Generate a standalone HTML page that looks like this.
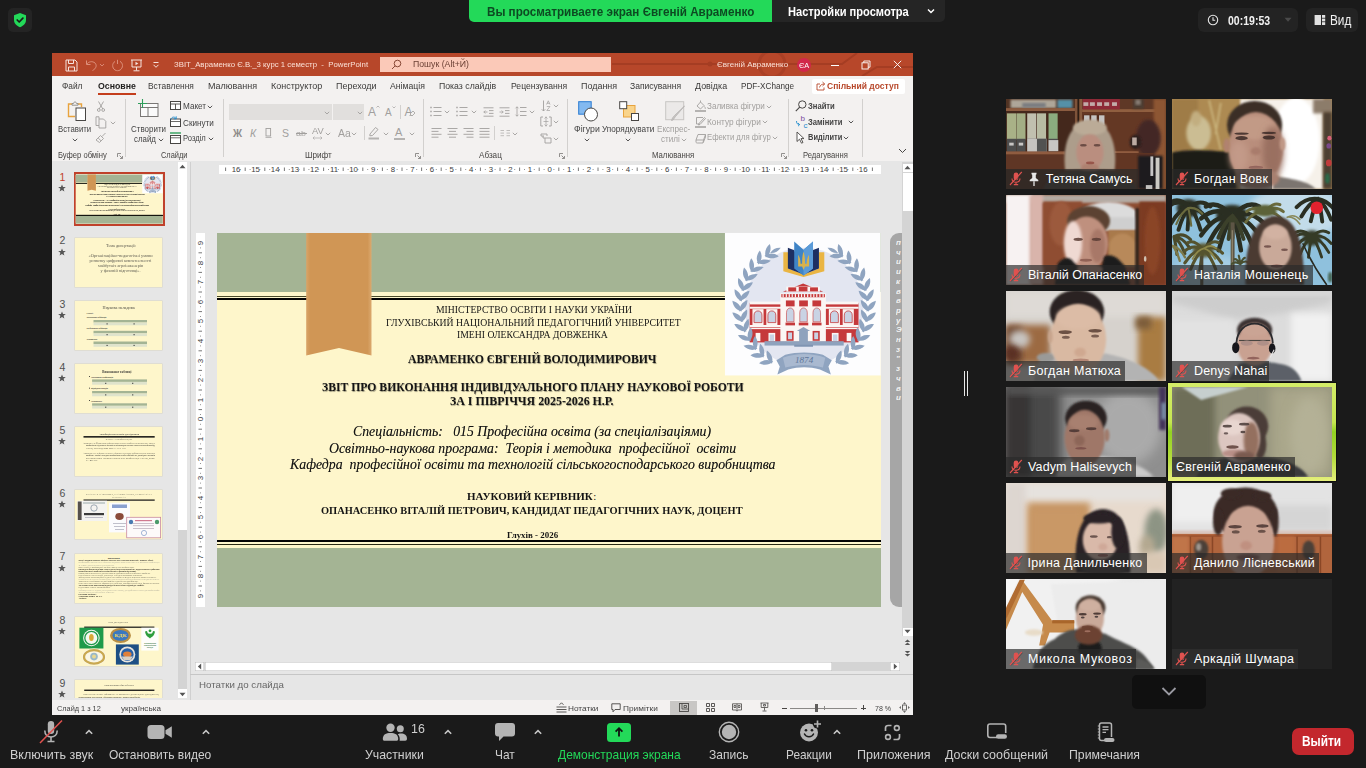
<!DOCTYPE html>
<html lang="uk"><head><meta charset="utf-8"><title>Zoom Meeting</title>
<style>
html,body{margin:0;padding:0;background:#1a1a1a;}
body{width:1366px;height:768px;position:relative;overflow:hidden;font-family:"Liberation Sans",sans-serif;}
svg{display:block;overflow:visible}
</style></head><body>
<div style="position:absolute;left:8px;top:8px;width:24px;height:24px;background:#242424;border-radius:5px;"></div>
<svg style="position:absolute;left:12px;top:12px" width="16" height="16" viewBox="0 0 16 16">
<path d="M8 1 L14 3.2 V8 C14 11.6 11.2 14 8 15.2 C4.800 14 2 11.6 2 8 V3.2 Z" fill="#23d959"/>
<path d="M5.200 8 L7.200 10 L10.900 6.200" fill="none" stroke="#1a1a1a" stroke-width="1.7" stroke-linecap="round" stroke-linejoin="round"/></svg>
<div style="position:absolute;left:469px;top:0px;width:303px;height:22px;background:#23d959;border-radius:0 0 0 5px;"></div>
<div style="position:absolute;left:772px;top:0px;width:173px;height:22px;background:#252525;border-radius:0 0 5px 0;"></div>
<span style="position:absolute;left:487.10px;top:4.50px;font:normal 700 13px/1 'Liberation Sans', sans-serif;color:#0d4a22;white-space:pre;letter-spacing:0.000px;transform-origin:0 0;transform:scaleX(0.8970);">Вы просматриваете экран Євгеній Авраменко</span>
<span style="position:absolute;left:787.60px;top:4.50px;font:normal 700 13px/1 'Liberation Sans', sans-serif;color:#ffffff;white-space:pre;letter-spacing:0.000px;transform-origin:0 0;transform:scaleX(0.8531);">Настройки просмотра</span>
<svg style="position:absolute;left:926px;top:7px" width="10" height="8" viewBox="0 0 10 8"><path d="M2 2.500 L5 5.500 L8 2.500" fill="none" stroke="#fff" stroke-width="1.500"/></svg>
<div style="position:absolute;left:1198px;top:8px;width:100px;height:24px;background:#232323;border-radius:6px;"></div>
<div style="position:absolute;left:1306px;top:8px;width:52px;height:24px;background:#232323;border-radius:6px;"></div>
<svg style="position:absolute;left:1207px;top:14px" width="12" height="12" viewBox="0 0 12 12"><circle cx="6" cy="6" r="4.700" fill="none" stroke="#e6e6e6" stroke-width="1.100"/><path d="M6 3.300 V6.300 H8.200" fill="none" stroke="#e6e6e6" stroke-width="1.100"/></svg>
<span style="position:absolute;left:1228.30px;top:13.50px;font:normal 700 13px/1 'Liberation Sans', sans-serif;color:#f0f0f0;white-space:pre;letter-spacing:0.000px;transform-origin:0 0;transform:scaleX(0.8089);">00:19:53</span>
<svg style="position:absolute;left:1283px;top:17px" width="10" height="6" viewBox="0 0 10 6"><path d="M1.500 0.800 H8.500 L5 4.800 Z" fill="#4a4a4a"/></svg>
<svg style="position:absolute;left:1314px;top:14px" width="12" height="12" viewBox="0 0 12 12"><rect x="0.600" y="1" width="6.400" height="10" fill="#e0e0e0"/><rect x="8" y="1" width="3.200" height="2.800" fill="#e0e0e0"/><rect x="8" y="4.600" width="3.200" height="2.800" fill="#e0e0e0"/><rect x="8" y="8.200" width="3.200" height="2.800" fill="#e0e0e0"/></svg>
<span style="position:absolute;left:1330.10px;top:12.30px;font:normal 400 15px/1 'Liberation Sans', sans-serif;color:#f0f0f0;white-space:pre;letter-spacing:0.000px;transform-origin:0 0;transform:scaleX(0.7848);">Вид</span>
<svg style="position:absolute;left:38px;top:718px" width="28" height="28" viewBox="0 0 28 28">
<rect x="9.800" y="3" width="6.400" height="13" rx="3.200" fill="#b4b4b4"/>
<path d="M6.800 12.500 C6.800 17 9.800 19 13 19 C16.200 19 19.200 17 19.200 12.500" fill="none" stroke="#b4b4b4" stroke-width="1.600"/>
<path d="M13 19 V23 M9.500 23.500 H16.500" stroke="#b4b4b4" stroke-width="1.600" fill="none"/>
<path d="M2 25 L24 2.500" stroke="#e0524f" stroke-width="1.500"/></svg>
<svg style="position:absolute;left:84px;top:728px" width="10" height="8" viewBox="0 0 10 8"><path d="M1.800 5.800 L5 2.600 L8.200 5.800" fill="none" stroke="#c8c8c8" stroke-width="1.500"/></svg>
<span style="position:absolute;left:10.10px;top:748.00px;font:normal 400 13px/1 'Liberation Sans', sans-serif;color:#cfcfcf;white-space:pre;letter-spacing:0.000px;transform-origin:0 0;transform:scaleX(0.9607);">Включить звук</span>
<svg style="position:absolute;left:147px;top:724px" width="26" height="16" viewBox="0 0 26 16">
<rect x="0.500" y="1" width="17" height="14" rx="3.500" fill="#b4b4b4"/><path d="M18.500 6.200 L24.800 2.200 V13.800 L18.500 9.800 Z" fill="#b4b4b4"/></svg>
<svg style="position:absolute;left:201px;top:728px" width="10" height="8" viewBox="0 0 10 8"><path d="M1.800 5.800 L5 2.600 L8.200 5.800" fill="none" stroke="#c8c8c8" stroke-width="1.500"/></svg>
<span style="position:absolute;left:108.60px;top:748.00px;font:normal 400 13px/1 'Liberation Sans', sans-serif;color:#cfcfcf;white-space:pre;letter-spacing:0.000px;transform-origin:0 0;transform:scaleX(0.9234);">Остановить видео</span>
<svg style="position:absolute;left:382px;top:722px" width="26" height="20" viewBox="0 0 26 20">
<circle cx="8.500" cy="5.800" r="4.200" fill="#b4b4b4"/><path d="M0.800 17 C0.800 12.500 4 11 8.500 11 C13 11 16.200 12.500 16.200 17 C16.200 18.200 15.500 18.800 14.500 18.800 H2.500 C1.500 18.800 0.800 18.200 0.800 17 Z" fill="#b4b4b4"/>
<circle cx="18.300" cy="6.800" r="3.500" fill="#b4b4b4"/><path d="M17.600 18.800 C18 17 17.800 14 15.800 12.200 C17 11.600 18 11.500 19 11.500 C22.500 11.500 25 13 25 16.800 C25 18 24.300 18.800 23.300 18.800 Z" fill="#b4b4b4"/></svg>
<span style="position:absolute;left:411.10px;top:723.42px;font:normal 400 12.5px/1 'Liberation Sans', sans-serif;color:#cfcfcf;white-space:pre;letter-spacing:0.000px;transform-origin:0 0;transform:scaleX(0.9924);">16</span>
<svg style="position:absolute;left:442.7px;top:728px" width="10" height="8" viewBox="0 0 10 8"><path d="M1.800 5.800 L5 2.600 L8.200 5.800" fill="none" stroke="#c8c8c8" stroke-width="1.500"/></svg>
<span style="position:absolute;left:365.30px;top:748.00px;font:normal 400 13px/1 'Liberation Sans', sans-serif;color:#cfcfcf;white-space:pre;letter-spacing:0.000px;transform-origin:0 0;transform:scaleX(0.9467);">Участники</span>
<svg style="position:absolute;left:494px;top:722px" width="22" height="20" viewBox="0 0 22 20">
<path d="M4 1 H18 C19.800 1 21 2.200 21 4 V11.500 C21 13.300 19.800 14.500 18 14.500 H9.500 L5 19 V14.500 H4 C2.200 14.500 1 13.300 1 11.500 V4 C1 2.200 2.200 1 4 1 Z" fill="#b4b4b4"/></svg>
<svg style="position:absolute;left:532.5px;top:728px" width="10" height="8" viewBox="0 0 10 8"><path d="M1.800 5.800 L5 2.600 L8.200 5.800" fill="none" stroke="#c8c8c8" stroke-width="1.500"/></svg>
<span style="position:absolute;left:494.60px;top:748.00px;font:normal 400 13px/1 'Liberation Sans', sans-serif;color:#cfcfcf;white-space:pre;letter-spacing:0.000px;transform-origin:0 0;transform:scaleX(0.9176);">Чат</span>
<div style="position:absolute;left:607px;top:723px;width:24px;height:18.5px;background:#23d959;border-radius:3.500px;"></div>
<svg style="position:absolute;left:613px;top:726px" width="12" height="12" viewBox="0 0 12 12"><path d="M6 10.500 V2.500 M2.600 5.600 L6 2.200 L9.400 5.600" fill="none" stroke="#111" stroke-width="1.800"/></svg>
<span style="position:absolute;left:557.80px;top:748.00px;font:normal 400 13px/1 'Liberation Sans', sans-serif;color:#23d959;white-space:pre;letter-spacing:0.000px;transform-origin:0 0;transform:scaleX(0.9229);">Демонстрация экрана</span>
<svg style="position:absolute;left:718px;top:721px" width="22" height="22" viewBox="0 0 22 22"><circle cx="11" cy="11" r="9.700" fill="none" stroke="#b4b4b4" stroke-width="1.400"/><circle cx="11" cy="11" r="7.200" fill="#b4b4b4"/></svg>
<span style="position:absolute;left:708.60px;top:748.00px;font:normal 400 13px/1 'Liberation Sans', sans-serif;color:#cfcfcf;white-space:pre;letter-spacing:0.000px;transform-origin:0 0;transform:scaleX(0.9260);">Запись</span>
<svg style="position:absolute;left:798px;top:718px" width="26" height="26" viewBox="0 0 26 26">
<circle cx="11" cy="14.500" r="9" fill="#b4b4b4"/><circle cx="8" cy="12.300" r="1.300" fill="#1a1a1a"/><circle cx="14" cy="12.300" r="1.300" fill="#1a1a1a"/>
<path d="M6.500 16 C8 19.500 14 19.500 15.500 16" fill="none" stroke="#1a1a1a" stroke-width="1.500" stroke-linecap="round"/>
<circle cx="19.500" cy="6" r="4.600" fill="#1a1a1a"/><path d="M19.500 2.500 V9.500 M16 6 H23" stroke="#b4b4b4" stroke-width="1.600"/></svg>
<svg style="position:absolute;left:831.5px;top:728px" width="10" height="8" viewBox="0 0 10 8"><path d="M1.800 5.800 L5 2.600 L8.200 5.800" fill="none" stroke="#c8c8c8" stroke-width="1.500"/></svg>
<span style="position:absolute;left:786.10px;top:748.00px;font:normal 400 13px/1 'Liberation Sans', sans-serif;color:#cfcfcf;white-space:pre;letter-spacing:0.000px;transform-origin:0 0;transform:scaleX(0.9120);">Реакции</span>
<svg style="position:absolute;left:884px;top:724px" width="18" height="18" viewBox="0 0 18 18">
<path d="M1.500 7 V4 C1.500 2.600 2.600 1.500 4 1.500 H7.500" fill="none" stroke="#b4b4b4" stroke-width="1.700"/>
<circle cx="12.800" cy="4" r="2.400" fill="none" stroke="#b4b4b4" stroke-width="1.600"/>
<circle cx="4" cy="13" r="2.400" fill="none" stroke="#b4b4b4" stroke-width="1.600"/>
<path d="M9.500 15.500 H13 C14.400 15.500 15.500 14.400 15.500 13 V10" fill="none" stroke="#b4b4b4" stroke-width="1.700"/></svg>
<span style="position:absolute;left:856.60px;top:748.00px;font:normal 400 13px/1 'Liberation Sans', sans-serif;color:#cfcfcf;white-space:pre;letter-spacing:0.000px;transform-origin:0 0;transform:scaleX(0.9663);">Приложения</span>
<svg style="position:absolute;left:986px;top:722px" width="22" height="20" viewBox="0 0 22 20">
<path d="M11 15.500 H4 C2.600 15.500 1.800 14.700 1.800 13.300 V4.200 C1.800 2.800 2.600 2 4 2 H17.500 C18.900 2 19.700 2.800 19.700 4.200 V11" fill="none" stroke="#b4b4b4" stroke-width="1.600"/>
<rect x="10" y="12.300" width="11" height="4.400" rx="2.200" fill="#b4b4b4"/></svg>
<span style="position:absolute;left:945.30px;top:748.00px;font:normal 400 13px/1 'Liberation Sans', sans-serif;color:#cfcfcf;white-space:pre;letter-spacing:0.000px;transform-origin:0 0;transform:scaleX(0.9610);">Доски сообщений</span>
<svg style="position:absolute;left:1096px;top:721px" width="20" height="23" viewBox="0 0 20 23">
<path d="M9 19.500 H5.500 C4.300 19.500 3.500 18.700 3.500 17.500 V4 C3.500 2.800 4.300 2 5.500 2 H13.500 C14.700 2 15.500 2.800 15.500 4 V16" fill="none" stroke="#b4b4b4" stroke-width="1.500"/>
<path d="M6.500 6 H12.500 M6.500 8.700 H12.500 M6.500 11.400 H10" stroke="#b4b4b4" stroke-width="1.300"/>
<path d="M1.800 5 H4 M1.800 8 H4 M1.800 11 H4 M1.800 14 H4 M1.800 17 H4" stroke="#b4b4b4" stroke-width="1"/>
<rect x="8" y="17" width="10.500" height="4" rx="2" fill="#b4b4b4"/></svg>
<span style="position:absolute;left:1069.10px;top:748.00px;font:normal 400 13px/1 'Liberation Sans', sans-serif;color:#cfcfcf;white-space:pre;letter-spacing:0.000px;transform-origin:0 0;transform:scaleX(0.9459);">Примечания</span>
<div style="position:absolute;left:1291.5px;top:728px;width:62px;height:26.5px;background:#c3272d;border-radius:7px;"></div>
<span style="position:absolute;left:1302.30px;top:734.15px;font:normal 700 14px/1 'Liberation Sans', sans-serif;color:#ffffff;white-space:pre;letter-spacing:0.000px;transform-origin:0 0;transform:scaleX(0.8474);">Выйти</span>
<div style="position:absolute;left:1132px;top:675px;width:74px;height:33.5px;background:#101010;border-radius:5px;"></div>
<svg style="position:absolute;left:1160px;top:685px" width="18" height="12" viewBox="0 0 18 12"><path d="M2.500 3 L9 9.500 L15.500 3" fill="none" stroke="#9a9aa2" stroke-width="1.800"/></svg>
<div style="position:absolute;left:964px;top:371px;width:1px;height:25px;background:#e8e8e8;"></div>
<div style="position:absolute;left:967px;top:371px;width:1px;height:25px;background:#e8e8e8;"></div>
<div style="position:absolute;left:52px;top:53px;width:861px;height:662px;background:#e6e6e6;"></div>
<div style="position:absolute;left:52px;top:53px;width:861px;height:23px;background:#b7472a;"></div>
<svg style="position:absolute;left:612px;top:53px;overflow:hidden" width="301" height="23" viewBox="0 0 301 23">
<path d="M0 11 H150 M170 11 H230 L245 0 M250 23 L265 14 H301" fill="none" stroke="#a53d23" stroke-width="2"/>
<circle cx="160" cy="11" r="13" fill="none" stroke="#aa4026" stroke-width="3"/><circle cx="98" cy="11" r="2.500" fill="#a53d23"/></svg>
<svg style="position:absolute;left:65px;top:59px" width="13" height="13" viewBox="0 0 13 13"><path d="M1 1 H10 L12 3 V12 H1 Z" fill="none" stroke="#f6e4de" stroke-width="1"/><path d="M3.500 1 V4.500 H8.500 V1 M3.500 12 V8 H9.500 V12" fill="none" stroke="#f6e4de" stroke-width="1"/></svg>
<svg style="position:absolute;left:85px;top:59px" width="13" height="13" viewBox="0 0 13 13"><path d="M1.500 1.500 V5.500 H5.500 M1.800 5.200 C3.500 2.500 7.500 1.800 10 4 C12 6 11.500 9.500 7.500 11.500" fill="none" stroke="#dd8f7a" stroke-width="1"/></svg>
<svg style="position:absolute;left:99px;top:63px" width="6" height="4" viewBox="0 0 6 4"><path d="M1 1 L3 3 L5 1" fill="none" stroke="#dd8f7a" stroke-width="0.900"/></svg>
<svg style="position:absolute;left:111px;top:59px" width="13" height="13" viewBox="0 0 13 13"><path d="M4 2.500 C1 4 0.800 9 4 11 C7.500 13 11.500 10.500 11.500 6.500 C11.500 4.800 10.500 3.200 9 2.300 M6.500 0.800 V5" fill="none" stroke="#dd8f7a" stroke-width="1"/></svg>
<svg style="position:absolute;left:130px;top:59px" width="13" height="13" viewBox="0 0 13 13"><path d="M1 1 H12 M2 1 V8 H11 V1 M6.500 8 V11.500 M3.500 11.800 H9.500" fill="none" stroke="#f6e4de" stroke-width="1"/><path d="M5.500 2.800 L8.300 4.500 L5.500 6.200 Z" fill="#f6e4de"/></svg>
<svg style="position:absolute;left:152px;top:61px" width="8" height="8" viewBox="0 0 8 8"><path d="M1.500 1.500 H6.500 M1.500 3.800 L4 6.300 L6.500 3.800" fill="none" stroke="#f6e4de" stroke-width="1"/></svg>
<span style="position:absolute;left:174.30px;top:60.73px;font:normal 400 8px/1 'Liberation Sans', sans-serif;color:#fbe0d6;white-space:pre;letter-spacing:0.000px;transform-origin:0 0;transform:scaleX(0.9738);">ЗВІТ_Авраменко Є.В._3 курс 1 семестр  -  PowerPoint</span>
<div style="position:absolute;left:380px;top:57px;width:231px;height:14.5px;background:#fbc9b8;"></div>
<svg style="position:absolute;left:391px;top:59px" width="11" height="11" viewBox="0 0 11 11"><circle cx="6.500" cy="4.500" r="3.300" fill="none" stroke="#7a3a28" stroke-width="0.900"/><path d="M4.200 6.800 L1 10" stroke="#7a3a28" stroke-width="0.900"/></svg>
<span style="position:absolute;left:412.90px;top:60.56px;font:normal 400 8.2px/1 'Liberation Sans', sans-serif;color:#6b4034;white-space:pre;letter-spacing:0.000px;transform-origin:0 0;transform:scaleX(1.0638);">Пошук (Alt+Й)</span>
<span style="position:absolute;left:717.30px;top:60.73px;font:normal 400 8px/1 'Liberation Sans', sans-serif;color:#fbe0d6;white-space:pre;letter-spacing:0.000px;transform-origin:0 0;transform:scaleX(1.0018);">Євгеній Авраменко</span>
<div style="position:absolute;left:797px;top:58px;width:14px;height:14px;background:#d1274b;border-radius:7px;"></div>
<span style="position:absolute;left:798.90px;top:61.87px;font:normal 400 7px/1 'Liberation Sans', sans-serif;color:#ffffff;white-space:pre;letter-spacing:0.000px;transform-origin:0 0;transform:scaleX(1.0512);">ЄА</span>
<div style="position:absolute;left:831px;top:64.5px;width:8px;height:1px;background:#ffffff;"></div>
<svg style="position:absolute;left:861px;top:60px" width="10" height="10" viewBox="0 0 10 10"><rect x="1" y="2.800" width="6.200" height="6.200" fill="none" stroke="#fff" stroke-width="0.900"/><path d="M2.800 2.800 V1 H9 V7.200 H7.200" fill="none" stroke="#fff" stroke-width="0.900"/></svg>
<svg style="position:absolute;left:893px;top:60px" width="9" height="9" viewBox="0 0 9 9"><path d="M0.800 0.800 L8.200 8.200 M8.200 0.800 L0.800 8.200" stroke="#fff" stroke-width="0.900"/></svg>
<div style="position:absolute;left:52px;top:76px;width:861px;height:85px;background:#f3f1f0;"></div>
<span style="position:absolute;left:62.20px;top:81.68px;font:normal 400 9px/1 'Liberation Sans', sans-serif;color:#3b3a39;white-space:pre;letter-spacing:0.000px;transform-origin:0 0;transform:scaleX(0.9259);">Файл</span>
<span style="position:absolute;left:148.10px;top:81.68px;font:normal 400 9px/1 'Liberation Sans', sans-serif;color:#3b3a39;white-space:pre;letter-spacing:0.000px;transform-origin:0 0;transform:scaleX(0.9332);">Вставлення</span>
<span style="position:absolute;left:208.40px;top:81.68px;font:normal 400 9px/1 'Liberation Sans', sans-serif;color:#3b3a39;white-space:pre;letter-spacing:0.000px;transform-origin:0 0;transform:scaleX(0.9978);">Малювання</span>
<span style="position:absolute;left:270.80px;top:81.68px;font:normal 400 9px/1 'Liberation Sans', sans-serif;color:#3b3a39;white-space:pre;letter-spacing:0.000px;transform-origin:0 0;transform:scaleX(0.9995);">Конструктор</span>
<span style="position:absolute;left:336.20px;top:81.68px;font:normal 400 9px/1 'Liberation Sans', sans-serif;color:#3b3a39;white-space:pre;letter-spacing:0.000px;transform-origin:0 0;transform:scaleX(0.9956);">Переходи</span>
<span style="position:absolute;left:389.70px;top:81.68px;font:normal 400 9px/1 'Liberation Sans', sans-serif;color:#3b3a39;white-space:pre;letter-spacing:0.000px;transform-origin:0 0;transform:scaleX(0.9640);">Анімація</span>
<span style="position:absolute;left:439.20px;top:81.68px;font:normal 400 9px/1 'Liberation Sans', sans-serif;color:#3b3a39;white-space:pre;letter-spacing:0.000px;transform-origin:0 0;transform:scaleX(0.9683);">Показ слайдів</span>
<span style="position:absolute;left:510.90px;top:81.68px;font:normal 400 9px/1 'Liberation Sans', sans-serif;color:#3b3a39;white-space:pre;letter-spacing:0.000px;transform-origin:0 0;transform:scaleX(0.9562);">Рецензування</span>
<span style="position:absolute;left:580.80px;top:81.68px;font:normal 400 9px/1 'Liberation Sans', sans-serif;color:#3b3a39;white-space:pre;letter-spacing:0.000px;transform-origin:0 0;transform:scaleX(0.9929);">Подання</span>
<span style="position:absolute;left:630.10px;top:81.68px;font:normal 400 9px/1 'Liberation Sans', sans-serif;color:#3b3a39;white-space:pre;letter-spacing:0.000px;transform-origin:0 0;transform:scaleX(0.9490);">Записування</span>
<span style="position:absolute;left:694.60px;top:81.68px;font:normal 400 9px/1 'Liberation Sans', sans-serif;color:#3b3a39;white-space:pre;letter-spacing:0.000px;transform-origin:0 0;transform:scaleX(0.9915);">Довідка</span>
<span style="position:absolute;left:741.30px;top:81.68px;font:normal 400 9px/1 'Liberation Sans', sans-serif;color:#3b3a39;white-space:pre;letter-spacing:0.000px;transform-origin:0 0;transform:scaleX(0.9072);">PDF-XChange</span>
<span style="position:absolute;left:98.00px;top:81.68px;font:normal 700 9px/1 'Liberation Sans', sans-serif;color:#201f1e;white-space:pre;letter-spacing:0.000px;transform-origin:0 0;transform:scaleX(0.9737);">Основне</span>
<div style="position:absolute;left:98px;top:92.5px;width:38px;height:2px;background:#c43e1c;"></div>
<div style="position:absolute;left:811.5px;top:78.5px;width:93px;height:15px;background:#ffffff;border-radius:2px;"></div>
<svg style="position:absolute;left:816px;top:81px" width="10" height="10" viewBox="0 0 10 10"><path d="M4 3 H1 V9 H8 V6.500" fill="none" stroke="#b7472a" stroke-width="0.900"/><path d="M3.500 6.500 C4 4 6 3 8.500 3 M6.500 1 L8.700 3 L6.500 5" fill="none" stroke="#b7472a" stroke-width="0.900"/></svg>
<span style="position:absolute;left:826.60px;top:81.68px;font:normal 700 9px/1 'Liberation Sans', sans-serif;color:#b7472a;white-space:pre;letter-spacing:0.000px;transform-origin:0 0;transform:scaleX(0.9465);">Спільний доступ</span>
<svg style="position:absolute;left:67px;top:101px" width="20" height="21" viewBox="0 0 20 21">
<path d="M5 3 H1.500 V15.500 H8" fill="none" stroke="#e8a33d" stroke-width="1.400"/><path d="M11 3 H14.500 V6" fill="none" stroke="#e8a33d" stroke-width="1.400"/>
<path d="M5 4.200 V2.500 H6.500 C6.500 0.500 9.500 0.500 9.500 2.500 H11 V4.200 Z" fill="#f3f1f0" stroke="#8a8886" stroke-width="0.900"/>
<rect x="9" y="7" width="9.500" height="12.500" fill="#ffffff" stroke="#484644" stroke-width="1"/></svg>
<span style="position:absolute;left:58.40px;top:124.57px;font:normal 400 8.3px/1 'Liberation Sans', sans-serif;color:#444444;white-space:pre;letter-spacing:0.000px;transform-origin:0 0;transform:scaleX(0.9356);">Вставити</span>
<svg style="position:absolute;left:72px;top:137.5px" width="6" height="4" viewBox="0 0 6 4"><path d="M0.800 0.800 L3 3 L5.200 0.800" fill="none" stroke="#444444" stroke-width="0.900"/></svg>
<svg style="position:absolute;left:96px;top:101px" width="10" height="11" viewBox="0 0 10 11"><path d="M2.500 0.500 L6.800 8 M7.500 0.500 L3.200 8" stroke="#a19f9d" stroke-width="0.900"/><circle cx="2.800" cy="9" r="1.400" fill="none" stroke="#a19f9d" stroke-width="0.900"/><circle cx="7.200" cy="9" r="1.400" fill="none" stroke="#a19f9d" stroke-width="0.900"/></svg>
<svg style="position:absolute;left:95px;top:116px" width="12" height="13" viewBox="0 0 12 13"><path d="M4 3 V0.800 H1 V9.500 H4" fill="none" stroke="#a19f9d" stroke-width="0.900"/><path d="M4 3 H8.500 L10.800 5.300 V12 H4 Z" fill="#f3f1f0" stroke="#a19f9d" stroke-width="0.900"/></svg>
<svg style="position:absolute;left:110px;top:121px" width="6" height="4" viewBox="0 0 6 4"><path d="M0.800 0.800 L3 3 L5.200 0.800" fill="none" stroke="#a19f9d" stroke-width="0.900"/></svg>
<svg style="position:absolute;left:95px;top:132px" width="12" height="12" viewBox="0 0 12 12"><path d="M10.500 1 L7 4.500 M5.500 3.500 L8.500 6.500 L4.500 10.500 L1 8 Z M3.200 6 L6 8.800" fill="none" stroke="#a19f9d" stroke-width="0.900"/></svg>
<span style="position:absolute;left:58.40px;top:150.97px;font:normal 400 8.3px/1 'Liberation Sans', sans-serif;color:#484644;white-space:pre;letter-spacing:0.000px;transform-origin:0 0;transform:scaleX(0.9183);">Буфер обміну</span>
<svg style="position:absolute;left:116.5px;top:153px" width="6" height="6" viewBox="0 0 6 6"><path d="M0.500 4 V0.500 H4 M2.500 2.500 L5.300 5.300 M5.500 3 V5.500 H3" fill="none" stroke="#797775" stroke-width="0.800"/></svg>
<div style="position:absolute;left:124.5px;top:99px;width:1px;height:58px;background:#d2d0ce;"></div>
<svg style="position:absolute;left:138px;top:99px" width="22" height="19" viewBox="0 0 22 19">
<rect x="2.500" y="4.500" width="17.500" height="13" fill="#fafafa" stroke="#797775" stroke-width="1"/><path d="M2.500 8.500 H20 M10 8.500 V17.500" stroke="#797775" stroke-width="1"/>
<path d="M4.500 0 V9 M0 4.500 H9" stroke="#2e9e5b" stroke-width="1.100"/></svg>
<span style="position:absolute;left:131.30px;top:124.77px;font:normal 400 8.3px/1 'Liberation Sans', sans-serif;color:#444444;white-space:pre;letter-spacing:0.000px;transform-origin:0 0;transform:scaleX(0.9614);">Створити</span>
<span style="position:absolute;left:134.40px;top:135.47px;font:normal 400 8.3px/1 'Liberation Sans', sans-serif;color:#444444;white-space:pre;letter-spacing:0.000px;transform-origin:0 0;transform:scaleX(0.9483);">слайд</span>
<svg style="position:absolute;left:157.5px;top:137.5px" width="6" height="4" viewBox="0 0 6 4"><path d="M0.800 0.800 L3 3 L5.200 0.800" fill="none" stroke="#444444" stroke-width="0.900"/></svg>
<svg style="position:absolute;left:170px;top:101px" width="11" height="9" viewBox="0 0 11 9"><rect x="0.500" y="0.500" width="10" height="8" fill="#fff" stroke="#484644" stroke-width="1"/><path d="M0.500 3 H10.500 M5.500 3 V8.500" stroke="#484644" stroke-width="0.900"/></svg>
<span style="position:absolute;left:183.30px;top:102.17px;font:normal 400 8.3px/1 'Liberation Sans', sans-serif;color:#444444;white-space:pre;letter-spacing:0.000px;transform-origin:0 0;transform:scaleX(0.9836);">Макет</span>
<svg style="position:absolute;left:207.3px;top:104.5px" width="6" height="4" viewBox="0 0 6 4"><path d="M0.800 0.800 L3 3 L5.200 0.800" fill="none" stroke="#444444" stroke-width="0.900"/></svg>
<svg style="position:absolute;left:170px;top:116px" width="11" height="11" viewBox="0 0 11 11"><rect x="0.500" y="3" width="10" height="7.500" fill="#fff" stroke="#484644" stroke-width="1"/><path d="M1 3.500 C1.500 0.500 5 0.500 6 2.500 M6.200 0.300 V2.800 H3.800" fill="none" stroke="#1e8bcd" stroke-width="0.900"/><path d="M0.500 5.500 H10.500" stroke="#484644" stroke-width="0.800"/></svg>
<span style="position:absolute;left:183.30px;top:118.57px;font:normal 400 8.3px/1 'Liberation Sans', sans-serif;color:#444444;white-space:pre;letter-spacing:0.000px;transform-origin:0 0;transform:scaleX(0.9834);">Скинути</span>
<svg style="position:absolute;left:170px;top:132px" width="11" height="12" viewBox="0 0 11 12"><path d="M0 1 H11" stroke="#2e9e5b" stroke-width="1.400"/><rect x="0.500" y="3.500" width="10" height="8" fill="#fff" stroke="#484644" stroke-width="1"/><path d="M0.500 5.800 H10.500" stroke="#484644" stroke-width="0.800"/></svg>
<span style="position:absolute;left:183.30px;top:134.17px;font:normal 400 8.3px/1 'Liberation Sans', sans-serif;color:#444444;white-space:pre;letter-spacing:0.000px;transform-origin:0 0;transform:scaleX(0.9177);">Розділ</span>
<svg style="position:absolute;left:207.7px;top:136.5px" width="6" height="4" viewBox="0 0 6 4"><path d="M0.800 0.800 L3 3 L5.200 0.800" fill="none" stroke="#444444" stroke-width="0.900"/></svg>
<span style="position:absolute;left:160.90px;top:150.97px;font:normal 400 8.3px/1 'Liberation Sans', sans-serif;color:#484644;white-space:pre;letter-spacing:0.000px;transform-origin:0 0;transform:scaleX(0.8964);">Слайди</span>
<div style="position:absolute;left:223px;top:99px;width:1px;height:58px;background:#d2d0ce;"></div>
<div style="position:absolute;left:229px;top:104px;width:102.5px;height:16px;background:#e1dfdd;"></div>
<div style="position:absolute;left:333.2px;top:104px;width:30.5px;height:16px;background:#e1dfdd;"></div>
<svg style="position:absolute;left:324px;top:110.5px" width="6" height="4" viewBox="0 0 6 4"><path d="M0.800 0.800 L3 3 L5.200 0.800" fill="none" stroke="#a19f9d" stroke-width="0.900"/></svg>
<svg style="position:absolute;left:356.5px;top:110.5px" width="6" height="4" viewBox="0 0 6 4"><path d="M0.800 0.800 L3 3 L5.200 0.800" fill="none" stroke="#a19f9d" stroke-width="0.900"/></svg>
<span style="position:absolute;left:368.00px;top:105.84px;font:normal 400 12px/1 'Liberation Sans', sans-serif;color:#a19f9d;white-space:pre;letter-spacing:0.000px;">A</span>
<svg style="position:absolute;left:376px;top:105px" width="4" height="3" viewBox="0 0 4 3"><path d="M0.500 2.500 L2 1 L3.500 2.500" fill="none" stroke="#a19f9d" stroke-width="0.700"/></svg>
<span style="position:absolute;left:385.00px;top:107.53px;font:normal 400 10px/1 'Liberation Sans', sans-serif;color:#a19f9d;white-space:pre;letter-spacing:0.000px;">A</span>
<svg style="position:absolute;left:391.500px;top:106px" width="4" height="3" viewBox="0 0 4 3"><path d="M0.500 0.500 L2 2 L3.500 0.500" fill="none" stroke="#a19f9d" stroke-width="0.700"/></svg>
<div style="position:absolute;left:399.5px;top:105px;width:1px;height:14px;background:#d2d0ce;"></div>
<span style="position:absolute;left:404.50px;top:105.84px;font:normal 400 12px/1 'Liberation Sans', sans-serif;color:#a19f9d;white-space:pre;letter-spacing:0.000px;">A</span>
<svg style="position:absolute;left:409px;top:110px" width="7" height="7" viewBox="0 0 7 7"><path d="M1 4 L4 1 L6 3 L3 6 Z M2 5.500 H0.500" fill="#f3f1f0" stroke="#a19f9d" stroke-width="0.800"/></svg>
<span style="position:absolute;left:233.00px;top:128.53px;font:normal 700 10px/1 'Liberation Sans', sans-serif;color:#8f8d8b;white-space:pre;letter-spacing:0.000px;">Ж</span>
<span style="position:absolute;left:250.00px;top:128.11px;font:italic 400 10.5px/1 'Liberation Sans', sans-serif;color:#a19f9d;white-space:pre;letter-spacing:0.000px;">К</span>
<svg style="position:absolute;left:265px;top:128px" width="7" height="10" viewBox="0 0 7 10"><rect x="1" y="0.500" width="4.600" height="7.500" fill="none" stroke="#a19f9d" stroke-width="0.900"/><path d="M0.500 9.500 H6.500" stroke="#a19f9d" stroke-width="0.700"/></svg>
<span style="position:absolute;left:282.00px;top:128.11px;font:normal 400 10.5px/1 'Liberation Sans', sans-serif;color:#a19f9d;white-space:pre;letter-spacing:0.000px;">S</span>
<span style="position:absolute;left:296.10px;top:129.73px;font:normal 400 8px/1 'Liberation Sans', sans-serif;color:#a19f9d;white-space:pre;letter-spacing:0.000px;transform-origin:0 0;transform:scaleX(1.1004);">ab</span>
<div style="position:absolute;left:296px;top:133px;width:10.5px;height:0.8px;background:#a19f9d;"></div>
<span style="position:absolute;left:311.60px;top:127.38px;font:normal 400 9px/1 'Liberation Sans', sans-serif;color:#a19f9d;white-space:pre;letter-spacing:0.000px;transform-origin:0 0;transform:scaleX(1.0402);">AV</span>
<svg style="position:absolute;left:312px;top:136px" width="11" height="4" viewBox="0 0 11 4"><path d="M1 2 H10 M2.500 0.500 L1 2 L2.500 3.500 M8.500 0.500 L10 2 L8.500 3.500" fill="none" stroke="#a19f9d" stroke-width="0.600"/></svg>
<svg style="position:absolute;left:325px;top:131.5px" width="6" height="4" viewBox="0 0 6 4"><path d="M0.800 0.800 L3 3 L5.200 0.800" fill="none" stroke="#a19f9d" stroke-width="0.900"/></svg>
<span style="position:absolute;left:337.60px;top:128.11px;font:normal 400 10.5px/1 'Liberation Sans', sans-serif;color:#a19f9d;white-space:pre;letter-spacing:0.000px;transform-origin:0 0;transform:scaleX(0.9966);">Aa</span>
<svg style="position:absolute;left:351px;top:131.5px" width="6" height="4" viewBox="0 0 6 4"><path d="M0.800 0.800 L3 3 L5.200 0.800" fill="none" stroke="#a19f9d" stroke-width="0.900"/></svg>
<div style="position:absolute;left:363.5px;top:126px;width:1px;height:14px;background:#d2d0ce;"></div>
<svg style="position:absolute;left:368px;top:126px" width="12" height="14" viewBox="0 0 12 14"><path d="M2 8 L7.500 1.500 L10 3.500 L4.500 9.500 L1.800 9.800 Z" fill="none" stroke="#a19f9d" stroke-width="0.900"/><rect x="0.500" y="11.500" width="10.500" height="2" fill="#b5b3b1"/></svg>
<svg style="position:absolute;left:382.5px;top:131.5px" width="6" height="4" viewBox="0 0 6 4"><path d="M0.800 0.800 L3 3 L5.200 0.800" fill="none" stroke="#a19f9d" stroke-width="0.900"/></svg>
<span style="position:absolute;left:395.00px;top:126.69px;font:normal 400 11px/1 'Liberation Sans', sans-serif;color:#a19f9d;white-space:pre;letter-spacing:0.000px;">A</span>
<div style="position:absolute;left:394px;top:138px;width:10.5px;height:2px;background:#b5b3b1;"></div>
<svg style="position:absolute;left:408.5px;top:131.5px" width="6" height="4" viewBox="0 0 6 4"><path d="M0.800 0.800 L3 3 L5.200 0.800" fill="none" stroke="#a19f9d" stroke-width="0.900"/></svg>
<span style="position:absolute;left:304.60px;top:150.97px;font:normal 400 8.3px/1 'Liberation Sans', sans-serif;color:#484644;white-space:pre;letter-spacing:0.000px;transform-origin:0 0;transform:scaleX(0.9812);">Шрифт</span>
<svg style="position:absolute;left:414.5px;top:153px" width="6" height="6" viewBox="0 0 6 6"><path d="M0.500 4 V0.500 H4 M2.500 2.500 L5.300 5.300 M5.500 3 V5.500 H3" fill="none" stroke="#797775" stroke-width="0.800"/></svg>
<div style="position:absolute;left:422.5px;top:99px;width:1px;height:58px;background:#d2d0ce;"></div>
<svg style="position:absolute;left:429.5px;top:106px" width="12" height="11" viewBox="0 0 12 11"><path d="M3.500 1.500 H11.500 M3.500 5.500 H11.500 M3.500 9.500 H11.500" stroke="#a19f9d" stroke-width="0.900"/><path d="M0.300 1.500 H1.700 M0.300 5.500 H1.700 M0.300 9.500 H1.700" stroke="#a19f9d" stroke-width="1.300"/></svg>
<svg style="position:absolute;left:444px;top:110px" width="6" height="4" viewBox="0 0 6 4"><path d="M0.800 0.800 L3 3 L5.200 0.800" fill="none" stroke="#a19f9d" stroke-width="0.900"/></svg>
<svg style="position:absolute;left:456px;top:106px" width="12" height="11" viewBox="0 0 12 11"><path d="M3.500 1.500 H11.500 M3.500 5.500 H11.500 M3.500 9.500 H11.500" stroke="#a19f9d" stroke-width="0.900"/><path d="M0.300 1.500 H1.700 M0.300 5.500 H1.700 M0.300 9.500 H1.700" stroke="#a19f9d" stroke-width="1.300"/></svg>
<svg style="position:absolute;left:470.5px;top:110px" width="6" height="4" viewBox="0 0 6 4"><path d="M0.800 0.800 L3 3 L5.200 0.800" fill="none" stroke="#a19f9d" stroke-width="0.900"/></svg>
<svg style="position:absolute;left:483px;top:106.5px" width="11" height="10" viewBox="0 0 11 10"><path d="M0.500 0.800 H10.500 M6 3.600 H10.500 M6 6.400 H10.500 M0.500 9.200 H10.500" stroke="#a19f9d" stroke-width="0.900"/><path d="M4.500 5 H0.800 M2.300 3.500 L0.800 5 L2.300 6.500" fill="none" stroke="#a19f9d" stroke-width="0.800"/></svg>
<svg style="position:absolute;left:499px;top:106.5px" width="11" height="10" viewBox="0 0 11 10"><path d="M0.500 0.800 H10.500 M6 3.600 H10.500 M6 6.400 H10.500 M0.500 9.200 H10.500" stroke="#a19f9d" stroke-width="0.900"/><path d="M0.500 5 H4.200 M2.700 3.500 L4.200 5 L2.700 6.500" fill="none" stroke="#a19f9d" stroke-width="0.800"/></svg>
<svg style="position:absolute;left:515px;top:106px" width="12" height="11" viewBox="0 0 12 11"><path d="M5 1.500 H11.500 M5 5.500 H11.500 M5 9.500 H11.500" stroke="#a19f9d" stroke-width="0.900"/><path d="M2 0.800 V10.200 M0.500 2.300 L2 0.800 L3.500 2.300 M0.500 8.700 L2 10.200 L3.500 8.700" fill="none" stroke="#a19f9d" stroke-width="0.800"/></svg>
<svg style="position:absolute;left:529px;top:110px" width="6" height="4" viewBox="0 0 6 4"><path d="M0.800 0.800 L3 3 L5.200 0.800" fill="none" stroke="#a19f9d" stroke-width="0.900"/></svg>
<svg style="position:absolute;left:541px;top:100px" width="10" height="12" viewBox="0 0 10 12"><path d="M2.500 0.500 V11 M0.800 9.300 L2.500 11 L4.200 9.300" fill="none" stroke="#a19f9d" stroke-width="0.900"/><path d="M5.500 4.500 L7.300 0.800 L9 4.500 M6 3.300 H8.500 M5.800 6.500 H9 L5.800 10.500 H9" fill="none" stroke="#a19f9d" stroke-width="0.700"/></svg>
<svg style="position:absolute;left:553px;top:104px" width="6" height="4" viewBox="0 0 6 4"><path d="M0.800 0.800 L3 3 L5.200 0.800" fill="none" stroke="#a19f9d" stroke-width="0.900"/></svg>
<svg style="position:absolute;left:540px;top:116px" width="12" height="11" viewBox="0 0 12 11"><path d="M3 1 H0.800 V10 H3 M9 1 H11.200 V10 H9" fill="none" stroke="#a19f9d" stroke-width="0.900"/><path d="M6 0.500 V10.500 M4.500 2.500 L6 1 L7.500 2.500 M4.500 8.500 L6 10 L7.500 8.500 M3.500 5.500 H8.500" fill="none" stroke="#a19f9d" stroke-width="0.700"/></svg>
<svg style="position:absolute;left:553px;top:120px" width="6" height="4" viewBox="0 0 6 4"><path d="M0.800 0.800 L3 3 L5.200 0.800" fill="none" stroke="#a19f9d" stroke-width="0.900"/></svg>
<svg style="position:absolute;left:540px;top:133px" width="12" height="11" viewBox="0 0 12 11"><path d="M1 1 H7 V3 M1 1 V3 H4 M3 3 V5 H5 V7 M5 5 H11 V10 H5 V7" fill="none" stroke="#a19f9d" stroke-width="0.900"/></svg>
<svg style="position:absolute;left:553px;top:137px" width="6" height="4" viewBox="0 0 6 4"><path d="M0.800 0.800 L3 3 L5.200 0.800" fill="none" stroke="#a19f9d" stroke-width="0.900"/></svg>
<svg style="position:absolute;left:431px;top:128px" width="14" height="12" viewBox="0 0 14 12"><path d="M0.5 0.5 H10.5 M0.5 3.4 H7.5 M0.5 6.3 H10.5 M0.5 9.2 H7.5" stroke="#a19f9d" stroke-width="0.9" fill="none"/></svg>
<svg style="position:absolute;left:447px;top:128px" width="14" height="12" viewBox="0 0 14 12"><path d="M0.5 0.5 H10.5 M2 3.4 H9 M0.5 6.3 H10.5 M2 9.2 H9" stroke="#a19f9d" stroke-width="0.9" fill="none"/></svg>
<svg style="position:absolute;left:463px;top:128px" width="14" height="12" viewBox="0 0 14 12"><path d="M0.5 0.5 H10.5 M3.5 3.4 H10.5 M0.5 6.3 H10.5 M3.5 9.2 H10.5" stroke="#a19f9d" stroke-width="0.9" fill="none"/></svg>
<svg style="position:absolute;left:479px;top:128px" width="14" height="12" viewBox="0 0 14 12"><path d="M0.5 0.5 H10.5 M0.5 3.4 H10.5 M0.5 6.3 H10.5 M0.5 9.2 H10.5" stroke="#a19f9d" stroke-width="0.9" fill="none"/></svg>
<div style="position:absolute;left:493.5px;top:126px;width:1px;height:14px;background:#d2d0ce;"></div>
<svg style="position:absolute;left:500px;top:130px" width="14" height="8" viewBox="0 0 14 8"><path d="M0.5 0.5 H4 M0.5 3.1 H4 M0.5 5.7 H4" stroke="#bab8b6" stroke-width="0.9" fill="none"/></svg>
<svg style="position:absolute;left:505.5px;top:130px" width="14" height="8" viewBox="0 0 14 8"><path d="M0.5 0.5 H4 M0.5 3.1 H4 M0.5 5.7 H4" stroke="#bab8b6" stroke-width="0.9" fill="none"/></svg>
<svg style="position:absolute;left:512px;top:131.5px" width="6" height="4" viewBox="0 0 6 4"><path d="M0.800 0.800 L3 3 L5.200 0.800" fill="none" stroke="#a19f9d" stroke-width="0.900"/></svg>
<span style="position:absolute;left:478.60px;top:150.97px;font:normal 400 8.3px/1 'Liberation Sans', sans-serif;color:#484644;white-space:pre;letter-spacing:0.000px;transform-origin:0 0;transform:scaleX(0.9793);">Абзац</span>
<svg style="position:absolute;left:559px;top:153px" width="6" height="6" viewBox="0 0 6 6"><path d="M0.500 4 V0.500 H4 M2.500 2.500 L5.300 5.300 M5.500 3 V5.500 H3" fill="none" stroke="#797775" stroke-width="0.800"/></svg>
<div style="position:absolute;left:567px;top:99px;width:1px;height:58px;background:#d2d0ce;"></div>
<svg style="position:absolute;left:577.500px;top:100.800px" width="21" height="21" viewBox="0 0 21 21"><rect x="0.700" y="0.700" width="12.500" height="12.500" fill="#83b9f0" stroke="#2b7cd3" stroke-width="1"/><circle cx="13" cy="13.500" r="6.500" fill="#ffffff" stroke="#484644" stroke-width="1"/></svg>
<span style="position:absolute;left:574.10px;top:124.77px;font:normal 400 8.3px/1 'Liberation Sans', sans-serif;color:#444444;white-space:pre;letter-spacing:0.000px;transform-origin:0 0;transform:scaleX(1.0537);">Фігури</span>
<svg style="position:absolute;left:584px;top:137.5px" width="6" height="4" viewBox="0 0 6 4"><path d="M0.800 0.800 L3 3 L5.200 0.800" fill="none" stroke="#444444" stroke-width="0.900"/></svg>
<svg style="position:absolute;left:618.500px;top:100.800px" width="21" height="21" viewBox="0 0 21 21"><rect x="4.500" y="4.500" width="11.500" height="11.500" fill="#f9d48b" stroke="#e8a33d" stroke-width="1"/><rect x="0.700" y="0.700" width="7" height="7" fill="#ffffff" stroke="#484644" stroke-width="1"/><rect x="12.500" y="12.500" width="7" height="7" fill="#ffffff" stroke="#484644" stroke-width="1"/></svg>
<span style="position:absolute;left:602.10px;top:124.77px;font:normal 400 8.3px/1 'Liberation Sans', sans-serif;color:#444444;white-space:pre;letter-spacing:0.000px;transform-origin:0 0;transform:scaleX(0.9882);">Упорядкувати</span>
<svg style="position:absolute;left:625px;top:137.5px" width="6" height="4" viewBox="0 0 6 4"><path d="M0.800 0.800 L3 3 L5.200 0.800" fill="none" stroke="#444444" stroke-width="0.900"/></svg>
<svg style="position:absolute;left:665px;top:100.800px" width="22" height="22" viewBox="0 0 22 22"><rect x="0.700" y="0.700" width="18" height="18" fill="#ebe9e8" stroke="#c8c6c4" stroke-width="1"/><path d="M19.500 5 L10.500 15.500 L8 19 L6.500 19.500 L7.500 17 L9.500 14.500 Z" fill="#c8c6c4" stroke="#b5b3b1" stroke-width="0.800"/></svg>
<span style="position:absolute;left:657.10px;top:124.77px;font:normal 400 8.3px/1 'Liberation Sans', sans-serif;color:#a19f9d;white-space:pre;letter-spacing:0.000px;transform-origin:0 0;transform:scaleX(0.9781);">Експрес-</span>
<span style="position:absolute;left:660.60px;top:135.47px;font:normal 400 8.3px/1 'Liberation Sans', sans-serif;color:#a19f9d;white-space:pre;letter-spacing:0.000px;transform-origin:0 0;transform:scaleX(0.9750);">стилі</span>
<svg style="position:absolute;left:681px;top:137.5px" width="6" height="4" viewBox="0 0 6 4"><path d="M0.800 0.800 L3 3 L5.200 0.800" fill="none" stroke="#a19f9d" stroke-width="0.900"/></svg>
<svg style="position:absolute;left:694.5px;top:99.8px" width="11" height="12" viewBox="0 0 11 12"><path d="M2 6 L5.500 2 L9 5.500 L5.500 9 Z M5.500 2 V0.500 M9.500 6.500 C10.500 8 10.500 8.500 9.800 9" fill="none" stroke="#a19f9d" stroke-width="0.900"/><rect x="0" y="10" width="11" height="2" fill="#b5b3b1"/></svg>
<span style="position:absolute;left:707.10px;top:102.17px;font:normal 400 8.3px/1 'Liberation Sans', sans-serif;color:#a19f9d;white-space:pre;letter-spacing:0.000px;transform-origin:0 0;transform:scaleX(0.9755);">Заливка фігури</span>
<svg style="position:absolute;left:766px;top:104.5px" width="6" height="4" viewBox="0 0 6 4"><path d="M0.800 0.800 L3 3 L5.200 0.800" fill="none" stroke="#a19f9d" stroke-width="0.900"/></svg>
<svg style="position:absolute;left:694.5px;top:115.5px" width="11" height="12" viewBox="0 0 11 12"><path d="M1.500 1.500 H8 M1.500 1.500 V8 H5 M4 7.500 L9.500 1.500 L10.500 2.500 L5 8.500 L3.500 9 Z" fill="none" stroke="#a19f9d" stroke-width="0.900"/><rect x="0" y="10" width="11" height="2" fill="#b5b3b1"/></svg>
<span style="position:absolute;left:707.10px;top:117.97px;font:normal 400 8.3px/1 'Liberation Sans', sans-serif;color:#a19f9d;white-space:pre;letter-spacing:0.000px;transform-origin:0 0;transform:scaleX(0.9980);">Контур фігури</span>
<svg style="position:absolute;left:762px;top:120px" width="6" height="4" viewBox="0 0 6 4"><path d="M0.800 0.800 L3 3 L5.200 0.800" fill="none" stroke="#a19f9d" stroke-width="0.900"/></svg>
<svg style="position:absolute;left:694.5px;top:132.5px" width="12" height="11" viewBox="0 0 12 11"><path d="M3 1.500 H10.500 L8.500 7 H1 Z M1 7 V9 C1 10 2 10 2.500 10 H8 L8.500 7 M10.500 1.500 V4 L8.300 9.500" fill="none" stroke="#a19f9d" stroke-width="0.900"/></svg>
<span style="position:absolute;left:707.10px;top:133.47px;font:normal 400 8.3px/1 'Liberation Sans', sans-serif;color:#a19f9d;white-space:pre;letter-spacing:0.000px;transform-origin:0 0;transform:scaleX(0.9342);">Ефекти для фігур</span>
<svg style="position:absolute;left:772px;top:135.5px" width="6" height="4" viewBox="0 0 6 4"><path d="M0.800 0.800 L3 3 L5.200 0.800" fill="none" stroke="#a19f9d" stroke-width="0.900"/></svg>
<span style="position:absolute;left:651.60px;top:150.97px;font:normal 400 8.3px/1 'Liberation Sans', sans-serif;color:#484644;white-space:pre;letter-spacing:0.000px;transform-origin:0 0;transform:scaleX(0.9342);">Малювання</span>
<svg style="position:absolute;left:780.5px;top:153px" width="6" height="6" viewBox="0 0 6 6"><path d="M0.500 4 V0.500 H4 M2.500 2.500 L5.300 5.300 M5.500 3 V5.500 H3" fill="none" stroke="#797775" stroke-width="0.800"/></svg>
<div style="position:absolute;left:788px;top:99px;width:1px;height:58px;background:#d2d0ce;"></div>
<svg style="position:absolute;left:795px;top:100px" width="12" height="12" viewBox="0 0 12 12"><circle cx="7.300" cy="4.500" r="3.700" fill="none" stroke="#484644" stroke-width="1"/><path d="M4.700 7.200 L0.800 11.200" stroke="#484644" stroke-width="1.100"/></svg>
<span style="position:absolute;left:807.60px;top:102.17px;font:normal 700 8.3px/1 'Liberation Sans', sans-serif;color:#444444;white-space:pre;letter-spacing:0.000px;transform-origin:0 0;transform:scaleX(0.9212);">Знайти</span>
<svg style="position:absolute;left:795px;top:116px" width="12" height="13" viewBox="0 0 12 13"><path d="M1.500 5 C1.500 8 3 8.500 4.500 8.500 M3 7 L4.700 8.600 L3 10.200" fill="none" stroke="#1e8bcd" stroke-width="0.900"/></svg>
<span style="position:absolute;left:800.50px;top:115.23px;font:normal 400 8px/1 'Liberation Sans', sans-serif;color:#7b4fa0;white-space:pre;letter-spacing:0.000px;">b</span>
<span style="position:absolute;left:803.50px;top:122.23px;font:normal 400 8px/1 'Liberation Sans', sans-serif;color:#1e8bcd;white-space:pre;letter-spacing:0.000px;">c</span>
<span style="position:absolute;left:807.60px;top:117.97px;font:normal 700 8.3px/1 'Liberation Sans', sans-serif;color:#444444;white-space:pre;letter-spacing:0.000px;transform-origin:0 0;transform:scaleX(0.9139);">Замінити</span>
<svg style="position:absolute;left:848px;top:120px" width="6" height="4" viewBox="0 0 6 4"><path d="M0.800 0.800 L3 3 L5.200 0.800" fill="none" stroke="#444444" stroke-width="0.900"/></svg>
<svg style="position:absolute;left:796px;top:131px" width="9" height="13" viewBox="0 0 9 13"><path d="M1 1 V10.500 L3.500 8.200 L5.500 12.200 L7 11.500 L5 7.600 H8 Z" fill="#fff" stroke="#484644" stroke-width="0.900"/></svg>
<span style="position:absolute;left:807.60px;top:133.47px;font:normal 700 8.3px/1 'Liberation Sans', sans-serif;color:#444444;white-space:pre;letter-spacing:0.000px;transform-origin:0 0;transform:scaleX(0.8978);">Виділити</span>
<svg style="position:absolute;left:843px;top:135.5px" width="6" height="4" viewBox="0 0 6 4"><path d="M0.800 0.800 L3 3 L5.200 0.800" fill="none" stroke="#444444" stroke-width="0.900"/></svg>
<span style="position:absolute;left:803.10px;top:150.97px;font:normal 400 8.3px/1 'Liberation Sans', sans-serif;color:#484644;white-space:pre;letter-spacing:0.000px;transform-origin:0 0;transform:scaleX(0.9175);">Редагування</span>
<div style="position:absolute;left:862px;top:99px;width:1px;height:58px;background:#d2d0ce;"></div>
<svg style="position:absolute;left:898px;top:148px" width="9" height="6" viewBox="0 0 9 6"><path d="M1 1 L4.500 4.500 L8 1" fill="none" stroke="#484644" stroke-width="1"/></svg>
<div style="position:absolute;left:178.3px;top:162px;width:9px;height:536px;background:#ffffff;"></div>
<div style="position:absolute;left:178.3px;top:529.5px;width:9px;height:160px;background:#d4d4d4;"></div>
<div style="position:absolute;left:190px;top:162px;width:1px;height:538px;background:#d0d0d0;"></div>
<svg style="position:absolute;left:179.300px;top:164px" width="7" height="5" viewBox="0 0 7 5"><path d="M0.500 4.200 L3.500 0.800 L6.500 4.200 Z" fill="#555"/></svg>
<div style="position:absolute;left:178.3px;top:689.2px;width:9px;height:9px;background:#ffffff;"></div>
<svg style="position:absolute;left:179.300px;top:691.500px" width="7" height="5" viewBox="0 0 7 5"><path d="M0.500 0.800 L3.500 4.200 L6.500 0.800 Z" fill="#555"/></svg>
<div style="position:absolute;left:219px;top:165px;width:662px;height:8.5px;background:#ffffff;"></div>
<div style="position:absolute;left:196px;top:233px;width:8.5px;height:374px;background:#ffffff;"></div>
<span style="position:absolute;left:231.66px;top:165.60px;font:normal 400 7.8px/1 'Liberation Sans', sans-serif;color:#3c3c3c;white-space:pre;letter-spacing:0.000px;">16</span>
<span style="position:absolute;left:251.26px;top:165.60px;font:normal 400 7.8px/1 'Liberation Sans', sans-serif;color:#3c3c3c;white-space:pre;letter-spacing:0.000px;">15</span>
<span style="position:absolute;left:270.86px;top:165.60px;font:normal 400 7.8px/1 'Liberation Sans', sans-serif;color:#3c3c3c;white-space:pre;letter-spacing:0.000px;">14</span>
<span style="position:absolute;left:290.46px;top:165.60px;font:normal 400 7.8px/1 'Liberation Sans', sans-serif;color:#3c3c3c;white-space:pre;letter-spacing:0.000px;">13</span>
<span style="position:absolute;left:310.06px;top:165.60px;font:normal 400 7.8px/1 'Liberation Sans', sans-serif;color:#3c3c3c;white-space:pre;letter-spacing:0.000px;">12</span>
<span style="position:absolute;left:329.95px;top:165.60px;font:normal 400 7.8px/1 'Liberation Sans', sans-serif;color:#3c3c3c;white-space:pre;letter-spacing:0.000px;">11</span>
<span style="position:absolute;left:349.26px;top:165.60px;font:normal 400 7.8px/1 'Liberation Sans', sans-serif;color:#3c3c3c;white-space:pre;letter-spacing:0.000px;">10</span>
<span style="position:absolute;left:371.03px;top:165.60px;font:normal 400 7.8px/1 'Liberation Sans', sans-serif;color:#3c3c3c;white-space:pre;letter-spacing:0.000px;">9</span>
<span style="position:absolute;left:390.63px;top:165.60px;font:normal 400 7.8px/1 'Liberation Sans', sans-serif;color:#3c3c3c;white-space:pre;letter-spacing:0.000px;">8</span>
<span style="position:absolute;left:410.23px;top:165.60px;font:normal 400 7.8px/1 'Liberation Sans', sans-serif;color:#3c3c3c;white-space:pre;letter-spacing:0.000px;">7</span>
<span style="position:absolute;left:429.83px;top:165.60px;font:normal 400 7.8px/1 'Liberation Sans', sans-serif;color:#3c3c3c;white-space:pre;letter-spacing:0.000px;">6</span>
<span style="position:absolute;left:449.43px;top:165.60px;font:normal 400 7.8px/1 'Liberation Sans', sans-serif;color:#3c3c3c;white-space:pre;letter-spacing:0.000px;">5</span>
<span style="position:absolute;left:469.03px;top:165.60px;font:normal 400 7.8px/1 'Liberation Sans', sans-serif;color:#3c3c3c;white-space:pre;letter-spacing:0.000px;">4</span>
<span style="position:absolute;left:488.63px;top:165.60px;font:normal 400 7.8px/1 'Liberation Sans', sans-serif;color:#3c3c3c;white-space:pre;letter-spacing:0.000px;">3</span>
<span style="position:absolute;left:508.23px;top:165.60px;font:normal 400 7.8px/1 'Liberation Sans', sans-serif;color:#3c3c3c;white-space:pre;letter-spacing:0.000px;">2</span>
<span style="position:absolute;left:527.83px;top:165.60px;font:normal 400 7.8px/1 'Liberation Sans', sans-serif;color:#3c3c3c;white-space:pre;letter-spacing:0.000px;">1</span>
<span style="position:absolute;left:547.43px;top:165.60px;font:normal 400 7.8px/1 'Liberation Sans', sans-serif;color:#3c3c3c;white-space:pre;letter-spacing:0.000px;">0</span>
<span style="position:absolute;left:567.03px;top:165.60px;font:normal 400 7.8px/1 'Liberation Sans', sans-serif;color:#3c3c3c;white-space:pre;letter-spacing:0.000px;">1</span>
<span style="position:absolute;left:586.63px;top:165.60px;font:normal 400 7.8px/1 'Liberation Sans', sans-serif;color:#3c3c3c;white-space:pre;letter-spacing:0.000px;">2</span>
<span style="position:absolute;left:606.23px;top:165.60px;font:normal 400 7.8px/1 'Liberation Sans', sans-serif;color:#3c3c3c;white-space:pre;letter-spacing:0.000px;">3</span>
<span style="position:absolute;left:625.83px;top:165.60px;font:normal 400 7.8px/1 'Liberation Sans', sans-serif;color:#3c3c3c;white-space:pre;letter-spacing:0.000px;">4</span>
<span style="position:absolute;left:645.43px;top:165.60px;font:normal 400 7.8px/1 'Liberation Sans', sans-serif;color:#3c3c3c;white-space:pre;letter-spacing:0.000px;">5</span>
<span style="position:absolute;left:665.03px;top:165.60px;font:normal 400 7.8px/1 'Liberation Sans', sans-serif;color:#3c3c3c;white-space:pre;letter-spacing:0.000px;">6</span>
<span style="position:absolute;left:684.63px;top:165.60px;font:normal 400 7.8px/1 'Liberation Sans', sans-serif;color:#3c3c3c;white-space:pre;letter-spacing:0.000px;">7</span>
<span style="position:absolute;left:704.23px;top:165.60px;font:normal 400 7.8px/1 'Liberation Sans', sans-serif;color:#3c3c3c;white-space:pre;letter-spacing:0.000px;">8</span>
<span style="position:absolute;left:723.83px;top:165.60px;font:normal 400 7.8px/1 'Liberation Sans', sans-serif;color:#3c3c3c;white-space:pre;letter-spacing:0.000px;">9</span>
<span style="position:absolute;left:741.26px;top:165.60px;font:normal 400 7.8px/1 'Liberation Sans', sans-serif;color:#3c3c3c;white-space:pre;letter-spacing:0.000px;">10</span>
<span style="position:absolute;left:761.15px;top:165.60px;font:normal 400 7.8px/1 'Liberation Sans', sans-serif;color:#3c3c3c;white-space:pre;letter-spacing:0.000px;">11</span>
<span style="position:absolute;left:780.46px;top:165.60px;font:normal 400 7.8px/1 'Liberation Sans', sans-serif;color:#3c3c3c;white-space:pre;letter-spacing:0.000px;">12</span>
<span style="position:absolute;left:800.06px;top:165.60px;font:normal 400 7.8px/1 'Liberation Sans', sans-serif;color:#3c3c3c;white-space:pre;letter-spacing:0.000px;">13</span>
<span style="position:absolute;left:819.66px;top:165.60px;font:normal 400 7.8px/1 'Liberation Sans', sans-serif;color:#3c3c3c;white-space:pre;letter-spacing:0.000px;">14</span>
<span style="position:absolute;left:839.26px;top:165.60px;font:normal 400 7.8px/1 'Liberation Sans', sans-serif;color:#3c3c3c;white-space:pre;letter-spacing:0.000px;">15</span>
<span style="position:absolute;left:858.86px;top:165.60px;font:normal 400 7.8px/1 'Liberation Sans', sans-serif;color:#3c3c3c;white-space:pre;letter-spacing:0.000px;">16</span>
<svg style="position:absolute;left:219px;top:165px" width="662" height="9" viewBox="0 0 662 9"><path d="M26.2 2.500 V6 M21.3 4 V4.800 M31.1 4 V4.800 M45.8 2.500 V6 M40.9 4 V4.800 M50.7 4 V4.800 M65.4 2.500 V6 M60.5 4 V4.800 M70.3 4 V4.800 M85.0 2.500 V6 M80.1 4 V4.800 M89.9 4 V4.800 M104.6 2.500 V6 M99.7 4 V4.800 M109.5 4 V4.800 M124.2 2.500 V6 M119.3 4 V4.800 M129.1 4 V4.800 M143.8 2.500 V6 M138.9 4 V4.800 M148.7 4 V4.800 M163.4 2.500 V6 M158.5 4 V4.800 M168.3 4 V4.800 M183.0 2.500 V6 M178.1 4 V4.800 M187.9 4 V4.800 M202.6 2.500 V6 M197.7 4 V4.800 M207.5 4 V4.800 M222.2 2.500 V6 M217.3 4 V4.800 M227.1 4 V4.800 M241.8 2.500 V6 M236.9 4 V4.800 M246.7 4 V4.800 M261.4 2.500 V6 M256.5 4 V4.800 M266.3 4 V4.800 M281.0 2.500 V6 M276.1 4 V4.800 M285.9 4 V4.800 M300.6 2.500 V6 M295.7 4 V4.800 M305.5 4 V4.800 M320.2 2.500 V6 M315.3 4 V4.800 M325.1 4 V4.800 M339.8 2.500 V6 M334.9 4 V4.800 M344.7 4 V4.800 M359.4 2.500 V6 M354.5 4 V4.800 M364.3 4 V4.800 M379.0 2.500 V6 M374.1 4 V4.800 M383.9 4 V4.800 M398.6 2.500 V6 M393.7 4 V4.800 M403.5 4 V4.800 M418.2 2.500 V6 M413.3 4 V4.800 M423.1 4 V4.800 M437.8 2.500 V6 M432.9 4 V4.800 M442.7 4 V4.800 M457.4 2.500 V6 M452.5 4 V4.800 M462.3 4 V4.800 M477.0 2.500 V6 M472.1 4 V4.800 M481.9 4 V4.800 M496.6 2.500 V6 M491.7 4 V4.800 M501.5 4 V4.800 M516.2 2.500 V6 M511.3 4 V4.800 M521.1 4 V4.800 M535.8 2.500 V6 M530.9 4 V4.800 M540.7 4 V4.800 M555.4 2.500 V6 M550.5 4 V4.800 M560.3 4 V4.800 M575.0 2.500 V6 M570.1 4 V4.800 M579.9 4 V4.800 M594.6 2.500 V6 M589.7 4 V4.800 M599.5 4 V4.800 M614.2 2.500 V6 M609.3 4 V4.800 M619.1 4 V4.800 M633.8 2.500 V6 M628.9 4 V4.800 M638.7 4 V4.800 M6.6 2.500 V6 M653.4 2.500 V6" stroke="#555" stroke-width="0.800" fill="none"/></svg>
<span style="position:absolute;left:196.5px;top:239.0px;width:8px;height:8px;font:8px/8px 'Liberation Sans',sans-serif;color:#3c3c3c;text-align:center;transform:rotate(-90deg);">9</span>
<span style="position:absolute;left:196.5px;top:258.6px;width:8px;height:8px;font:8px/8px 'Liberation Sans',sans-serif;color:#3c3c3c;text-align:center;transform:rotate(-90deg);">8</span>
<span style="position:absolute;left:196.5px;top:278.2px;width:8px;height:8px;font:8px/8px 'Liberation Sans',sans-serif;color:#3c3c3c;text-align:center;transform:rotate(-90deg);">7</span>
<span style="position:absolute;left:196.5px;top:297.8px;width:8px;height:8px;font:8px/8px 'Liberation Sans',sans-serif;color:#3c3c3c;text-align:center;transform:rotate(-90deg);">6</span>
<span style="position:absolute;left:196.5px;top:317.4px;width:8px;height:8px;font:8px/8px 'Liberation Sans',sans-serif;color:#3c3c3c;text-align:center;transform:rotate(-90deg);">5</span>
<span style="position:absolute;left:196.5px;top:337.0px;width:8px;height:8px;font:8px/8px 'Liberation Sans',sans-serif;color:#3c3c3c;text-align:center;transform:rotate(-90deg);">4</span>
<span style="position:absolute;left:196.5px;top:356.6px;width:8px;height:8px;font:8px/8px 'Liberation Sans',sans-serif;color:#3c3c3c;text-align:center;transform:rotate(-90deg);">3</span>
<span style="position:absolute;left:196.5px;top:376.2px;width:8px;height:8px;font:8px/8px 'Liberation Sans',sans-serif;color:#3c3c3c;text-align:center;transform:rotate(-90deg);">2</span>
<span style="position:absolute;left:196.5px;top:395.8px;width:8px;height:8px;font:8px/8px 'Liberation Sans',sans-serif;color:#3c3c3c;text-align:center;transform:rotate(-90deg);">1</span>
<span style="position:absolute;left:196.5px;top:415.4px;width:8px;height:8px;font:8px/8px 'Liberation Sans',sans-serif;color:#3c3c3c;text-align:center;transform:rotate(-90deg);">0</span>
<span style="position:absolute;left:196.5px;top:435.0px;width:8px;height:8px;font:8px/8px 'Liberation Sans',sans-serif;color:#3c3c3c;text-align:center;transform:rotate(-90deg);">1</span>
<span style="position:absolute;left:196.5px;top:454.6px;width:8px;height:8px;font:8px/8px 'Liberation Sans',sans-serif;color:#3c3c3c;text-align:center;transform:rotate(-90deg);">2</span>
<span style="position:absolute;left:196.5px;top:474.2px;width:8px;height:8px;font:8px/8px 'Liberation Sans',sans-serif;color:#3c3c3c;text-align:center;transform:rotate(-90deg);">3</span>
<span style="position:absolute;left:196.5px;top:493.8px;width:8px;height:8px;font:8px/8px 'Liberation Sans',sans-serif;color:#3c3c3c;text-align:center;transform:rotate(-90deg);">4</span>
<span style="position:absolute;left:196.5px;top:513.4px;width:8px;height:8px;font:8px/8px 'Liberation Sans',sans-serif;color:#3c3c3c;text-align:center;transform:rotate(-90deg);">5</span>
<span style="position:absolute;left:196.5px;top:533.0px;width:8px;height:8px;font:8px/8px 'Liberation Sans',sans-serif;color:#3c3c3c;text-align:center;transform:rotate(-90deg);">6</span>
<span style="position:absolute;left:196.5px;top:552.6px;width:8px;height:8px;font:8px/8px 'Liberation Sans',sans-serif;color:#3c3c3c;text-align:center;transform:rotate(-90deg);">7</span>
<span style="position:absolute;left:196.5px;top:572.2px;width:8px;height:8px;font:8px/8px 'Liberation Sans',sans-serif;color:#3c3c3c;text-align:center;transform:rotate(-90deg);">8</span>
<span style="position:absolute;left:196.5px;top:591.8px;width:8px;height:8px;font:8px/8px 'Liberation Sans',sans-serif;color:#3c3c3c;text-align:center;transform:rotate(-90deg);">9</span>
<svg style="position:absolute;left:196px;top:233px" width="9" height="374" viewBox="0 0 9 374"><path d="M2.500 19.8 H6 M4 14.9 H4.800 M4 24.7 H4.800 M2.500 39.4 H6 M4 34.5 H4.800 M4 44.3 H4.800 M2.500 59.0 H6 M4 54.1 H4.800 M4 63.9 H4.800 M2.500 78.6 H6 M4 73.7 H4.800 M4 83.5 H4.800 M2.500 98.2 H6 M4 93.3 H4.800 M4 103.1 H4.800 M2.500 117.8 H6 M4 112.9 H4.800 M4 122.7 H4.800 M2.500 137.4 H6 M4 132.5 H4.800 M4 142.3 H4.800 M2.500 157.0 H6 M4 152.1 H4.800 M4 161.9 H4.800 M2.500 176.6 H6 M4 171.7 H4.800 M4 181.5 H4.800 M2.500 196.2 H6 M4 191.3 H4.800 M4 201.1 H4.800 M2.500 215.8 H6 M4 210.9 H4.800 M4 220.7 H4.800 M2.500 235.4 H6 M4 230.5 H4.800 M4 240.3 H4.800 M2.500 255.0 H6 M4 250.1 H4.800 M4 259.9 H4.800 M2.500 274.6 H6 M4 269.7 H4.800 M4 279.5 H4.800 M2.500 294.2 H6 M4 289.3 H4.800 M4 299.1 H4.800 M2.500 313.8 H6 M4 308.9 H4.800 M4 318.7 H4.800 M2.500 333.4 H6 M4 328.5 H4.800 M4 338.3 H4.800 M2.500 353.0 H6 M4 348.1 H4.800 M4 357.9 H4.800" stroke="#555" stroke-width="0.800" fill="none"/></svg>
<div style="position:absolute;left:902px;top:162px;width:11px;height:476px;background:#d4d4d4;"></div>
<div style="position:absolute;left:902.5px;top:163.5px;width:10px;height:8px;background:#ffffff;"></div>
<svg style="position:absolute;left:904px;top:165px" width="7" height="5" viewBox="0 0 7 5"><path d="M0.500 4.200 L3.500 0.800 L6.500 4.200 Z" fill="#555"/></svg>
<div style="position:absolute;left:902.5px;top:172.5px;width:10px;height:38px;background:#ffffff;"></div>
<div style="position:absolute;left:902.5px;top:627.5px;width:10px;height:8.5px;background:#ffffff;"></div>
<svg style="position:absolute;left:904px;top:629px" width="7" height="5" viewBox="0 0 7 5"><path d="M0.500 0.800 L3.500 4.200 L6.500 0.800 Z" fill="#555"/></svg>
<div style="position:absolute;left:902px;top:636px;width:11px;height:64px;background:#e6e6e6;"></div>
<svg style="position:absolute;left:904px;top:639px" width="7" height="7" viewBox="0 0 7 7"><path d="M0.800 3 L3.500 0.500 L6.200 3 Z M0.800 6 L3.500 3.500 L6.200 6 Z" fill="#555"/></svg>
<svg style="position:absolute;left:904px;top:650px" width="7" height="7" viewBox="0 0 7 7"><path d="M0.800 1 L3.500 3.500 L6.200 1 Z M0.800 4 L3.500 6.500 L6.200 4 Z" fill="#555"/></svg>
<div style="position:absolute;left:889.5px;top:233px;width:12.5px;height:374px;background:#a6a6a6;border-radius:9px 0 0 9px;"></div>
<span style="position:absolute;left:896px;top:238.0px;font:italic 700 8px/9px 'Liberation Sans',sans-serif;color:#f2f2f2;width:6px;overflow:hidden;white-space:pre;">п</span>
<span style="position:absolute;left:896px;top:247.7px;font:italic 700 8px/9px 'Liberation Sans',sans-serif;color:#f2f2f2;width:6px;overflow:hidden;white-space:pre;">ч</span>
<span style="position:absolute;left:896px;top:257.4px;font:italic 700 8px/9px 'Liberation Sans',sans-serif;color:#f2f2f2;width:6px;overflow:hidden;white-space:pre;">и</span>
<span style="position:absolute;left:896px;top:267.1px;font:italic 700 8px/9px 'Liberation Sans',sans-serif;color:#f2f2f2;width:6px;overflow:hidden;white-space:pre;">и</span>
<span style="position:absolute;left:896px;top:276.8px;font:italic 700 8px/9px 'Liberation Sans',sans-serif;color:#f2f2f2;width:6px;overflow:hidden;white-space:pre;">к</span>
<span style="position:absolute;left:896px;top:286.5px;font:italic 700 8px/9px 'Liberation Sans',sans-serif;color:#f2f2f2;width:6px;overflow:hidden;white-space:pre;">в</span>
<span style="position:absolute;left:896px;top:296.2px;font:italic 700 8px/9px 'Liberation Sans',sans-serif;color:#f2f2f2;width:6px;overflow:hidden;white-space:pre;">в</span>
<span style="position:absolute;left:896px;top:305.9px;font:italic 700 8px/9px 'Liberation Sans',sans-serif;color:#f2f2f2;width:6px;overflow:hidden;white-space:pre;">р</span>
<span style="position:absolute;left:896px;top:315.6px;font:italic 700 8px/9px 'Liberation Sans',sans-serif;color:#f2f2f2;width:6px;overflow:hidden;white-space:pre;">у</span>
<span style="position:absolute;left:896px;top:325.3px;font:italic 700 8px/9px 'Liberation Sans',sans-serif;color:#f2f2f2;width:6px;overflow:hidden;white-space:pre;">Э</span>
<span style="position:absolute;left:896px;top:335.0px;font:italic 700 8px/9px 'Liberation Sans',sans-serif;color:#f2f2f2;width:6px;overflow:hidden;white-space:pre;">н</span>
<span style="position:absolute;left:896px;top:344.7px;font:italic 700 8px/9px 'Liberation Sans',sans-serif;color:#f2f2f2;width:6px;overflow:hidden;white-space:pre;">з</span>
<span style="position:absolute;left:896px;top:354.4px;font:italic 700 8px/9px 'Liberation Sans',sans-serif;color:#f2f2f2;width:6px;overflow:hidden;white-space:pre;">"</span>
<span style="position:absolute;left:896px;top:364.1px;font:italic 700 8px/9px 'Liberation Sans',sans-serif;color:#f2f2f2;width:6px;overflow:hidden;white-space:pre;">з</span>
<span style="position:absolute;left:896px;top:373.8px;font:italic 700 8px/9px 'Liberation Sans',sans-serif;color:#f2f2f2;width:6px;overflow:hidden;white-space:pre;">ч</span>
<span style="position:absolute;left:896px;top:383.5px;font:italic 700 8px/9px 'Liberation Sans',sans-serif;color:#f2f2f2;width:6px;overflow:hidden;white-space:pre;">в</span>
<span style="position:absolute;left:896px;top:393.2px;font:italic 700 8px/9px 'Liberation Sans',sans-serif;color:#f2f2f2;width:6px;overflow:hidden;white-space:pre;">и</span>
<div style="position:absolute;left:194.5px;top:661.5px;width:705.5px;height:9.5px;background:#d4d4d4;"></div>
<div style="position:absolute;left:194.5px;top:661.5px;width:9.5px;height:9.5px;background:#ffffff;box-shadow:inset 0 0 0 0.500px #bbb;"></div>
<svg style="position:absolute;left:197px;top:663px" width="5" height="7" viewBox="0 0 5 7"><path d="M4.200 0.500 L0.800 3.500 L4.200 6.500 Z" fill="#555"/></svg>
<div style="position:absolute;left:204.5px;top:661.5px;width:627px;height:9.5px;background:#ffffff;box-shadow:inset 0 0 0 0.500px #bbb;"></div>
<div style="position:absolute;left:890px;top:661.5px;width:10px;height:9.5px;background:#ffffff;box-shadow:inset 0 0 0 0.500px #bbb;"></div>
<svg style="position:absolute;left:893px;top:663px" width="5" height="7" viewBox="0 0 5 7"><path d="M0.800 0.500 L4.200 3.500 L0.800 6.500 Z" fill="#555"/></svg>
<div style="position:absolute;left:190px;top:674px;width:723px;height:1px;background:#c6c6c6;"></div>
<span style="position:absolute;left:198.60px;top:680.37px;font:normal 400 9.6px/1 'Liberation Sans', sans-serif;color:#666;white-space:pre;letter-spacing:0.000px;transform-origin:0 0;transform:scaleX(1.0131);">Нотатки до слайда</span>
<div style="position:absolute;left:52px;top:700px;width:861px;height:15px;background:#f3f1f0;"></div>
<span style="position:absolute;left:57.20px;top:704.80px;font:normal 400 7.8px/1 'Liberation Sans', sans-serif;color:#444;white-space:pre;letter-spacing:0.000px;transform-origin:0 0;transform:scaleX(0.9416);">Слайд 1 з 12</span>
<span style="position:absolute;left:120.90px;top:704.80px;font:normal 400 7.8px/1 'Liberation Sans', sans-serif;color:#444;white-space:pre;letter-spacing:0.000px;transform-origin:0 0;transform:scaleX(1.0406);">українська</span>
<svg style="position:absolute;left:556px;top:702px" width="11" height="11" viewBox="0 0 11 11"><path d="M0.500 5 H10.500 M0.500 7.500 H10.500 M0.500 10 H10.500 M3.500 2.800 L5.500 0.800 L7.500 2.800" fill="none" stroke="#484644" stroke-width="0.900"/></svg>
<span style="position:absolute;left:568.30px;top:704.80px;font:normal 400 7.8px/1 'Liberation Sans', sans-serif;color:#444;white-space:pre;letter-spacing:0.000px;transform-origin:0 0;transform:scaleX(1.0591);">Нотатки</span>
<svg style="position:absolute;left:611px;top:703px" width="10" height="10" viewBox="0 0 10 10"><path d="M0.800 0.800 H9.200 V6.500 H4 L2 8.800 V6.500 H0.800 Z" fill="none" stroke="#484644" stroke-width="0.900"/></svg>
<span style="position:absolute;left:623.00px;top:704.80px;font:normal 400 7.8px/1 'Liberation Sans', sans-serif;color:#444;white-space:pre;letter-spacing:0.000px;transform-origin:0 0;transform:scaleX(1.0631);">Примітки</span>
<div style="position:absolute;left:670.2px;top:700.5px;width:26.5px;height:14.5px;background:#c8c6c4;"></div>
<svg style="position:absolute;left:679px;top:703px" width="10" height="9" viewBox="0 0 10 9"><rect x="0.500" y="0.500" width="9" height="8" fill="none" stroke="#484644" stroke-width="0.900"/><path d="M3 0.500 V6 H9.500 M5 2.500 H7.500 V4.500 H5 Z" fill="none" stroke="#484644" stroke-width="0.800"/></svg>
<svg style="position:absolute;left:706px;top:703px" width="9" height="9" viewBox="0 0 9 9"><path d="M0.500 0.500 H3.500 V3.500 H0.500 Z M5.500 0.500 H8.500 V3.500 H5.500 Z M0.500 5.500 H3.500 V8.500 H0.500 Z M5.500 5.500 H8.500 V8.500 H5.500 Z" fill="none" stroke="#484644" stroke-width="0.900"/></svg>
<svg style="position:absolute;left:732px;top:703px" width="10" height="9" viewBox="0 0 10 9"><path d="M0.500 0.800 H9.500 V7 H6 L5 8.200 L4 7 H0.500 Z M5 0.800 V7 M2 2.500 H3.800 V4.500 H2 Z M6.200 2.500 H8 V4.500 H6.200 Z" fill="none" stroke="#484644" stroke-width="0.800"/></svg>
<svg style="position:absolute;left:760px;top:702px" width="9" height="10" viewBox="0 0 9 10"><path d="M0.500 1 H8.500 M1.200 1 V5.500 H7.800 V1 M4.500 5.500 V8.500 M2.500 9 H6.500 M3.500 2.500 H5.500 V4 H3.500 Z" fill="none" stroke="#484644" stroke-width="0.800"/></svg>
<div style="position:absolute;left:782px;top:707.5px;width:5px;height:0.8px;background:#484644;"></div>
<div style="position:absolute;left:790.3px;top:707.5px;width:67px;height:0.7px;background:#8a8886;"></div>
<div style="position:absolute;left:823.5px;top:706px;width:0.7px;height:3.5px;background:#8a8886;"></div>
<div style="position:absolute;left:815px;top:704px;width:2.5px;height:8px;background:#605e5c;"></div>
<div style="position:absolute;left:860.7px;top:707.5px;width:5px;height:0.8px;background:#484644;"></div>
<div style="position:absolute;left:862.8px;top:705.4px;width:0.8px;height:5px;background:#484644;"></div>
<span style="position:absolute;left:874.80px;top:704.80px;font:normal 400 7.8px/1 'Liberation Sans', sans-serif;color:#444;white-space:pre;letter-spacing:0.000px;transform-origin:0 0;transform:scaleX(0.9054);">78 %</span>
<svg style="position:absolute;left:899px;top:702px" width="11" height="11" viewBox="0 0 11 11"><rect x="3.500" y="3" width="4" height="5" fill="none" stroke="#484644" stroke-width="0.800"/><path d="M5.500 0.300 L4 1.800 H7 Z M5.500 10.700 L4 9.200 H7 Z M0.300 5.500 L1.800 4 V7 Z M10.700 5.500 L9.200 4 V7 Z" fill="#484644"/></svg>
<div style="position:absolute;left:217px;top:233px;width:664px;height:374px;background:#fef6cb;"></div>
<div style="position:absolute;left:217px;top:233px;width:664px;height:58.5px;background:#a4b494;"></div>
<div style="position:absolute;left:217px;top:296px;width:508px;height:1px;background:#4a4a2a;"></div>
<div style="position:absolute;left:217px;top:298.3px;width:508px;height:1.9px;background:#050505;"></div>
<div style="position:absolute;left:217px;top:540.1px;width:664px;height:1.9px;background:#050505;"></div>
<div style="position:absolute;left:217px;top:544px;width:664px;height:1px;background:#2a2a14;"></div>
<div style="position:absolute;left:217px;top:548px;width:664px;height:59px;background:#a4b494;"></div>
<svg style="position:absolute;left:304px;top:233px" width="70" height="125" viewBox="0 0 70 125">
<defs><linearGradient id="rbg" x1="0" x2="1" y1="0" y2="0"><stop offset="0" stop-color="#d9a468"/><stop offset="0.060" stop-color="#d09655"/><stop offset="0.940" stop-color="#d09655"/><stop offset="1" stop-color="#dba96f"/></linearGradient></defs>
<path d="M2.200 0 H67.500 V122.500 L35 115 L2.200 122.500 Z" fill="url(#rbg)"/></svg>
<svg style="position:absolute;left:720px;top:228px" width="170" height="152" viewBox="0 0 859 768"><rect x="25" y="25" width="787" height="720" fill="#fdfdfe"/><circle cx="425" cy="400" r="300" fill="#e3e6f1"/><rect x="150" y="378" width="550" height="200" fill="#c5393b"/><rect x="150" y="372" width="550" height="14" fill="#fbf6f4"/><rect x="150" y="398" width="550" height="10" fill="#fbf6f4"/><rect x="150" y="490" width="550" height="12" fill="#fbf6f4"/><rect x="150" y="505" width="550" height="6" fill="#fbf6f4"/><rect x="164" y="410" width="56" height="80" fill="#fbf6f4"/><path d="M172 478 V440 C172 412 212 412 212 440 V478 Z" fill="#c9d3e4" stroke="#c5393b" stroke-width="4"/><rect x="234" y="410" width="56" height="80" fill="#fbf6f4"/><path d="M242 478 V440 C242 412 282 412 282 440 V478 Z" fill="#c9d3e4" stroke="#c5393b" stroke-width="4"/><rect x="550" y="410" width="56" height="80" fill="#fbf6f4"/><path d="M558 478 V440 C558 412 598 412 598 440 V478 Z" fill="#c9d3e4" stroke="#c5393b" stroke-width="4"/><rect x="620" y="410" width="56" height="80" fill="#fbf6f4"/><path d="M628 478 V440 C628 412 668 412 668 440 V478 Z" fill="#c9d3e4" stroke="#c5393b" stroke-width="4"/><rect x="245" y="530" width="34" height="42" fill="#fbf6f4"/><rect x="251" y="538" width="22" height="34" fill="#c9d3e4"/><rect x="565" y="530" width="34" height="42" fill="#fbf6f4"/><rect x="571" y="538" width="22" height="34" fill="#c9d3e4"/><rect x="180" y="530" width="24" height="42" fill="#fbf6f4"/><rect x="640" y="530" width="24" height="42" fill="#fbf6f4"/><rect x="305" y="330" width="230" height="245" fill="#fbf6f4"/><path d="M318 322 L420 280 L522 322 Z" fill="#c5393b"/><rect x="335" y="296" width="170" height="26" fill="#fbf6f4"/><rect x="345" y="300" width="40" height="20" fill="#c5393b"/><rect x="455" y="300" width="40" height="20" fill="#c5393b"/><rect x="398" y="298" width="44" height="22" fill="#c5393b"/><rect x="310" y="334" width="220" height="16" fill="#c5393b"/><rect x="316" y="334" width="6" height="16" fill="#fbf6f4"/><rect x="332" y="334" width="6" height="16" fill="#fbf6f4"/><rect x="347" y="334" width="6" height="16" fill="#fbf6f4"/><rect x="362" y="334" width="6" height="16" fill="#fbf6f4"/><rect x="378" y="334" width="6" height="16" fill="#fbf6f4"/><rect x="394" y="334" width="6" height="16" fill="#fbf6f4"/><rect x="409" y="334" width="6" height="16" fill="#fbf6f4"/><rect x="424" y="334" width="6" height="16" fill="#fbf6f4"/><rect x="440" y="334" width="6" height="16" fill="#fbf6f4"/><rect x="456" y="334" width="6" height="16" fill="#fbf6f4"/><rect x="471" y="334" width="6" height="16" fill="#fbf6f4"/><rect x="486" y="334" width="6" height="16" fill="#fbf6f4"/><rect x="502" y="334" width="6" height="16" fill="#fbf6f4"/><rect x="518" y="334" width="6" height="16" fill="#fbf6f4"/><rect x="333" y="366" width="44" height="30" fill="#c5393b"/><path d="M336 474 V428 C336 396 374 396 374 428 V474 Z" fill="#c9d3e4" stroke="#c5393b" stroke-width="3"/><rect x="331" y="478" width="48" height="14" fill="#c5393b"/><rect x="400" y="366" width="44" height="30" fill="#c5393b"/><path d="M403 474 V428 C403 396 441 396 441 428 V474 Z" fill="#c9d3e4" stroke="#c5393b" stroke-width="3"/><rect x="398" y="478" width="48" height="14" fill="#c5393b"/><rect x="467" y="366" width="44" height="30" fill="#c5393b"/><path d="M470 474 V428 C470 396 508 396 508 428 V474 Z" fill="#c9d3e4" stroke="#c5393b" stroke-width="3"/><rect x="465" y="478" width="48" height="14" fill="#c5393b"/><rect x="336" y="520" width="36" height="50" fill="#c5393b"/><rect x="344" y="528" width="20" height="34" fill="#c9d3e4"/><rect x="468" y="520" width="36" height="50" fill="#c5393b"/><rect x="476" y="528" width="20" height="34" fill="#c9d3e4"/><path d="M388 520 L422 500 L456 520 Z" fill="#8ea2bd"/><rect x="400" y="515" width="44" height="72" fill="#8ea2bd"/><rect x="225" y="572" width="400" height="22" fill="#8ea2bd"/><rect x="375" y="590" width="95" height="10" fill="#7f94b2"/><path d="M-36 0 C-12 -16 12 -16 36 0 C12 16 -12 16 -36 0 Z" transform="translate(600 652) rotate(-69)" fill="#8fa4c0"/><path d="M-36 0 C-12 -16 12 -16 36 0 C12 16 -12 16 -36 0 Z" transform="translate(617 679) rotate(7)" fill="#8fa4c0"/><path d="M-36 0 C-12 -16 12 -16 36 0 C12 16 -12 16 -36 0 Z" transform="translate(639 620) rotate(-78)" fill="#8fa4c0"/><path d="M-36 0 C-12 -16 12 -16 36 0 C12 16 -12 16 -36 0 Z" transform="translate(660 644) rotate(-2)" fill="#8fa4c0"/><path d="M-36 0 C-12 -16 12 -16 36 0 C12 16 -12 16 -36 0 Z" transform="translate(672 582) rotate(-88)" fill="#8fa4c0"/><path d="M-36 0 C-12 -16 12 -16 36 0 C12 16 -12 16 -36 0 Z" transform="translate(696 603) rotate(-12)" fill="#8fa4c0"/><path d="M-36 0 C-12 -16 12 -16 36 0 C12 16 -12 16 -36 0 Z" transform="translate(698 539) rotate(-97)" fill="#8fa4c0"/><path d="M-36 0 C-12 -16 12 -16 36 0 C12 16 -12 16 -36 0 Z" transform="translate(726 555) rotate(-21)" fill="#8fa4c0"/><path d="M-36 0 C-12 -16 12 -16 36 0 C12 16 -12 16 -36 0 Z" transform="translate(717 493) rotate(-107)" fill="#8fa4c0"/><path d="M-36 0 C-12 -16 12 -16 36 0 C12 16 -12 16 -36 0 Z" transform="translate(747 504) rotate(-31)" fill="#8fa4c0"/><path d="M-36 0 C-12 -16 12 -16 36 0 C12 16 -12 16 -36 0 Z" transform="translate(729 444) rotate(-116)" fill="#8fa4c0"/><path d="M-36 0 C-12 -16 12 -16 36 0 C12 16 -12 16 -36 0 Z" transform="translate(760 450) rotate(-40)" fill="#8fa4c0"/><path d="M-36 0 C-12 -16 12 -16 36 0 C12 16 -12 16 -36 0 Z" transform="translate(732 393) rotate(-125)" fill="#8fa4c0"/><path d="M-36 0 C-12 -16 12 -16 36 0 C12 16 -12 16 -36 0 Z" transform="translate(764 395) rotate(-49)" fill="#8fa4c0"/><path d="M-36 0 C-12 -16 12 -16 36 0 C12 16 -12 16 -36 0 Z" transform="translate(726 343) rotate(-135)" fill="#8fa4c0"/><path d="M-36 0 C-12 -16 12 -16 36 0 C12 16 -12 16 -36 0 Z" transform="translate(758 340) rotate(-59)" fill="#8fa4c0"/><path d="M-36 0 C-12 -16 12 -16 36 0 C12 16 -12 16 -36 0 Z" transform="translate(713 295) rotate(-144)" fill="#8fa4c0"/><path d="M-36 0 C-12 -16 12 -16 36 0 C12 16 -12 16 -36 0 Z" transform="translate(744 286) rotate(-68)" fill="#8fa4c0"/><path d="M-36 0 C-12 -16 12 -16 36 0 C12 16 -12 16 -36 0 Z" transform="translate(692 249) rotate(-154)" fill="#8fa4c0"/><path d="M-36 0 C-12 -16 12 -16 36 0 C12 16 -12 16 -36 0 Z" transform="translate(721 235) rotate(-78)" fill="#8fa4c0"/><path d="M-36 0 C-12 -16 12 -16 36 0 C12 16 -12 16 -36 0 Z" transform="translate(664 208) rotate(-163)" fill="#8fa4c0"/><path d="M-36 0 C-12 -16 12 -16 36 0 C12 16 -12 16 -36 0 Z" transform="translate(690 189) rotate(-87)" fill="#8fa4c0"/><path d="M-36 0 C-12 -16 12 -16 36 0 C12 16 -12 16 -36 0 Z" transform="translate(629 171) rotate(-172)" fill="#8fa4c0"/><path d="M-36 0 C-12 -16 12 -16 36 0 C12 16 -12 16 -36 0 Z" transform="translate(652 149) rotate(-96)" fill="#8fa4c0"/><path d="M-36 0 C-12 -16 12 -16 36 0 C12 16 -12 16 -36 0 Z" transform="translate(589 141) rotate(-182)" fill="#8fa4c0"/><path d="M-36 0 C-12 -16 12 -16 36 0 C12 16 -12 16 -36 0 Z" transform="translate(608 115) rotate(-106)" fill="#8fa4c0"/><path d="M-30 0 C-10 -12 10 -12 30 0 C10 12 -10 12 -30 0 Z" transform="translate(570 113) rotate(-153)" fill="#8fa4c0"/><path d="M-36 0 C-12 -16 12 -16 36 0 C12 16 -12 16 -36 0 Z" transform="translate(233 679) rotate(-187)" fill="#8fa4c0"/><path d="M-36 0 C-12 -16 12 -16 36 0 C12 16 -12 16 -36 0 Z" transform="translate(250 652) rotate(-111)" fill="#8fa4c0"/><path d="M-36 0 C-12 -16 12 -16 36 0 C12 16 -12 16 -36 0 Z" transform="translate(190 644) rotate(-178)" fill="#8fa4c0"/><path d="M-36 0 C-12 -16 12 -16 36 0 C12 16 -12 16 -36 0 Z" transform="translate(211 620) rotate(-102)" fill="#8fa4c0"/><path d="M-36 0 C-12 -16 12 -16 36 0 C12 16 -12 16 -36 0 Z" transform="translate(154 603) rotate(-168)" fill="#8fa4c0"/><path d="M-36 0 C-12 -16 12 -16 36 0 C12 16 -12 16 -36 0 Z" transform="translate(178 582) rotate(-92)" fill="#8fa4c0"/><path d="M-36 0 C-12 -16 12 -16 36 0 C12 16 -12 16 -36 0 Z" transform="translate(124 555) rotate(-159)" fill="#8fa4c0"/><path d="M-36 0 C-12 -16 12 -16 36 0 C12 16 -12 16 -36 0 Z" transform="translate(152 539) rotate(-83)" fill="#8fa4c0"/><path d="M-36 0 C-12 -16 12 -16 36 0 C12 16 -12 16 -36 0 Z" transform="translate(103 504) rotate(-149)" fill="#8fa4c0"/><path d="M-36 0 C-12 -16 12 -16 36 0 C12 16 -12 16 -36 0 Z" transform="translate(133 493) rotate(-73)" fill="#8fa4c0"/><path d="M-36 0 C-12 -16 12 -16 36 0 C12 16 -12 16 -36 0 Z" transform="translate(90 450) rotate(-140)" fill="#8fa4c0"/><path d="M-36 0 C-12 -16 12 -16 36 0 C12 16 -12 16 -36 0 Z" transform="translate(121 444) rotate(-64)" fill="#8fa4c0"/><path d="M-36 0 C-12 -16 12 -16 36 0 C12 16 -12 16 -36 0 Z" transform="translate(86 395) rotate(-131)" fill="#8fa4c0"/><path d="M-36 0 C-12 -16 12 -16 36 0 C12 16 -12 16 -36 0 Z" transform="translate(118 393) rotate(-55)" fill="#8fa4c0"/><path d="M-36 0 C-12 -16 12 -16 36 0 C12 16 -12 16 -36 0 Z" transform="translate(92 340) rotate(-121)" fill="#8fa4c0"/><path d="M-36 0 C-12 -16 12 -16 36 0 C12 16 -12 16 -36 0 Z" transform="translate(124 343) rotate(-45)" fill="#8fa4c0"/><path d="M-36 0 C-12 -16 12 -16 36 0 C12 16 -12 16 -36 0 Z" transform="translate(106 286) rotate(-112)" fill="#8fa4c0"/><path d="M-36 0 C-12 -16 12 -16 36 0 C12 16 -12 16 -36 0 Z" transform="translate(137 295) rotate(-36)" fill="#8fa4c0"/><path d="M-36 0 C-12 -16 12 -16 36 0 C12 16 -12 16 -36 0 Z" transform="translate(129 235) rotate(-102)" fill="#8fa4c0"/><path d="M-36 0 C-12 -16 12 -16 36 0 C12 16 -12 16 -36 0 Z" transform="translate(158 249) rotate(-26)" fill="#8fa4c0"/><path d="M-36 0 C-12 -16 12 -16 36 0 C12 16 -12 16 -36 0 Z" transform="translate(160 189) rotate(-93)" fill="#8fa4c0"/><path d="M-36 0 C-12 -16 12 -16 36 0 C12 16 -12 16 -36 0 Z" transform="translate(186 208) rotate(-17)" fill="#8fa4c0"/><path d="M-36 0 C-12 -16 12 -16 36 0 C12 16 -12 16 -36 0 Z" transform="translate(198 149) rotate(-84)" fill="#8fa4c0"/><path d="M-36 0 C-12 -16 12 -16 36 0 C12 16 -12 16 -36 0 Z" transform="translate(221 171) rotate(-8)" fill="#8fa4c0"/><path d="M-36 0 C-12 -16 12 -16 36 0 C12 16 -12 16 -36 0 Z" transform="translate(242 115) rotate(-74)" fill="#8fa4c0"/><path d="M-36 0 C-12 -16 12 -16 36 0 C12 16 -12 16 -36 0 Z" transform="translate(261 141) rotate(2)" fill="#8fa4c0"/><path d="M-30 0 C-10 -12 10 -12 30 0 C10 12 -10 12 -30 0 Z" transform="translate(280 113) rotate(-27)" fill="#8fa4c0"/><path d="M285 668 L330 640 C390 625 460 625 520 640 L565 668 L548 700 L560 740 L505 715 C450 700 400 700 345 715 L290 740 L302 700 Z" fill="#8fa4c0"/><path d="M318 655 C390 630 460 630 532 655 L520 705 C455 688 395 688 330 705 Z" fill="#a9b9d0"/><text x="425" y="683" text-anchor="middle" font-family="'Liberation Serif',serif" font-style="italic" font-size="46" fill="#5f7699">1874</text><path d="M320 122 L345 122 L345 205 L422 235 L500 205 L500 122 L527 122 L527 218 L422 248 L320 218 Z" fill="#eab543"/><path d="M343 100 L375 112 L422 235 L343 205 Z" fill="#1d2f63"/><path d="M500 100 L468 112 L422 235 L500 205 Z" fill="#1d2f63"/><path d="M375 68 L422 110 L470 68 L470 205 L422 240 L375 205 Z" fill="#3f84c6"/><path d="M422 110 L470 68 L470 205 L422 240 Z" fill="#5b9bd8"/><path d="M395 135 V195 H450 V135 C440 150 438 170 438 180 H430 C430 160 428 135 422 120 C416 135 415 160 415 180 H407 C407 170 405 150 395 135 Z M415 195 L422 212 L430 195 Z" fill="#d9b24c"/></svg>
<span style="position:absolute;left:435.60px;top:305.36px;font:normal 400 10.2px/1 'Liberation Serif', serif;color:#141414;white-space:pre;letter-spacing:0.000px;transform-origin:0 0;transform:scaleX(0.9512);">МІНІСТЕРСТВО ОСВІТИ І НАУКИ УКРАЇНИ</span>
<span style="position:absolute;left:385.60px;top:318.36px;font:normal 400 10.2px/1 'Liberation Serif', serif;color:#141414;white-space:pre;letter-spacing:0.000px;transform-origin:0 0;transform:scaleX(0.9528);">ГЛУХІВСЬКИЙ НАЦІОНАЛЬНИЙ ПЕДАГОГІЧНИЙ УНІВЕРСИТЕТ</span>
<span style="position:absolute;left:456.60px;top:329.56px;font:normal 400 10.2px/1 'Liberation Serif', serif;color:#141414;white-space:pre;letter-spacing:0.000px;transform-origin:0 0;transform:scaleX(0.9519);">ІМЕНІ ОЛЕКСАНДРА ДОВЖЕНКА</span>
<span style="position:absolute;left:408.10px;top:354.49px;font:normal 700 11.6px/1 'Liberation Serif', serif;color:#141414;white-space:pre;letter-spacing:0.000px;transform-origin:0 0;transform:scaleX(1.0123);text-shadow:0.6px 0.6px 0.8px rgba(0,0,0,0.35);">АВРАМЕНКО ЄВГЕНІЙ ВОЛОДИМИРОВИЧ</span>
<span style="position:absolute;left:321.50px;top:381.52px;font:normal 700 11.8px/1 'Liberation Serif', serif;color:#141414;white-space:pre;letter-spacing:0.000px;transform-origin:0 0;transform:scaleX(0.9902);text-shadow:0.6px 0.6px 0.8px rgba(0,0,0,0.35);">ЗВІТ ПРО ВИКОНАННЯ ІНДИВІДУАЛЬНОГО ПЛАНУ НАУКОВОЇ РОБОТИ</span>
<span style="position:absolute;left:450.30px;top:396.22px;font:normal 700 11.8px/1 'Liberation Serif', serif;color:#141414;white-space:pre;letter-spacing:0.000px;transform-origin:0 0;transform:scaleX(1.0078);text-shadow:0.6px 0.6px 0.8px rgba(0,0,0,0.35);">ЗА І ПІВРІЧЧЯ 2025-2026 Н.Р.</span>
<span style="position:absolute;left:353.40px;top:425.21px;font:italic 400 13.6px/1 'Liberation Serif', serif;color:#141414;white-space:pre;letter-spacing:0.000px;transform-origin:0 0;transform:scaleX(1.0154);text-shadow:0 0 0.5px rgba(0,0,0,0.45);">Спеціальність:   015 Професійна освіта (за спеціалізаціями)</span>
<span style="position:absolute;left:328.70px;top:442.11px;font:italic 400 13.6px/1 'Liberation Serif', serif;color:#141414;white-space:pre;letter-spacing:0.000px;transform-origin:0 0;transform:scaleX(1.0157);text-shadow:0 0 0.5px rgba(0,0,0,0.45);">Освітньо-наукова програма:  Теорія і методика  професійної  освіти</span>
<span style="position:absolute;left:289.50px;top:458.31px;font:italic 400 13.6px/1 'Liberation Serif', serif;color:#141414;white-space:pre;letter-spacing:0.000px;transform-origin:0 0;transform:scaleX(1.0193);text-shadow:0 0 0.5px rgba(0,0,0,0.45);">Кафедра  професійної освіти та технологій сільськогосподарського виробництва</span>
<span style="position:absolute;left:467.10px;top:491.06px;font:normal 700 10.8px/1 'Liberation Serif', serif;color:#141414;white-space:pre;letter-spacing:0.000px;transform-origin:0 0;transform:scaleX(1.0188);">НАУКОВИЙ КЕРІВНИК</span>
<span style="position:absolute;left:593.30px;top:491.06px;font:normal 400 10.8px/1 'Liberation Serif', serif;color:#141414;white-space:pre;letter-spacing:0.000px;">:</span>
<span style="position:absolute;left:321.10px;top:504.56px;font:normal 700 10.8px/1 'Liberation Serif', serif;color:#141414;white-space:pre;letter-spacing:0.000px;transform-origin:0 0;transform:scaleX(0.9631);">ОПАНАСЕНКО ВІТАЛІЙ ПЕТРОВИЧ, КАНДИДАТ ПЕДАГОГІЧНИХ НАУК, ДОЦЕНТ</span>
<span style="position:absolute;left:506.60px;top:530.80px;font:normal 700 8.6px/1 'Liberation Serif', serif;color:#141414;white-space:pre;letter-spacing:0.000px;transform-origin:0 0;transform:scaleX(1.0366);">Глухів - 2026</span>
<div style="position:absolute;left:52px;top:162px;width:127px;height:536px;overflow:hidden;">
<div style="position:absolute;left:21.5px;top:9.800000000000011px;width:87.600px;height:49.800px;border:2px solid #c0412b;background:#f7ecdc;"></div>
<div style="position:absolute;left:0;top:0;width:0;height:0;transform-origin:0 0;transform:translate(23.70px,12.60px) scale(0.13102) translate(-217px,-233px);"><div style="position:absolute;left:217px;top:233px;width:664px;height:374px;background:#fef6cb;"></div>
<div style="position:absolute;left:217px;top:233px;width:664px;height:58.5px;background:#a4b494;"></div>
<div style="position:absolute;left:217px;top:296px;width:508px;height:1px;background:#4a4a2a;"></div>
<div style="position:absolute;left:217px;top:298.3px;width:508px;height:1.9px;background:#050505;"></div>
<div style="position:absolute;left:217px;top:540.1px;width:664px;height:1.9px;background:#050505;"></div>
<div style="position:absolute;left:217px;top:544px;width:664px;height:1px;background:#2a2a14;"></div>
<div style="position:absolute;left:217px;top:548px;width:664px;height:59px;background:#a4b494;"></div>
<svg style="position:absolute;left:304px;top:233px" width="70" height="125" viewBox="0 0 70 125">
<defs><linearGradient id="rbg2" x1="0" x2="1" y1="0" y2="0"><stop offset="0" stop-color="#d9a468"/><stop offset="0.060" stop-color="#d09655"/><stop offset="0.940" stop-color="#d09655"/><stop offset="1" stop-color="#dba96f"/></linearGradient></defs>
<path d="M2.200 0 H67.500 V122.500 L35 115 L2.200 122.500 Z" fill="url(#rbg2)"/></svg>
<svg style="position:absolute;left:720px;top:228px" width="170" height="152" viewBox="0 0 859 768"><rect x="25" y="25" width="787" height="720" fill="#fdfdfe"/><circle cx="425" cy="400" r="300" fill="#e3e6f1"/><rect x="150" y="378" width="550" height="200" fill="#c5393b"/><rect x="150" y="372" width="550" height="14" fill="#fbf6f4"/><rect x="150" y="398" width="550" height="10" fill="#fbf6f4"/><rect x="150" y="490" width="550" height="12" fill="#fbf6f4"/><rect x="150" y="505" width="550" height="6" fill="#fbf6f4"/><rect x="164" y="410" width="56" height="80" fill="#fbf6f4"/><path d="M172 478 V440 C172 412 212 412 212 440 V478 Z" fill="#c9d3e4" stroke="#c5393b" stroke-width="4"/><rect x="234" y="410" width="56" height="80" fill="#fbf6f4"/><path d="M242 478 V440 C242 412 282 412 282 440 V478 Z" fill="#c9d3e4" stroke="#c5393b" stroke-width="4"/><rect x="550" y="410" width="56" height="80" fill="#fbf6f4"/><path d="M558 478 V440 C558 412 598 412 598 440 V478 Z" fill="#c9d3e4" stroke="#c5393b" stroke-width="4"/><rect x="620" y="410" width="56" height="80" fill="#fbf6f4"/><path d="M628 478 V440 C628 412 668 412 668 440 V478 Z" fill="#c9d3e4" stroke="#c5393b" stroke-width="4"/><rect x="245" y="530" width="34" height="42" fill="#fbf6f4"/><rect x="251" y="538" width="22" height="34" fill="#c9d3e4"/><rect x="565" y="530" width="34" height="42" fill="#fbf6f4"/><rect x="571" y="538" width="22" height="34" fill="#c9d3e4"/><rect x="180" y="530" width="24" height="42" fill="#fbf6f4"/><rect x="640" y="530" width="24" height="42" fill="#fbf6f4"/><rect x="305" y="330" width="230" height="245" fill="#fbf6f4"/><path d="M318 322 L420 280 L522 322 Z" fill="#c5393b"/><rect x="335" y="296" width="170" height="26" fill="#fbf6f4"/><rect x="345" y="300" width="40" height="20" fill="#c5393b"/><rect x="455" y="300" width="40" height="20" fill="#c5393b"/><rect x="398" y="298" width="44" height="22" fill="#c5393b"/><rect x="310" y="334" width="220" height="16" fill="#c5393b"/><rect x="316" y="334" width="6" height="16" fill="#fbf6f4"/><rect x="332" y="334" width="6" height="16" fill="#fbf6f4"/><rect x="347" y="334" width="6" height="16" fill="#fbf6f4"/><rect x="362" y="334" width="6" height="16" fill="#fbf6f4"/><rect x="378" y="334" width="6" height="16" fill="#fbf6f4"/><rect x="394" y="334" width="6" height="16" fill="#fbf6f4"/><rect x="409" y="334" width="6" height="16" fill="#fbf6f4"/><rect x="424" y="334" width="6" height="16" fill="#fbf6f4"/><rect x="440" y="334" width="6" height="16" fill="#fbf6f4"/><rect x="456" y="334" width="6" height="16" fill="#fbf6f4"/><rect x="471" y="334" width="6" height="16" fill="#fbf6f4"/><rect x="486" y="334" width="6" height="16" fill="#fbf6f4"/><rect x="502" y="334" width="6" height="16" fill="#fbf6f4"/><rect x="518" y="334" width="6" height="16" fill="#fbf6f4"/><rect x="333" y="366" width="44" height="30" fill="#c5393b"/><path d="M336 474 V428 C336 396 374 396 374 428 V474 Z" fill="#c9d3e4" stroke="#c5393b" stroke-width="3"/><rect x="331" y="478" width="48" height="14" fill="#c5393b"/><rect x="400" y="366" width="44" height="30" fill="#c5393b"/><path d="M403 474 V428 C403 396 441 396 441 428 V474 Z" fill="#c9d3e4" stroke="#c5393b" stroke-width="3"/><rect x="398" y="478" width="48" height="14" fill="#c5393b"/><rect x="467" y="366" width="44" height="30" fill="#c5393b"/><path d="M470 474 V428 C470 396 508 396 508 428 V474 Z" fill="#c9d3e4" stroke="#c5393b" stroke-width="3"/><rect x="465" y="478" width="48" height="14" fill="#c5393b"/><rect x="336" y="520" width="36" height="50" fill="#c5393b"/><rect x="344" y="528" width="20" height="34" fill="#c9d3e4"/><rect x="468" y="520" width="36" height="50" fill="#c5393b"/><rect x="476" y="528" width="20" height="34" fill="#c9d3e4"/><path d="M388 520 L422 500 L456 520 Z" fill="#8ea2bd"/><rect x="400" y="515" width="44" height="72" fill="#8ea2bd"/><rect x="225" y="572" width="400" height="22" fill="#8ea2bd"/><rect x="375" y="590" width="95" height="10" fill="#7f94b2"/><path d="M-36 0 C-12 -16 12 -16 36 0 C12 16 -12 16 -36 0 Z" transform="translate(600 652) rotate(-69)" fill="#8fa4c0"/><path d="M-36 0 C-12 -16 12 -16 36 0 C12 16 -12 16 -36 0 Z" transform="translate(617 679) rotate(7)" fill="#8fa4c0"/><path d="M-36 0 C-12 -16 12 -16 36 0 C12 16 -12 16 -36 0 Z" transform="translate(639 620) rotate(-78)" fill="#8fa4c0"/><path d="M-36 0 C-12 -16 12 -16 36 0 C12 16 -12 16 -36 0 Z" transform="translate(660 644) rotate(-2)" fill="#8fa4c0"/><path d="M-36 0 C-12 -16 12 -16 36 0 C12 16 -12 16 -36 0 Z" transform="translate(672 582) rotate(-88)" fill="#8fa4c0"/><path d="M-36 0 C-12 -16 12 -16 36 0 C12 16 -12 16 -36 0 Z" transform="translate(696 603) rotate(-12)" fill="#8fa4c0"/><path d="M-36 0 C-12 -16 12 -16 36 0 C12 16 -12 16 -36 0 Z" transform="translate(698 539) rotate(-97)" fill="#8fa4c0"/><path d="M-36 0 C-12 -16 12 -16 36 0 C12 16 -12 16 -36 0 Z" transform="translate(726 555) rotate(-21)" fill="#8fa4c0"/><path d="M-36 0 C-12 -16 12 -16 36 0 C12 16 -12 16 -36 0 Z" transform="translate(717 493) rotate(-107)" fill="#8fa4c0"/><path d="M-36 0 C-12 -16 12 -16 36 0 C12 16 -12 16 -36 0 Z" transform="translate(747 504) rotate(-31)" fill="#8fa4c0"/><path d="M-36 0 C-12 -16 12 -16 36 0 C12 16 -12 16 -36 0 Z" transform="translate(729 444) rotate(-116)" fill="#8fa4c0"/><path d="M-36 0 C-12 -16 12 -16 36 0 C12 16 -12 16 -36 0 Z" transform="translate(760 450) rotate(-40)" fill="#8fa4c0"/><path d="M-36 0 C-12 -16 12 -16 36 0 C12 16 -12 16 -36 0 Z" transform="translate(732 393) rotate(-125)" fill="#8fa4c0"/><path d="M-36 0 C-12 -16 12 -16 36 0 C12 16 -12 16 -36 0 Z" transform="translate(764 395) rotate(-49)" fill="#8fa4c0"/><path d="M-36 0 C-12 -16 12 -16 36 0 C12 16 -12 16 -36 0 Z" transform="translate(726 343) rotate(-135)" fill="#8fa4c0"/><path d="M-36 0 C-12 -16 12 -16 36 0 C12 16 -12 16 -36 0 Z" transform="translate(758 340) rotate(-59)" fill="#8fa4c0"/><path d="M-36 0 C-12 -16 12 -16 36 0 C12 16 -12 16 -36 0 Z" transform="translate(713 295) rotate(-144)" fill="#8fa4c0"/><path d="M-36 0 C-12 -16 12 -16 36 0 C12 16 -12 16 -36 0 Z" transform="translate(744 286) rotate(-68)" fill="#8fa4c0"/><path d="M-36 0 C-12 -16 12 -16 36 0 C12 16 -12 16 -36 0 Z" transform="translate(692 249) rotate(-154)" fill="#8fa4c0"/><path d="M-36 0 C-12 -16 12 -16 36 0 C12 16 -12 16 -36 0 Z" transform="translate(721 235) rotate(-78)" fill="#8fa4c0"/><path d="M-36 0 C-12 -16 12 -16 36 0 C12 16 -12 16 -36 0 Z" transform="translate(664 208) rotate(-163)" fill="#8fa4c0"/><path d="M-36 0 C-12 -16 12 -16 36 0 C12 16 -12 16 -36 0 Z" transform="translate(690 189) rotate(-87)" fill="#8fa4c0"/><path d="M-36 0 C-12 -16 12 -16 36 0 C12 16 -12 16 -36 0 Z" transform="translate(629 171) rotate(-172)" fill="#8fa4c0"/><path d="M-36 0 C-12 -16 12 -16 36 0 C12 16 -12 16 -36 0 Z" transform="translate(652 149) rotate(-96)" fill="#8fa4c0"/><path d="M-36 0 C-12 -16 12 -16 36 0 C12 16 -12 16 -36 0 Z" transform="translate(589 141) rotate(-182)" fill="#8fa4c0"/><path d="M-36 0 C-12 -16 12 -16 36 0 C12 16 -12 16 -36 0 Z" transform="translate(608 115) rotate(-106)" fill="#8fa4c0"/><path d="M-30 0 C-10 -12 10 -12 30 0 C10 12 -10 12 -30 0 Z" transform="translate(570 113) rotate(-153)" fill="#8fa4c0"/><path d="M-36 0 C-12 -16 12 -16 36 0 C12 16 -12 16 -36 0 Z" transform="translate(233 679) rotate(-187)" fill="#8fa4c0"/><path d="M-36 0 C-12 -16 12 -16 36 0 C12 16 -12 16 -36 0 Z" transform="translate(250 652) rotate(-111)" fill="#8fa4c0"/><path d="M-36 0 C-12 -16 12 -16 36 0 C12 16 -12 16 -36 0 Z" transform="translate(190 644) rotate(-178)" fill="#8fa4c0"/><path d="M-36 0 C-12 -16 12 -16 36 0 C12 16 -12 16 -36 0 Z" transform="translate(211 620) rotate(-102)" fill="#8fa4c0"/><path d="M-36 0 C-12 -16 12 -16 36 0 C12 16 -12 16 -36 0 Z" transform="translate(154 603) rotate(-168)" fill="#8fa4c0"/><path d="M-36 0 C-12 -16 12 -16 36 0 C12 16 -12 16 -36 0 Z" transform="translate(178 582) rotate(-92)" fill="#8fa4c0"/><path d="M-36 0 C-12 -16 12 -16 36 0 C12 16 -12 16 -36 0 Z" transform="translate(124 555) rotate(-159)" fill="#8fa4c0"/><path d="M-36 0 C-12 -16 12 -16 36 0 C12 16 -12 16 -36 0 Z" transform="translate(152 539) rotate(-83)" fill="#8fa4c0"/><path d="M-36 0 C-12 -16 12 -16 36 0 C12 16 -12 16 -36 0 Z" transform="translate(103 504) rotate(-149)" fill="#8fa4c0"/><path d="M-36 0 C-12 -16 12 -16 36 0 C12 16 -12 16 -36 0 Z" transform="translate(133 493) rotate(-73)" fill="#8fa4c0"/><path d="M-36 0 C-12 -16 12 -16 36 0 C12 16 -12 16 -36 0 Z" transform="translate(90 450) rotate(-140)" fill="#8fa4c0"/><path d="M-36 0 C-12 -16 12 -16 36 0 C12 16 -12 16 -36 0 Z" transform="translate(121 444) rotate(-64)" fill="#8fa4c0"/><path d="M-36 0 C-12 -16 12 -16 36 0 C12 16 -12 16 -36 0 Z" transform="translate(86 395) rotate(-131)" fill="#8fa4c0"/><path d="M-36 0 C-12 -16 12 -16 36 0 C12 16 -12 16 -36 0 Z" transform="translate(118 393) rotate(-55)" fill="#8fa4c0"/><path d="M-36 0 C-12 -16 12 -16 36 0 C12 16 -12 16 -36 0 Z" transform="translate(92 340) rotate(-121)" fill="#8fa4c0"/><path d="M-36 0 C-12 -16 12 -16 36 0 C12 16 -12 16 -36 0 Z" transform="translate(124 343) rotate(-45)" fill="#8fa4c0"/><path d="M-36 0 C-12 -16 12 -16 36 0 C12 16 -12 16 -36 0 Z" transform="translate(106 286) rotate(-112)" fill="#8fa4c0"/><path d="M-36 0 C-12 -16 12 -16 36 0 C12 16 -12 16 -36 0 Z" transform="translate(137 295) rotate(-36)" fill="#8fa4c0"/><path d="M-36 0 C-12 -16 12 -16 36 0 C12 16 -12 16 -36 0 Z" transform="translate(129 235) rotate(-102)" fill="#8fa4c0"/><path d="M-36 0 C-12 -16 12 -16 36 0 C12 16 -12 16 -36 0 Z" transform="translate(158 249) rotate(-26)" fill="#8fa4c0"/><path d="M-36 0 C-12 -16 12 -16 36 0 C12 16 -12 16 -36 0 Z" transform="translate(160 189) rotate(-93)" fill="#8fa4c0"/><path d="M-36 0 C-12 -16 12 -16 36 0 C12 16 -12 16 -36 0 Z" transform="translate(186 208) rotate(-17)" fill="#8fa4c0"/><path d="M-36 0 C-12 -16 12 -16 36 0 C12 16 -12 16 -36 0 Z" transform="translate(198 149) rotate(-84)" fill="#8fa4c0"/><path d="M-36 0 C-12 -16 12 -16 36 0 C12 16 -12 16 -36 0 Z" transform="translate(221 171) rotate(-8)" fill="#8fa4c0"/><path d="M-36 0 C-12 -16 12 -16 36 0 C12 16 -12 16 -36 0 Z" transform="translate(242 115) rotate(-74)" fill="#8fa4c0"/><path d="M-36 0 C-12 -16 12 -16 36 0 C12 16 -12 16 -36 0 Z" transform="translate(261 141) rotate(2)" fill="#8fa4c0"/><path d="M-30 0 C-10 -12 10 -12 30 0 C10 12 -10 12 -30 0 Z" transform="translate(280 113) rotate(-27)" fill="#8fa4c0"/><path d="M285 668 L330 640 C390 625 460 625 520 640 L565 668 L548 700 L560 740 L505 715 C450 700 400 700 345 715 L290 740 L302 700 Z" fill="#8fa4c0"/><path d="M318 655 C390 630 460 630 532 655 L520 705 C455 688 395 688 330 705 Z" fill="#a9b9d0"/><text x="425" y="683" text-anchor="middle" font-family="'Liberation Serif',serif" font-style="italic" font-size="46" fill="#5f7699">1874</text><path d="M320 122 L345 122 L345 205 L422 235 L500 205 L500 122 L527 122 L527 218 L422 248 L320 218 Z" fill="#eab543"/><path d="M343 100 L375 112 L422 235 L343 205 Z" fill="#1d2f63"/><path d="M500 100 L468 112 L422 235 L500 205 Z" fill="#1d2f63"/><path d="M375 68 L422 110 L470 68 L470 205 L422 240 L375 205 Z" fill="#3f84c6"/><path d="M422 110 L470 68 L470 205 L422 240 Z" fill="#5b9bd8"/><path d="M395 135 V195 H450 V135 C440 150 438 170 438 180 H430 C430 160 428 135 422 120 C416 135 415 160 415 180 H407 C407 170 405 150 395 135 Z M415 195 L422 212 L430 195 Z" fill="#d9b24c"/></svg>
<span style="position:absolute;left:435.60px;top:305.36px;font:normal 400 10.2px/1 'Liberation Serif', serif;color:#141414;white-space:pre;letter-spacing:0.000px;transform-origin:0 0;transform:scaleX(0.9512);">МІНІСТЕРСТВО ОСВІТИ І НАУКИ УКРАЇНИ</span>
<span style="position:absolute;left:385.60px;top:318.36px;font:normal 400 10.2px/1 'Liberation Serif', serif;color:#141414;white-space:pre;letter-spacing:0.000px;transform-origin:0 0;transform:scaleX(0.9528);">ГЛУХІВСЬКИЙ НАЦІОНАЛЬНИЙ ПЕДАГОГІЧНИЙ УНІВЕРСИТЕТ</span>
<span style="position:absolute;left:456.60px;top:329.56px;font:normal 400 10.2px/1 'Liberation Serif', serif;color:#141414;white-space:pre;letter-spacing:0.000px;transform-origin:0 0;transform:scaleX(0.9519);">ІМЕНІ ОЛЕКСАНДРА ДОВЖЕНКА</span>
<span style="position:absolute;left:408.10px;top:354.49px;font:normal 700 11.6px/1 'Liberation Serif', serif;color:#141414;white-space:pre;letter-spacing:0.000px;transform-origin:0 0;transform:scaleX(1.0123);text-shadow:0.6px 0.6px 0.8px rgba(0,0,0,0.35);">АВРАМЕНКО ЄВГЕНІЙ ВОЛОДИМИРОВИЧ</span>
<span style="position:absolute;left:321.50px;top:381.52px;font:normal 700 11.8px/1 'Liberation Serif', serif;color:#141414;white-space:pre;letter-spacing:0.000px;transform-origin:0 0;transform:scaleX(0.9902);text-shadow:0.6px 0.6px 0.8px rgba(0,0,0,0.35);">ЗВІТ ПРО ВИКОНАННЯ ІНДИВІДУАЛЬНОГО ПЛАНУ НАУКОВОЇ РОБОТИ</span>
<span style="position:absolute;left:450.30px;top:396.22px;font:normal 700 11.8px/1 'Liberation Serif', serif;color:#141414;white-space:pre;letter-spacing:0.000px;transform-origin:0 0;transform:scaleX(1.0078);text-shadow:0.6px 0.6px 0.8px rgba(0,0,0,0.35);">ЗА І ПІВРІЧЧЯ 2025-2026 Н.Р.</span>
<span style="position:absolute;left:353.40px;top:425.21px;font:italic 400 13.6px/1 'Liberation Serif', serif;color:#141414;white-space:pre;letter-spacing:0.000px;transform-origin:0 0;transform:scaleX(1.0154);text-shadow:0 0 0.5px rgba(0,0,0,0.45);">Спеціальність:   015 Професійна освіта (за спеціалізаціями)</span>
<span style="position:absolute;left:328.70px;top:442.11px;font:italic 400 13.6px/1 'Liberation Serif', serif;color:#141414;white-space:pre;letter-spacing:0.000px;transform-origin:0 0;transform:scaleX(1.0157);text-shadow:0 0 0.5px rgba(0,0,0,0.45);">Освітньо-наукова програма:  Теорія і методика  професійної  освіти</span>
<span style="position:absolute;left:289.50px;top:458.31px;font:italic 400 13.6px/1 'Liberation Serif', serif;color:#141414;white-space:pre;letter-spacing:0.000px;transform-origin:0 0;transform:scaleX(1.0193);text-shadow:0 0 0.5px rgba(0,0,0,0.45);">Кафедра  професійної освіти та технологій сільськогосподарського виробництва</span>
<span style="position:absolute;left:467.10px;top:491.06px;font:normal 700 10.8px/1 'Liberation Serif', serif;color:#141414;white-space:pre;letter-spacing:0.000px;transform-origin:0 0;transform:scaleX(1.0188);">НАУКОВИЙ КЕРІВНИК</span>
<span style="position:absolute;left:593.30px;top:491.06px;font:normal 400 10.8px/1 'Liberation Serif', serif;color:#141414;white-space:pre;letter-spacing:0.000px;">:</span>
<span style="position:absolute;left:321.10px;top:504.56px;font:normal 700 10.8px/1 'Liberation Serif', serif;color:#141414;white-space:pre;letter-spacing:0.000px;transform-origin:0 0;transform:scaleX(0.9631);">ОПАНАСЕНКО ВІТАЛІЙ ПЕТРОВИЧ, КАНДИДАТ ПЕДАГОГІЧНИХ НАУК, ДОЦЕНТ</span>
<span style="position:absolute;left:506.60px;top:530.80px;font:normal 700 8.6px/1 'Liberation Serif', serif;color:#141414;white-space:pre;letter-spacing:0.000px;transform-origin:0 0;transform:scaleX(1.0366);">Глухів - 2026</span></div>
<div style="position:absolute;left:23.7px;top:20.6px;width:11.600px;height:1px;background:#2a2a20;"></div>
<div style="position:absolute;left:44.2px;top:20.6px;width:46px;height:1px;background:#2a2a20;"></div>
<div style="position:absolute;left:23.7px;top:52.6px;width:87px;height:1.200px;background:#15150f;"></div>
<span style="position:absolute;left:4px;top:9.1px;width:13px;text-align:center;font:10.500px/12px 'Liberation Sans',sans-serif;color:#c0412b;">1</span>
<svg style="position:absolute;left:6.299999999999997px;top:22.3px" width="8" height="8" viewBox="0 0 10 10"><path d="M5 0.500 L6.300 3.800 L9.800 3.900 L7 6 L8 9.400 L5 7.400 L2 9.400 L3 6 L0.200 3.900 L3.700 3.800 Z" fill="#555"/></svg>
<span style="position:absolute;left:4px;top:72.3px;width:13px;text-align:center;font:10.500px/12px 'Liberation Sans',sans-serif;color:#505050;">2</span>
<svg style="position:absolute;left:6.299999999999997px;top:85.5px" width="8" height="8" viewBox="0 0 10 10"><path d="M5 0.500 L6.300 3.800 L9.800 3.900 L7 6 L8 9.400 L5 7.400 L2 9.400 L3 6 L0.200 3.900 L3.700 3.800 Z" fill="#555"/></svg>
<svg style="position:absolute;left:23.400000000000006px;top:75.5px;overflow:hidden;background:#fef6cb;box-shadow:0 0 0 0.500px #d8d4c0;" width="87" height="49" viewBox="0 0 87 49"><text x="46" y="9.3" font-family="'Liberation Serif',serif" font-size="3.3" font-weight="400" font-style="normal" text-anchor="middle" fill="#2a2a2a" opacity="0.8" textLength="30" lengthAdjust="spacingAndGlyphs">Тема дисертації:</text><text x="45.5" y="19.4" font-family="'Liberation Serif',serif" font-size="3.3" font-weight="400" font-style="normal" text-anchor="middle" fill="#2a2a2a" opacity="0.75" textLength="64" lengthAdjust="spacingAndGlyphs">«Організаційно-педагогічні умови</text><text x="45.5" y="24.1" font-family="'Liberation Serif',serif" font-size="3.3" font-weight="400" font-style="normal" text-anchor="middle" fill="#2a2a2a" opacity="0.75" textLength="62" lengthAdjust="spacingAndGlyphs">розвитку цифрової компетентності</text><text x="45.5" y="28.9" font-family="'Liberation Serif',serif" font-size="3.3" font-weight="400" font-style="normal" text-anchor="middle" fill="#2a2a2a" opacity="0.75" textLength="45" lengthAdjust="spacingAndGlyphs">майбутніх агроінженерів</text><text x="45.5" y="33.6" font-family="'Liberation Serif',serif" font-size="3.3" font-weight="400" font-style="normal" text-anchor="middle" fill="#2a2a2a" opacity="0.75" textLength="40" lengthAdjust="spacingAndGlyphs">у фаховій підготовці».</text></svg>
<span style="position:absolute;left:4px;top:135.5px;width:13px;text-align:center;font:10.500px/12px 'Liberation Sans',sans-serif;color:#505050;">3</span>
<svg style="position:absolute;left:6.299999999999997px;top:148.7px" width="8" height="8" viewBox="0 0 10 10"><path d="M5 0.500 L6.300 3.800 L9.800 3.900 L7 6 L8 9.400 L5 7.400 L2 9.400 L3 6 L0.200 3.900 L3.700 3.800 Z" fill="#555"/></svg>
<svg style="position:absolute;left:23.400000000000006px;top:138.7px;overflow:hidden;background:#fef6cb;box-shadow:0 0 0 0.500px #d8d4c0;" width="87" height="49" viewBox="0 0 87 49"><text x="43.6" y="8.3" font-family="'Liberation Serif',serif" font-size="4" font-weight="400" font-style="normal" text-anchor="middle" fill="#2a2a2a" opacity="0.85" textLength="32" lengthAdjust="spacingAndGlyphs">Наукова складова</text><text x="11.4" y="13.4" font-family="'Liberation Serif',serif" font-size="2.2" font-weight="700" font-style="normal" text-anchor="start" fill="#2a2a2a" opacity="1" textLength="7" lengthAdjust="spacingAndGlyphs">Статті:</text><text x="11.4" y="17.3" font-family="'Liberation Serif',serif" font-size="2.2" font-weight="700" font-style="normal" text-anchor="start" fill="#2a2a2a" opacity="1" textLength="20" lengthAdjust="spacingAndGlyphs">Заплановано публікацій</text><rect x="18.5" y="19.0" width="53.5" height="2.5" fill="#a4b494"/><rect x="18.5" y="21.5" width="53.5" height="2.8" fill="#dfe3cc"/><rect x="31.5" y="22.4" width="1.2" height="1" fill="#333"/><rect x="58.5" y="22.4" width="1.2" height="1" fill="#333"/><text x="11.4" y="28.1" font-family="'Liberation Serif',serif" font-size="2.2" font-weight="700" font-style="normal" text-anchor="start" fill="#2a2a2a" opacity="1" textLength="21" lengthAdjust="spacingAndGlyphs">Опубліковано публікацій</text><rect x="18.5" y="29.8" width="53.5" height="2.5" fill="#a4b494"/><rect x="18.5" y="32.3" width="53.5" height="2.8" fill="#dfe3cc"/><rect x="31.5" y="33.2" width="1.2" height="1" fill="#333"/><rect x="58.5" y="33.2" width="1.2" height="1" fill="#333"/><text x="11.4" y="38.8" font-family="'Liberation Serif',serif" font-size="2.2" font-weight="700" font-style="normal" text-anchor="start" fill="#2a2a2a" opacity="1" textLength="11" lengthAdjust="spacingAndGlyphs">Залишилось</text><rect x="18.5" y="40.5" width="53.5" height="2.5" fill="#a4b494"/><rect x="18.5" y="43.0" width="53.5" height="2.8" fill="#dfe3cc"/><rect x="31.5" y="43.9" width="1.2" height="1" fill="#333"/><rect x="58.5" y="43.9" width="1.2" height="1" fill="#333"/></svg>
<span style="position:absolute;left:4px;top:198.7px;width:13px;text-align:center;font:10.500px/12px 'Liberation Sans',sans-serif;color:#505050;">4</span>
<svg style="position:absolute;left:6.299999999999997px;top:211.9px" width="8" height="8" viewBox="0 0 10 10"><path d="M5 0.500 L6.300 3.800 L9.800 3.900 L7 6 L8 9.400 L5 7.400 L2 9.400 L3 6 L0.200 3.900 L3.700 3.800 Z" fill="#555"/></svg>
<svg style="position:absolute;left:23.400000000000006px;top:201.9px;overflow:hidden;background:#fef6cb;box-shadow:0 0 0 0.500px #d8d4c0;" width="87" height="49" viewBox="0 0 87 49"><text x="41.8" y="8.8" font-family="'Liberation Serif',serif" font-size="3.6" font-weight="700" font-style="normal" text-anchor="middle" fill="#2a2a2a" opacity="0.9" textLength="29" lengthAdjust="spacingAndGlyphs">Виконання таблиці</text><text x="16" y="13.6" font-family="'Liberation Serif',serif" font-size="2.2" font-weight="700" font-style="normal" text-anchor="start" fill="#2a2a2a" opacity="1" textLength="22" lengthAdjust="spacingAndGlyphs">Заплановано конференцій</text><rect x="14" y="12.1" width="0.9" height="0.9" fill="#222"/><rect x="17.1" y="15.4" width="54.9" height="2.5" fill="#a4b494"/><rect x="17.1" y="17.9" width="54.9" height="2.8" fill="#dfe3cc"/><rect x="30.1" y="18.8" width="1.2" height="1" fill="#333"/><rect x="57.1" y="18.8" width="1.2" height="1" fill="#333"/><text x="16" y="25.2" font-family="'Liberation Serif',serif" font-size="2.2" font-weight="700" font-style="normal" text-anchor="start" fill="#2a2a2a" opacity="1" textLength="17" lengthAdjust="spacingAndGlyphs">Відвідано заходів</text><rect x="14" y="23.7" width="0.9" height="0.9" fill="#222"/><rect x="17.1" y="27.0" width="54.9" height="2.5" fill="#a4b494"/><rect x="17.1" y="29.5" width="54.9" height="2.8" fill="#dfe3cc"/><rect x="30.1" y="30.4" width="1.2" height="1" fill="#333"/><rect x="57.1" y="30.4" width="1.2" height="1" fill="#333"/><text x="16" y="37.5" font-family="'Liberation Serif',serif" font-size="2.2" font-weight="700" font-style="normal" text-anchor="start" fill="#2a2a2a" opacity="1" textLength="11" lengthAdjust="spacingAndGlyphs">Залишилось</text><rect x="14" y="36.0" width="0.9" height="0.9" fill="#222"/><rect x="17.1" y="39.3" width="54.9" height="2.5" fill="#a4b494"/><rect x="17.1" y="41.8" width="54.9" height="2.8" fill="#dfe3cc"/><rect x="30.1" y="42.699999999999996" width="1.2" height="1" fill="#333"/><rect x="57.1" y="42.699999999999996" width="1.2" height="1" fill="#333"/></svg>
<span style="position:absolute;left:4px;top:261.9px;width:13px;text-align:center;font:10.500px/12px 'Liberation Sans',sans-serif;color:#505050;">5</span>
<svg style="position:absolute;left:6.299999999999997px;top:275.1px" width="8" height="8" viewBox="0 0 10 10"><path d="M5 0.500 L6.300 3.800 L9.800 3.900 L7 6 L8 9.400 L5 7.400 L2 9.400 L3 6 L0.200 3.900 L3.700 3.800 Z" fill="#555"/></svg>
<svg style="position:absolute;left:23.400000000000006px;top:265.1px;overflow:hidden;background:#fef6cb;box-shadow:0 0 0 0.500px #d8d4c0;" width="87" height="49" viewBox="0 0 87 49"><text x="44" y="8.2" font-family="'Liberation Serif',serif" font-size="2.2" font-weight="700" font-style="normal" text-anchor="middle" fill="#2a2a2a" opacity="0.8" textLength="40" lengthAdjust="spacingAndGlyphs">Апробація результатів дослідження</text><rect x="8.5" y="9.1" width="71.2" height="1.5" fill="#111"/><text x="44" y="13.3" font-family="'Liberation Serif',serif" font-size="2.2" font-weight="400" font-style="normal" text-anchor="middle" fill="#2a2a2a" opacity="0.7" textLength="27" lengthAdjust="spacingAndGlyphs">Участь у конференціях</text><text x="8" y="16.9" font-family="'Liberation Serif',serif" font-size="2" font-weight="400" font-style="normal" text-anchor="start" fill="#2a2a2a" opacity="0.8" textLength="72" lengthAdjust="spacingAndGlyphs">Авраменко Є.В. Формування цифрової компетентності майбутніх агроінженерів у процесі</text><text x="11" y="19.349999999999998" font-family="'Liberation Serif',serif" font-size="2" font-weight="700" font-style="normal" text-anchor="start" fill="#2a2a2a" opacity="0.8" textLength="69" lengthAdjust="spacingAndGlyphs">професійної підготовки: матеріали міжнародної науково-практичної конференції,</text><text x="11" y="21.799999999999997" font-family="'Liberation Serif',serif" font-size="2" font-weight="400" font-style="normal" text-anchor="start" fill="#2a2a2a" opacity="0.8" textLength="40" lengthAdjust="spacingAndGlyphs">Глухів, листопад 2025 року. С. 112–115.</text><text x="8" y="26.8" font-family="'Liberation Serif',serif" font-size="2" font-weight="400" font-style="normal" text-anchor="start" fill="#2a2a2a" opacity="0.8" textLength="72" lengthAdjust="spacingAndGlyphs">Авраменко Є.В. Цифрові технології у фаховій підготовці здобувачів освіти аграрного</text><text x="11" y="29.25" font-family="'Liberation Serif',serif" font-size="2" font-weight="700" font-style="normal" text-anchor="start" fill="#2a2a2a" opacity="0.8" textLength="69" lengthAdjust="spacingAndGlyphs">профілю. Теорія і методика професійної освіти: збірник тез доповідей учасників</text><text x="11" y="31.700000000000003" font-family="'Liberation Serif',serif" font-size="2" font-weight="400" font-style="normal" text-anchor="start" fill="#2a2a2a" opacity="0.8" textLength="69" lengthAdjust="spacingAndGlyphs">всеукраїнської науково-практичної конференції. Глухів, 2025.</text><text x="11" y="34.15" font-family="'Liberation Serif',serif" font-size="2" font-weight="400" font-style="normal" text-anchor="start" fill="#2a2a2a" opacity="0.8" textLength="12" lengthAdjust="spacingAndGlyphs">С. 48–51.</text></svg>
<span style="position:absolute;left:4px;top:325.1px;width:13px;text-align:center;font:10.500px/12px 'Liberation Sans',sans-serif;color:#505050;">6</span>
<svg style="position:absolute;left:6.299999999999997px;top:338.3px" width="8" height="8" viewBox="0 0 10 10"><path d="M5 0.500 L6.300 3.800 L9.800 3.900 L7 6 L8 9.400 L5 7.400 L2 9.400 L3 6 L0.200 3.900 L3.700 3.800 Z" fill="#555"/></svg>
<svg style="position:absolute;left:23.400000000000006px;top:328.3px;overflow:hidden;background:#fef6cb;box-shadow:0 0 0 0.500px #d8d4c0;" width="87" height="49" viewBox="0 0 87 49"><text x="44" y="5" font-family="'Liberation Serif',serif" font-size="2.3" font-weight="400" font-style="normal" text-anchor="middle" fill="#2a2a2a" opacity="0.7" textLength="66" lengthAdjust="spacingAndGlyphs">УЧАСТЬ У НАУКОВИХ, СТАЖУВАННЯХ, СЕМІНАРАХ І</text><text x="44" y="7.6" font-family="'Liberation Serif',serif" font-size="2.3" font-weight="400" font-style="normal" text-anchor="middle" fill="#2a2a2a" opacity="0.7" textLength="14" lengthAdjust="spacingAndGlyphs">ТРЕНІНГАХ</text><rect x="8.5" y="9.5" width="71.2" height="1.2" fill="#111"/><rect x="2.3" y="10.7" width="29.7" height="20.3" fill="#f4f3f0"/><rect x="2.8" y="11.5" width="3.8" height="18.5" fill="#55504c"/><rect x="8" y="12.5" width="22" height="1" fill="#9aa"/><circle cx="19" cy="18" r="3.200" fill="none" stroke="#7a8a9a" stroke-width="0.700"/><rect x="9" y="23" width="20" height="2.2" fill="#3a3a3a"/><rect x="10" y="27" width="18" height="0.6" fill="#99a"/><rect x="34" y="12.7" width="21" height="29.7" fill="#fbfbfd"/><rect x="37" y="14.5" width="15" height="3.5" fill="#8aa0d0"/><ellipse cx="44.500" cy="26.500" rx="4.200" ry="3.400" fill="#8a4a3a"/><rect x="38" y="33" width="13" height="0.6" fill="#99a"/><rect x="39" y="36" width="11" height="0.6" fill="#99a"/><rect x="40" y="39" width="9" height="0.6" fill="#99a"/><rect x="51.7" y="27.3" width="33.9" height="20.5" fill="#fdfafa" stroke="#c88aa0" stroke-width="0.800"/><rect x="60" y="30" width="17" height="1.2" fill="#d07a90"/><rect x="58" y="33" width="21" height="0.6" fill="#a9a"/><rect x="58" y="35.5" width="21" height="0.6" fill="#a9a"/><rect x="58" y="38" width="21" height="0.6" fill="#a9a"/><circle cx="56" cy="32" r="2.200" fill="#4a7ab0"/><circle cx="82" cy="32" r="2.200" fill="#4a9a6a"/><circle cx="69" cy="43" r="2.600" fill="none" stroke="#6a8ac0" stroke-width="0.600"/></svg>
<span style="position:absolute;left:4px;top:388.3px;width:13px;text-align:center;font:10.500px/12px 'Liberation Sans',sans-serif;color:#505050;">7</span>
<svg style="position:absolute;left:6.299999999999997px;top:401.5px" width="8" height="8" viewBox="0 0 10 10"><path d="M5 0.500 L6.300 3.800 L9.800 3.900 L7 6 L8 9.400 L5 7.400 L2 9.400 L3 6 L0.200 3.900 L3.700 3.800 Z" fill="#555"/></svg>
<svg style="position:absolute;left:23.400000000000006px;top:391.5px;overflow:hidden;background:#fef6cb;box-shadow:0 0 0 0.500px #d8d4c0;" width="87" height="49" viewBox="0 0 87 49"><text x="38.8" y="5" font-family="'Liberation Serif',serif" font-size="2.4" font-weight="700" font-style="normal" text-anchor="middle" fill="#2a2a2a" opacity="1" textLength="12" lengthAdjust="spacingAndGlyphs">Висновки</text><text x="3.4" y="7.4" font-family="'Liberation Serif',serif" font-size="1.9" font-weight="700" font-style="normal" text-anchor="start" fill="#111" opacity="0.9" textLength="75" lengthAdjust="spacingAndGlyphs">Мета і завдання першого півріччя третього року навчання виконані у повному обсязі.</text><text x="3.4" y="9.48" font-family="'Liberation Serif',serif" font-size="1.9" font-weight="400" font-style="normal" text-anchor="start" fill="#777" opacity="0.7" textLength="81" lengthAdjust="spacingAndGlyphs">Опубліковано наукові статті у фахових виданнях України категорії Б та матеріали конференцій</text><text x="3.4" y="11.56" font-family="'Liberation Serif',serif" font-size="1.9" font-weight="400" font-style="normal" text-anchor="start" fill="#777" opacity="0.7" textLength="36" lengthAdjust="spacingAndGlyphs">за темою дисертаційного дослідження.</text><text x="3.4" y="13.64" font-family="'Liberation Serif',serif" font-size="1.9" font-weight="400" font-style="normal" text-anchor="start" fill="#111" opacity="0.7" textLength="56" lengthAdjust="spacingAndGlyphs">Взято участь у міжнародних науково-практичних конференціях.</text><text x="3.4" y="15.72" font-family="'Liberation Serif',serif" font-size="1.9" font-weight="700" font-style="normal" text-anchor="start" fill="#111" opacity="0.9" textLength="81" lengthAdjust="spacingAndGlyphs">Проведено формувальний етап педагогічного експерименту щодо розвитку цифрової</text><text x="3.4" y="17.8" font-family="'Liberation Serif',serif" font-size="1.9" font-weight="700" font-style="normal" text-anchor="start" fill="#111" opacity="0.9" textLength="58" lengthAdjust="spacingAndGlyphs">компетентності майбутніх агроінженерів у фаховій підготовці.</text><text x="3.4" y="19.880000000000003" font-family="'Liberation Serif',serif" font-size="1.9" font-weight="400" font-style="normal" text-anchor="start" fill="#111" opacity="0.7" textLength="72" lengthAdjust="spacingAndGlyphs">Опрацьовано результати діагностування здобувачів освіти аграрного профілю.</text><text x="3.4" y="21.96" font-family="'Liberation Serif',serif" font-size="1.9" font-weight="400" font-style="normal" text-anchor="start" fill="#111" opacity="0.7" textLength="64" lengthAdjust="spacingAndGlyphs">Підготовлено третій розділ дисертації та подано науковому керівнику.</text><text x="3.4" y="24.04" font-family="'Liberation Serif',serif" font-size="1.9" font-weight="400" font-style="normal" text-anchor="start" fill="#111" opacity="0.7" textLength="78" lengthAdjust="spacingAndGlyphs">Узагальнено організаційно-педагогічні умови та модель розвитку компетентності.</text><text x="3.4" y="26.119999999999997" font-family="'Liberation Serif',serif" font-size="1.9" font-weight="400" font-style="normal" text-anchor="start" fill="#777" opacity="0.7" textLength="81" lengthAdjust="spacingAndGlyphs">Розроблено методичні рекомендації для викладачів закладів фахової передвищої освіти.</text><text x="3.4" y="28.199999999999996" font-family="'Liberation Serif',serif" font-size="1.9" font-weight="400" font-style="normal" text-anchor="start" fill="#111" opacity="0.7" textLength="60" lengthAdjust="spacingAndGlyphs">Завершено стажування за програмою підвищення кваліфікації.</text><text x="3.4" y="30.279999999999994" font-family="'Liberation Serif',serif" font-size="1.9" font-weight="400" font-style="normal" text-anchor="start" fill="#111" opacity="0.7" textLength="81" lengthAdjust="spacingAndGlyphs">План наступного півріччя: оформлення дисертації, апробація результатів, фахова експертиза.</text><text x="3.4" y="32.35999999999999" font-family="'Liberation Serif',serif" font-size="1.9" font-weight="700" font-style="normal" text-anchor="start" fill="#111" opacity="0.9" textLength="66" lengthAdjust="spacingAndGlyphs">Загальний стан виконання індивідуального плану відповідає графіку.</text><text x="3.4" y="34.43999999999999" font-family="'Liberation Serif',serif" font-size="1.9" font-weight="400" font-style="normal" text-anchor="start" fill="#111" opacity="0.7" textLength="32" lengthAdjust="spacingAndGlyphs">Підготовка тексту автореферату.</text><text x="3.4" y="36.51999999999999" font-family="'Liberation Serif',serif" font-size="1.9" font-weight="400" font-style="normal" text-anchor="start" fill="#777" opacity="0.7" textLength="81" lengthAdjust="spacingAndGlyphs">Публікація статті у виданні, що індексується у Scopus, для здобувачів ступеня доктора філософії</text><text x="3.4" y="38.59999999999999" font-family="'Liberation Serif',serif" font-size="1.9" font-weight="400" font-style="normal" text-anchor="start" fill="#777" opacity="0.7" textLength="36" lengthAdjust="spacingAndGlyphs">заплановано на наступний семестр.</text><text x="3.4" y="40.679999999999986" font-family="'Liberation Serif',serif" font-size="1.9" font-weight="700" font-style="normal" text-anchor="start" fill="#111" opacity="0.9" textLength="18" lengthAdjust="spacingAndGlyphs">Науковий керівник:</text><text x="3.4" y="42.759999999999984" font-family="'Liberation Serif',serif" font-size="1.9" font-weight="700" font-style="normal" text-anchor="start" fill="#111" opacity="0.9" textLength="24" lengthAdjust="spacingAndGlyphs">Опанасенко В. П.</text><text x="3.4" y="44.83999999999998" font-family="'Liberation Serif',serif" font-size="1.9" font-weight="700" font-style="normal" text-anchor="start" fill="#111" opacity="0.9" textLength="8" lengthAdjust="spacingAndGlyphs">Аспірант</text></svg>
<span style="position:absolute;left:4px;top:451.5px;width:13px;text-align:center;font:10.500px/12px 'Liberation Sans',sans-serif;color:#505050;">8</span>
<svg style="position:absolute;left:6.299999999999997px;top:464.7px" width="8" height="8" viewBox="0 0 10 10"><path d="M5 0.500 L6.300 3.800 L9.800 3.900 L7 6 L8 9.400 L5 7.400 L2 9.400 L3 6 L0.200 3.900 L3.700 3.800 Z" fill="#555"/></svg>
<svg style="position:absolute;left:23.400000000000006px;top:454.7px;overflow:hidden;background:#fef6cb;box-shadow:0 0 0 0.500px #d8d4c0;" width="87" height="49" viewBox="0 0 87 49"><text x="43" y="6.3" font-family="'Liberation Serif',serif" font-size="2.6" font-weight="400" font-style="normal" text-anchor="middle" fill="#2a2a2a" opacity="0.75" textLength="20" lengthAdjust="spacingAndGlyphs">Бази дослідження</text><rect x="9.2" y="9.6" width="70.2" height="1.2" fill="#111"/><rect x="4.4" y="10.7" width="24" height="20.8" fill="#1f9a4a"/><circle cx="16.400" cy="21" r="8.300" fill="#f4f8f0"/><circle cx="16.400" cy="21" r="6.600" fill="none" stroke="#1f9a4a" stroke-width="1.300"/><ellipse cx="16.400" cy="20.500" rx="2.300" ry="3.600" fill="#d8a838"/><ellipse cx="45.500" cy="18.400" rx="10.500" ry="7.500" fill="#b98f45"/><ellipse cx="45.500" cy="18.400" rx="8" ry="5.400" fill="#3a78c0"/><text x="45.5" y="20.2" font-family="'Liberation Serif',serif" font-size="4.4" font-weight="700" font-style="normal" text-anchor="middle" fill="#f0d860" opacity="1" textLength="12" lengthAdjust="spacingAndGlyphs">КДК</text><rect x="66.3" y="10.7" width="17.3" height="22.9" fill="#fdfdfb"/><circle cx="75" cy="13.800" r="1.400" fill="#2e9e3e"/><path d="M70 14.500 C71 20 73 19 75 21.500 C77 19 79 20 80 14.500 L78 14 C77.500 17 76 17 75 16.500 C74 17 72.500 17 72 14 Z" fill="#2e9e3e"/><text x="75" y="26.8" font-family="'Liberation Serif',serif" font-size="1.6" font-weight="700" font-style="normal" text-anchor="middle" fill="#246a30" opacity="1" textLength="12" lengthAdjust="spacingAndGlyphs">Житомирський</text><text x="75" y="28.8" font-family="'Liberation Serif',serif" font-size="1.6" font-weight="700" font-style="normal" text-anchor="middle" fill="#246a30" opacity="1" textLength="12" lengthAdjust="spacingAndGlyphs">агротехнічний</text><text x="75" y="30.8" font-family="'Liberation Serif',serif" font-size="1.6" font-weight="700" font-style="normal" text-anchor="middle" fill="#246a30" opacity="1" textLength="6" lengthAdjust="spacingAndGlyphs">коледж</text><rect x="40.9" y="27.4" width="22.9" height="20.2" fill="#1d4f85"/><circle cx="52.300" cy="37.500" r="8" fill="#e8e4dc"/><circle cx="52.300" cy="37.500" r="6.300" fill="#2a62a8"/><ellipse cx="52.300" cy="37.200" rx="4.200" ry="2.800" fill="#e0803a"/><path d="M46.500 39.500 H58 L55.500 43 H49 Z" fill="#d8d0c4"/><ellipse cx="19" cy="39.900" rx="12" ry="8.500" fill="#faf6e4"/><ellipse cx="19" cy="39.900" rx="10" ry="6.800" fill="none" stroke="#c9a850" stroke-width="2.200"/><circle cx="19" cy="39.600" r="3.800" fill="#9ab8c8"/><circle cx="19" cy="39.600" r="2" fill="#e8d890"/></svg>
<span style="position:absolute;left:4px;top:514.7px;width:13px;text-align:center;font:10.500px/12px 'Liberation Sans',sans-serif;color:#505050;">9</span>
<svg style="position:absolute;left:6.299999999999997px;top:527.9px" width="8" height="8" viewBox="0 0 10 10"><path d="M5 0.500 L6.300 3.800 L9.800 3.900 L7 6 L8 9.400 L5 7.400 L2 9.400 L3 6 L0.200 3.900 L3.700 3.800 Z" fill="#555"/></svg>
<svg style="position:absolute;left:23.400000000000006px;top:517.9px;overflow:hidden;background:#fef6cb;box-shadow:0 0 0 0.500px #d8d4c0;" width="87" height="49" viewBox="0 0 87 49"><text x="44" y="5.9" font-family="'Liberation Serif',serif" font-size="2.6" font-weight="400" font-style="italic" text-anchor="middle" fill="#2a2a2a" opacity="0.8" textLength="30" lengthAdjust="spacingAndGlyphs">Перспективи досліджень</text><rect x="9.2" y="9.6" width="70.2" height="1.3" fill="#111"/><text x="8" y="15.3" font-family="'Liberation Serif',serif" font-size="2.2" font-weight="400" font-style="normal" text-anchor="start" fill="#2a2a2a" opacity="0.8" textLength="76" lengthAdjust="spacingAndGlyphs">План на третій рік: Оформити та завершити дисертаційне дослідження,</text><text x="3.4" y="17.5" font-family="'Liberation Serif',serif" font-size="2.2" font-weight="700" font-style="normal" text-anchor="start" fill="#2a2a2a" opacity="0.8" textLength="62" lengthAdjust="spacingAndGlyphs">оприлюднити результати у фахових виданнях, пройти апробацію.</text></svg>
</div>
<svg width="0" height="0" style="position:absolute"><defs>
<filter id="b4" x="-20%" y="-20%" width="140%" height="140%"><feGaussianBlur stdDeviation="4"/></filter>
<filter id="b6" x="-30%" y="-60%" width="160%" height="220%"><feGaussianBlur stdDeviation="5.500"/></filter>
<filter id="b8" x="-20%" y="-20%" width="140%" height="140%"><feGaussianBlur stdDeviation="7"/></filter>
<filter id="b12" x="-30%" y="-30%" width="160%" height="160%"><feGaussianBlur stdDeviation="12"/></filter>
<filter id="b25" x="-40%" y="-40%" width="180%" height="180%"><feGaussianBlur stdDeviation="24"/></filter>
<filter id="b40" x="-60%" y="-60%" width="220%" height="220%"><feGaussianBlur stdDeviation="40"/></filter>
</defs></svg>
<div style="position:absolute;left:1168px;top:383px;width:168px;height:98px;background:linear-gradient(180deg,#d4ec68 0%,#c6e652 40%,#92d222 50%,#b2dc3a 75%,#e6f07c 100%);box-shadow:0 0 0 0.700px #0c0c0c;"></div>
<svg style="position:absolute;left:1006px;top:99px;overflow:hidden;background:#333" width="160" height="90" viewBox="45 30 1230 690" preserveAspectRatio="none"><rect x="45" y="30" width="1230" height="690" fill="#6b3f2b"/><rect x="45" y="30" width="530" height="75" fill="#5a3828"/><rect x="80" y="35" width="350" height="65" fill="#c9c2b4" filter="url(#b8)"/><rect x="440" y="35" width="115" height="65" fill="#5ea7c6" filter="url(#b8)"/><rect x="170" y="60" width="180" height="35" fill="#8a8f96" filter="url(#b8)"/><rect x="45" y="100" width="530" height="22" fill="#a0694a"/><rect x="630" y="108" width="600" height="22" fill="#a56d4a"/><rect x="45" y="122" width="530" height="310" fill="#4a2c20"/><rect x="52" y="140" width="70" height="200" fill="#c3cf9f" filter="url(#b4)"/><rect x="52" y="335" width="70" height="100" fill="#55585a" filter="url(#b4)"/><rect x="70" y="365" width="34" height="22" fill="#e8e8e8" filter="url(#b4)"/><rect x="125" y="140" width="70" height="200" fill="#bccb9c" filter="url(#b4)"/><rect x="125" y="335" width="70" height="100" fill="#55585a" filter="url(#b4)"/><rect x="143" y="365" width="34" height="22" fill="#e8e8e8" filter="url(#b4)"/><rect x="208" y="140" width="70" height="200" fill="#dfe0cf" filter="url(#b4)"/><rect x="208" y="335" width="70" height="100" fill="#55585a" filter="url(#b4)"/><rect x="226" y="365" width="34" height="22" fill="#e8e8e8" filter="url(#b4)"/><rect x="283" y="140" width="70" height="200" fill="#d5dcc0" filter="url(#b4)"/><rect x="283" y="335" width="70" height="100" fill="#55585a" filter="url(#b4)"/><rect x="301" y="365" width="34" height="22" fill="#e8e8e8" filter="url(#b4)"/><rect x="372" y="140" width="70" height="200" fill="#9fc996" filter="url(#b4)"/><rect x="372" y="335" width="70" height="100" fill="#55585a" filter="url(#b4)"/><rect x="390" y="365" width="34" height="22" fill="#e8e8e8" filter="url(#b4)"/><rect x="208" y="335" width="150" height="100" fill="#e4e4e2" filter="url(#b4)"/><rect x="283" y="335" width="75" height="100" fill="#5a5d5e" filter="url(#b4)"/><rect x="372" y="345" width="75" height="85" fill="#e8e8e6" filter="url(#b4)"/><rect x="45" y="432" width="450" height="24" fill="#a5694a"/><rect x="880" y="425" width="185" height="20" fill="#a5694a"/><rect x="45" y="456" width="450" height="120" fill="#6a3c2a"/><rect x="45" y="570" width="500" height="150" fill="#55301f"/><rect x="575" y="30" width="20" height="200" fill="#8f5f42"/><rect x="595" y="30" width="14" height="200" fill="#2e1e16"/><rect x="609" y="30" width="22" height="200" fill="#9a6848"/><rect x="635" y="30" width="285" height="80" fill="#a32f3f" filter="url(#b4)"/><rect x="640" y="55" width="38" height="28" fill="#e2c8c8" filter="url(#b4)"/><rect x="690" y="55" width="38" height="28" fill="#e2c8c8" filter="url(#b4)"/><rect x="745" y="55" width="38" height="28" fill="#e2c8c8" filter="url(#b4)"/><rect x="800" y="55" width="38" height="28" fill="#e2c8c8" filter="url(#b4)"/><rect x="860" y="55" width="38" height="28" fill="#e2c8c8" filter="url(#b4)"/><rect x="1020" y="30" width="85" height="75" fill="#54443a" filter="url(#b8)"/><rect x="1040" y="35" width="40" height="40" fill="#9a9088" filter="url(#b8)"/><rect x="630" y="130" width="560" height="300" fill="#713e29"/><rect x="640" y="150" width="160" height="85" fill="#5a3020"/><rect x="645" y="155" width="42" height="75" fill="#e4e4e4" filter="url(#b4)"/><rect x="700" y="155" width="42" height="75" fill="#e4e4e4" filter="url(#b4)"/><rect x="760" y="155" width="42" height="75" fill="#e4e4e4" filter="url(#b4)"/><rect x="1180" y="30" width="95" height="690" fill="#a1623a" filter="url(#b8)"/><ellipse cx="1140" cy="330" rx="95" ry="140" fill="#4a2a2c" filter="url(#b12)"/><ellipse cx="1040" cy="360" rx="45" ry="55" fill="#2e2020" filter="url(#b8)"/><rect x="1015" y="325" width="35" height="60" fill="#d9c8c0" filter="url(#b4)"/><rect x="880" y="445" width="300" height="130" fill="#6e3c28"/><rect x="1060" y="465" width="190" height="255" fill="#1d1d24" filter="url(#b8)"/><rect x="1155" y="470" width="22" height="150" fill="#e6e6ea" filter="url(#b4)"/><rect x="1195" y="480" width="30" height="240" fill="#ecece8" filter="url(#b4)"/><rect x="1120" y="690" width="50" height="30" fill="#e0e0e0" filter="url(#b4)"/><path d="M500 575 C480 400 520 210 690 200 C860 210 900 400 880 575 Z" fill="#c7b7a4" filter="url(#b8)"/><ellipse cx="690" cy="250" rx="130" ry="60" fill="#d8c8b2" filter="url(#b8)"/><ellipse cx="690" cy="440" rx="105" ry="140" fill="#d7a596" filter="url(#b8)"/><ellipse cx="690" cy="560" rx="70" ry="40" fill="#c99684" filter="url(#b8)"/><ellipse cx="640" cy="385" rx="25.6" ry="10.0" fill="#6a4a44" filter="url(#b6)" opacity="0.85"/><ellipse cx="745" cy="385" rx="25.6" ry="10.0" fill="#6a4a44" filter="url(#b6)" opacity="0.85"/><ellipse cx="692" cy="520" rx="32.0" ry="10.0" fill="#a8584e" filter="url(#b6)" opacity="0.85"/><path d="M330 720 C380 600 520 570 690 580 C860 570 1000 600 1050 720 Z" fill="#4a4440" filter="url(#b8)"/><rect x="45" y="30" width="1230" height="690" fill="rgba(40,22,14,0.16)"/></svg>
<div style="position:absolute;left:1006px;top:169px;width:132px;height:20px;background:rgba(42,42,42,0.68);"></div>
<svg style="position:absolute;left:1009px;top:171.3px" width="14" height="15" viewBox="0 0 14 15">
<rect x="4.700" y="1.500" width="4.600" height="7.800" rx="2.300" fill="#e0524f"/>
<path d="M3 7.500 C3 10 5 11.200 7 11.200 C9 11.200 11 10 11 7.500" fill="none" stroke="#e0524f" stroke-width="1.100"/>
<path d="M7 11.200 V13.300 M4.800 13.600 H9.200" stroke="#e0524f" stroke-width="1.100" fill="none"/>
<path d="M1 14 L12.800 1" stroke="#e0524f" stroke-width="1.200"/><path d="M2 14.500 L13.500 1.800" stroke="#3a3030" stroke-width="0.700" opacity="0.700"/></svg>
<svg style="position:absolute;left:1028px;top:172px" width="12" height="15" viewBox="0 0 12 15"><path d="M3.500 0.800 H8.500 V2.200 L7.800 2.800 V6 L10.300 8 V9.300 H1.700 V8 L4.200 6 V2.800 L3.500 2.200 Z" fill="#e8e8e8"/><path d="M6 9.300 V14" stroke="#e8e8e8" stroke-width="1.300"/></svg>
<span style="position:absolute;left:1045.80px;top:173.42px;font:normal 400 12.5px/1 'Liberation Sans', sans-serif;color:#ffffff;white-space:pre;letter-spacing:-0.019px;">Тетяна Самусь</span>
<svg style="position:absolute;left:1172px;top:99px;overflow:hidden;background:#333" width="160" height="90" viewBox="45 30 1230 690" preserveAspectRatio="none"><rect x="45" y="30" width="1230" height="690" fill="#a88653"/><rect x="45" y="30" width="530" height="400" fill="#ad8a52"/><rect x="45" y="30" width="200" height="400" fill="#9f7b46" filter="url(#b12)"/><ellipse cx="250" cy="290" rx="95" ry="130" fill="#cbbd93" filter="url(#b12)"/><ellipse cx="230" cy="180" rx="40" ry="60" fill="#c2ae80" filter="url(#b12)"/><path d="M330 40 L420 420 M420 60 L380 300" fill="none" filter="url(#b8)" stroke="#c9b37c" stroke-width="14"/><rect x="570" y="30" width="640" height="690" fill="#f6f1ea" filter="url(#b8)"/><ellipse cx="1000" cy="350" rx="180" ry="330" fill="#ffffff" filter="url(#b12)"/><rect x="1130" y="30" width="145" height="110" fill="#8c7b6a" filter="url(#b12)"/><rect x="1205" y="130" width="70" height="590" fill="#4d4030" filter="url(#b12)"/><ellipse cx="1255" cy="330" rx="16" ry="18" fill="#d8607a" filter="url(#b4)"/><ellipse cx="1250" cy="390" rx="18" ry="20" fill="#7a4a8a" filter="url(#b4)"/><ellipse cx="1250" cy="520" rx="22" ry="26" fill="#c03a3a" filter="url(#b4)"/><ellipse cx="1240" cy="640" rx="18" ry="40" fill="#2a6a4a" filter="url(#b8)"/><path d="M45 440 C150 415 300 420 520 440 L540 720 L45 720 Z" fill="#1b1f17" filter="url(#b8)"/><path d="M820 720 L830 620 C950 640 1100 660 1150 720 Z" fill="#7c7570" filter="url(#b8)"/><ellipse cx="680" cy="230" rx="212" ry="185" fill="#3b2d25" filter="url(#b8)"/><ellipse cx="690" cy="400" rx="210" ry="270" fill="#b98e7c" filter="url(#b8)"/><ellipse cx="680" cy="250" rx="160" ry="90" fill="#c29a86" filter="url(#b12)"/><ellipse cx="820" cy="440" rx="80" ry="200" fill="#9a7060" filter="url(#b25)"/><ellipse cx="560" cy="470" rx="70" ry="120" fill="#c39a88" filter="url(#b25)"/><ellipse cx="465" cy="385" rx="25" ry="55" fill="#b08270" filter="url(#b8)"/><ellipse cx="895" cy="375" rx="22" ry="50" fill="#c09886" filter="url(#b8)"/><ellipse cx="580" cy="295" rx="56.0" ry="9.0" fill="#3a2a26" filter="url(#b6)" opacity="0.85"/><ellipse cx="790" cy="290" rx="56.0" ry="9.0" fill="#3a2a26" filter="url(#b6)" opacity="0.85"/><ellipse cx="580" cy="330" rx="48.0" ry="16.0" fill="#3a2a26" filter="url(#b6)" opacity="0.85"/><ellipse cx="790" cy="325" rx="48.0" ry="16.0" fill="#3a2a26" filter="url(#b6)" opacity="0.85"/><ellipse cx="690" cy="430" rx="40" ry="30" fill="#a97c6c" filter="url(#b8)"/><ellipse cx="690" cy="555" rx="56.0" ry="14.0" fill="#8a5a54" filter="url(#b6)" opacity="0.85"/><ellipse cx="700" cy="640" rx="170" ry="80" fill="#a88070" filter="url(#b12)"/></svg>
<div style="position:absolute;left:1172px;top:169px;width:100px;height:20px;background:rgba(42,42,42,0.68);"></div>
<svg style="position:absolute;left:1175px;top:171.3px" width="14" height="15" viewBox="0 0 14 15">
<rect x="4.700" y="1.500" width="4.600" height="7.800" rx="2.300" fill="#e0524f"/>
<path d="M3 7.500 C3 10 5 11.200 7 11.200 C9 11.200 11 10 11 7.500" fill="none" stroke="#e0524f" stroke-width="1.100"/>
<path d="M7 11.200 V13.300 M4.800 13.600 H9.200" stroke="#e0524f" stroke-width="1.100" fill="none"/>
<path d="M1 14 L12.800 1" stroke="#e0524f" stroke-width="1.200"/><path d="M2 14.500 L13.500 1.800" stroke="#3a3030" stroke-width="0.700" opacity="0.700"/></svg>
<span style="position:absolute;left:1194.00px;top:173.42px;font:normal 400 12.5px/1 'Liberation Sans', sans-serif;color:#ffffff;white-space:pre;letter-spacing:0.281px;">Богдан Вовк</span>
<svg style="position:absolute;left:1006px;top:195px;overflow:hidden;background:#333" width="160" height="90" viewBox="45 30 1230 690" preserveAspectRatio="none"><rect x="45" y="30" width="1230" height="690" fill="#8d4d32"/><rect x="45" y="30" width="1230" height="60" fill="#b4aaa2" filter="url(#b8)"/><rect x="45" y="30" width="200" height="690" fill="#f7f2f2" filter="url(#b8)"/><rect x="225" y="30" width="105" height="690" fill="#d9b4ab" filter="url(#b12)"/><rect x="330" y="80" width="300" height="500" fill="#8f4d33" filter="url(#b8)"/><ellipse cx="470" cy="250" rx="90" ry="170" fill="#9c5a3c" filter="url(#b12)"/><path d="M610 300 L610 160 C700 60 950 60 1045 150 L1045 300 Z" fill="#dcdcdc" filter="url(#b8)"/><rect x="620" y="200" width="420" height="100" fill="#cfcfcf" filter="url(#b8)"/><rect x="830" y="300" width="220" height="280" fill="#a97a4c" filter="url(#b8)"/><path d="M840 400 C880 300 1000 300 1040 400 V570 H840 Z" fill="#b8895a" filter="url(#b8)"/><rect x="1040" y="130" width="32" height="590" fill="#2a201c" filter="url(#b8)"/><rect x="1070" y="80" width="205" height="640" fill="#7c3b21" filter="url(#b8)"/><ellipse cx="1170" cy="380" rx="60" ry="260" fill="#8a4527" filter="url(#b12)"/><ellipse cx="1115" cy="520" rx="10" ry="22" fill="#d0c0b0" filter="url(#b4)"/><ellipse cx="680" cy="230" rx="165" ry="115" fill="#5c4332" filter="url(#b8)"/><ellipse cx="665" cy="400" rx="165" ry="205" fill="#bf907e" filter="url(#b8)"/><ellipse cx="560" cy="400" rx="70" ry="170" fill="#efd9d2" filter="url(#b12)"/><ellipse cx="750" cy="420" rx="60" ry="130" fill="#a87868" filter="url(#b12)"/><ellipse cx="600" cy="370" rx="36.0" ry="12.0" fill="#5a3c34" filter="url(#b6)" opacity="0.85"/><ellipse cx="740" cy="370" rx="36.0" ry="12.0" fill="#5a3c34" filter="url(#b6)" opacity="0.85"/><ellipse cx="660" cy="530" rx="48.0" ry="12.0" fill="#8a5a50" filter="url(#b6)" opacity="0.85"/><path d="M420 720 L440 560 C480 500 540 500 560 540 L600 580 H780 L800 500 C860 470 920 520 960 580 L1000 720 Z" fill="#1b1b1b" filter="url(#b8)"/><ellipse cx="690" cy="600" rx="100" ry="40" fill="#b89080" filter="url(#b8)"/></svg>
<div style="position:absolute;left:1006px;top:265px;width:138px;height:20px;background:rgba(42,42,42,0.68);"></div>
<svg style="position:absolute;left:1009px;top:267.3px" width="14" height="15" viewBox="0 0 14 15">
<rect x="4.700" y="1.500" width="4.600" height="7.800" rx="2.300" fill="#e0524f"/>
<path d="M3 7.500 C3 10 5 11.200 7 11.200 C9 11.200 11 10 11 7.500" fill="none" stroke="#e0524f" stroke-width="1.100"/>
<path d="M7 11.200 V13.300 M4.800 13.600 H9.200" stroke="#e0524f" stroke-width="1.100" fill="none"/>
<path d="M1 14 L12.800 1" stroke="#e0524f" stroke-width="1.200"/><path d="M2 14.500 L13.500 1.800" stroke="#3a3030" stroke-width="0.700" opacity="0.700"/></svg>
<span style="position:absolute;left:1028.00px;top:269.42px;font:normal 400 12.5px/1 'Liberation Sans', sans-serif;color:#ffffff;white-space:pre;letter-spacing:0.008px;">Віталій Опанасенко</span>
<svg style="position:absolute;left:1172px;top:195px;overflow:hidden;background:#333" width="160" height="90" viewBox="45 30 1230 690" preserveAspectRatio="none"><rect x="45" y="30" width="1230" height="690" fill="#8fc1dd"/><ellipse cx="1000" cy="160" rx="380" ry="200" fill="#c2dcea" filter="url(#b25)"/><ellipse cx="350" cy="620" rx="300" ry="130" fill="#a5cde3" filter="url(#b25)"/><ellipse cx="640" cy="330" rx="60" ry="120" fill="#a9d0e6" filter="url(#b25)"/><ellipse cx="170" cy="130" rx="90" ry="70" fill="#2a2f22" filter="url(#b12)"/><path d="M180 120 Q99 136 33 257 M180 120 Q133 170 95 297 M180 120 Q172 183 165 295 M180 120 Q227 170 265 297 M180 120 Q265 129 334 246 M180 120 Q268 57 340 118 M180 120 Q99 43 33 87 M180 120 Q92 57 20 118" fill="none" stroke="#2a2f22" stroke-width="30" stroke-linecap="round" filter="url(#b4)"/><path d="M170 130 Q119 157 78 254 M170 130 Q182 177 193 266 M170 130 Q240 119 298 197" fill="none" stroke="#6b6a3e" stroke-width="16" stroke-linecap="round" filter="url(#b4)"/><path d="M60 350 Q127 351 182 437 M60 350 Q130 314 188 372 M60 350 Q106 381 144 479 M60 350 Q72 397 83 486" fill="none" stroke="#4a4a2c" stroke-width="24" stroke-linecap="round" filter="url(#b4)"/><path d="M50 420 Q102 430 145 508 M50 420 Q80 453 105 535" fill="none" stroke="#7d7a4c" stroke-width="18" stroke-linecap="round" filter="url(#b4)"/><ellipse cx="505" cy="185" rx="120" ry="80" fill="#2a2f22" filter="url(#b12)"/><path d="M510 190 Q377 181 269 339 M510 190 Q405 233 318 418 M510 190 Q452 270 404 454 M510 190 Q546 278 575 454 M510 190 Q598 250 671 438 M510 190 Q635 203 737 375 M510 190 Q647 133 759 255 M510 190 Q623 66 715 118 M510 190 Q397 66 305 118 M510 190 Q377 109 269 210" fill="none" stroke="#2a2f22" stroke-width="34" stroke-linecap="round" filter="url(#b4)"/><path d="M510 190 Q494 251 480 368 M510 190 Q510 253 510 360 M510 190 Q557 240 595 367 M510 190 Q450 231 401 358" fill="none" stroke="#3b3f2a" stroke-width="30" stroke-linecap="round" filter="url(#b4)"/><rect x="496" y="240" width="30" height="370" fill="#5d5545" filter="url(#b4)"/><rect x="504" y="300" width="10" height="300" fill="#8a8068" filter="url(#b4)"/><path d="M760 160 Q679 147 612 238 M760 160 Q682 105 619 158 M760 160 Q841 147 908 238 M760 160 Q838 105 901 158 M760 160 Q823 80 875 104" fill="none" stroke="#6b6a3e" stroke-width="22" stroke-linecap="round" filter="url(#b4)"/><ellipse cx="760" cy="150" rx="90" ry="45" fill="#5c6238" filter="url(#b8)"/><path d="M930 200 Q984 172 1028 217 M930 200 Q984 192 1028 252" fill="none" stroke="#8a8a5c" stroke-width="12" stroke-linecap="round" filter="url(#b4)"/><ellipse cx="285" cy="455" rx="80" ry="55" fill="#5a5832" filter="url(#b12)"/><path d="M285 450 Q207 451 144 551 M285 450 Q232 486 189 599 M285 450 Q271 504 259 607 M285 450 Q338 486 381 599 M285 450 Q363 451 426 551 M285 450 Q366 409 433 476 M285 450 Q348 370 400 394 M285 450 Q222 370 170 394 M285 450 Q205 402 140 462" fill="none" stroke="#55532e" stroke-width="24" stroke-linecap="round" filter="url(#b4)"/><path d="M290 440 Q242 450 203 520 M290 440 Q338 450 377 520 M290 440 Q342 403 384 439" fill="none" stroke="#8d8748" stroke-width="14" stroke-linecap="round" filter="url(#b4)"/><rect x="262" y="500" width="24" height="220" fill="#4d4a35" filter="url(#b4)"/><path d="M570 560 Q589 514 605 512 M570 560 Q563 509 558 495 M570 560 Q545 518 525 522 M570 560 Q603 528 631 546 M570 560 Q534 534 504 559" fill="none" stroke="#4a5030" stroke-width="16" stroke-linecap="round" filter="url(#b4)"/><ellipse cx="1120" cy="360" rx="70" ry="60" fill="#363a26" filter="url(#b12)"/><path d="M1120 350 Q1042 351 979 451 M1120 350 Q1067 386 1024 499 M1120 350 Q1106 404 1094 507 M1120 350 Q1161 394 1195 506 M1120 350 Q1191 364 1250 470 M1120 350 Q1202 323 1270 402 M1120 350 Q1191 282 1250 320 M1120 350 Q1049 282 990 320 M1120 350 Q1040 302 975 362" fill="none" stroke="#363a26" stroke-width="22" stroke-linecap="round" filter="url(#b4)"/><path d="M1050 400 Q1120 560 1235 720" fill="none" filter="url(#b4)" stroke="#2a2a20" stroke-width="12"/><path d="M1170 60 Q1078 46 1003 123 M1170 60 Q1098 90 1040 195 M1170 60 Q1138 117 1112 231 M1170 60 Q1186 121 1200 233 M1170 60 Q1224 106 1268 219 M1170 60 Q1251 76 1317 174" fill="none" stroke="#2a2f22" stroke-width="30" stroke-linecap="round" filter="url(#b4)"/><ellipse cx="1158" cy="128" rx="48" ry="48" fill="#e3222f" filter="url(#b4)"/><ellipse cx="1262" cy="660" rx="18" ry="40" fill="#4a6a5a" filter="url(#b8)"/><path d="M610 720 C600 500 640 200 840 190 C1040 200 1060 500 1060 720 Z" fill="#4b3a33" filter="url(#b8)"/><ellipse cx="840" cy="430" rx="125" ry="175" fill="#c9a999" filter="url(#b8)"/><ellipse cx="840" cy="320" rx="90" ry="50" fill="#d2b2a2" filter="url(#b12)"/><ellipse cx="780" cy="425" rx="28.0" ry="9.0" fill="#6a4a44" filter="url(#b6)" opacity="0.85"/><ellipse cx="910" cy="450" rx="25.6" ry="9.0" fill="#6a4a44" filter="url(#b6)" opacity="0.85"/><ellipse cx="850" cy="575" rx="48.0" ry="12.0" fill="#7a4a44" filter="url(#b6)" opacity="0.85"/></svg>
<div style="position:absolute;left:1172px;top:265px;width:141px;height:20px;background:rgba(42,42,42,0.68);"></div>
<svg style="position:absolute;left:1175px;top:267.3px" width="14" height="15" viewBox="0 0 14 15">
<rect x="4.700" y="1.500" width="4.600" height="7.800" rx="2.300" fill="#e0524f"/>
<path d="M3 7.500 C3 10 5 11.200 7 11.200 C9 11.200 11 10 11 7.500" fill="none" stroke="#e0524f" stroke-width="1.100"/>
<path d="M7 11.200 V13.300 M4.800 13.600 H9.200" stroke="#e0524f" stroke-width="1.100" fill="none"/>
<path d="M1 14 L12.800 1" stroke="#e0524f" stroke-width="1.200"/><path d="M2 14.500 L13.500 1.800" stroke="#3a3030" stroke-width="0.700" opacity="0.700"/></svg>
<span style="position:absolute;left:1194.00px;top:269.42px;font:normal 400 12.5px/1 'Liberation Sans', sans-serif;color:#ffffff;white-space:pre;letter-spacing:0.248px;">Наталія Мошенець</span>
<svg style="position:absolute;left:1006px;top:291px;overflow:hidden;background:#333" width="160" height="90" viewBox="45 30 1230 690" preserveAspectRatio="none"><rect x="45" y="30" width="1230" height="690" fill="#d6d2cd"/><rect x="45" y="30" width="1230" height="200" fill="#dedad6" filter="url(#b25)"/><rect x="45" y="290" width="340" height="300" fill="#9c6b42" filter="url(#b25)"/><rect x="45" y="300" width="120" height="280" fill="#6f4c34" filter="url(#b25)"/><ellipse cx="150" cy="400" rx="80" ry="70" fill="#c8c4c0" filter="url(#b25)"/><ellipse cx="90" cy="510" rx="60" ry="60" fill="#5a2e22" filter="url(#b25)"/><rect x="1060" y="230" width="215" height="490" fill="#a97b42" filter="url(#b25)"/><rect x="1040" y="230" width="120" height="90" fill="#7a5c3a" filter="url(#b25)"/><path d="M260 720 C280 560 340 510 420 510 H800 C900 520 1150 600 1220 720 Z" fill="#b3b3b3" filter="url(#b8)"/><ellipse cx="350" cy="540" rx="70" ry="35" fill="#9a9a98" filter="url(#b8)"/><ellipse cx="590" cy="190" rx="210" ry="170" fill="#2a2420" filter="url(#b8)"/><ellipse cx="600" cy="400" rx="215" ry="270" fill="#d9b9a2" filter="url(#b8)"/><ellipse cx="600" cy="230" rx="170" ry="90" fill="#dcbca6" filter="url(#b12)"/><ellipse cx="385" cy="380" rx="18" ry="50" fill="#c8a48c" filter="url(#b8)"/><ellipse cx="500" cy="345" rx="52.0" ry="14.0" fill="#5a4034" filter="url(#b6)" opacity="0.85"/><ellipse cx="730" cy="335" rx="52.0" ry="14.0" fill="#5a4034" filter="url(#b6)" opacity="0.85"/><ellipse cx="505" cy="385" rx="30.4" ry="12.0" fill="#6a5044" filter="url(#b6)" opacity="0.85"/><ellipse cx="730" cy="375" rx="30.4" ry="12.0" fill="#6a5044" filter="url(#b6)" opacity="0.85"/><ellipse cx="615" cy="500" rx="45" ry="35" fill="#cfa890" filter="url(#b8)"/><ellipse cx="620" cy="560" rx="64.0" ry="12.0" fill="#b08070" filter="url(#b6)" opacity="0.85"/></svg>
<div style="position:absolute;left:1006px;top:361px;width:119px;height:20px;background:rgba(42,42,42,0.68);"></div>
<svg style="position:absolute;left:1009px;top:363.3px" width="14" height="15" viewBox="0 0 14 15">
<rect x="4.700" y="1.500" width="4.600" height="7.800" rx="2.300" fill="#e0524f"/>
<path d="M3 7.500 C3 10 5 11.200 7 11.200 C9 11.200 11 10 11 7.500" fill="none" stroke="#e0524f" stroke-width="1.100"/>
<path d="M7 11.200 V13.300 M4.800 13.600 H9.200" stroke="#e0524f" stroke-width="1.100" fill="none"/>
<path d="M1 14 L12.800 1" stroke="#e0524f" stroke-width="1.200"/><path d="M2 14.500 L13.500 1.800" stroke="#3a3030" stroke-width="0.700" opacity="0.700"/></svg>
<span style="position:absolute;left:1028.00px;top:365.42px;font:normal 400 12.5px/1 'Liberation Sans', sans-serif;color:#ffffff;white-space:pre;letter-spacing:0.314px;">Богдан Матюха</span>
<svg style="position:absolute;left:1172px;top:291px;overflow:hidden;background:#333" width="160" height="90" viewBox="45 30 1230 690" preserveAspectRatio="none"><rect x="45" y="30" width="1230" height="690" fill="#dcdcdc"/><path d="M45 30 H1275 V120 L900 200 L520 250 L45 120 Z" fill="#cdcdcd" filter="url(#b25)"/><rect x="45" y="30" width="1230" height="40" fill="#d6d6d6" filter="url(#b12)"/><rect x="960" y="200" width="315" height="520" fill="#f1f1f1" filter="url(#b25)"/><rect x="45" y="250" width="480" height="470" fill="#e2e2e2" filter="url(#b25)"/><path d="M470 720 L560 590 C650 560 800 570 880 590 C960 600 1020 650 1040 720 Z" fill="#5b6068" filter="url(#b8)"/><ellipse cx="680" cy="330" rx="135" ry="95" fill="#3a3030" filter="url(#b8)"/><ellipse cx="680" cy="440" rx="135" ry="165" fill="#c9a191" filter="url(#b8)"/><ellipse cx="680" cy="330" rx="100" ry="45" fill="#caa494" filter="url(#b8)"/><ellipse cx="535" cy="465" rx="28" ry="42" fill="#17171a" filter="url(#b4)"/><ellipse cx="815" cy="470" rx="25" ry="40" fill="#17171a" filter="url(#b4)"/><path d="M540 430 C550 230 810 230 820 430" fill="none" filter="url(#b4)" stroke="#2a2a2e" stroke-width="14"/><rect x="560" y="405" width="240" height="9" fill="#4a4440" filter="url(#b4)"/><ellipse cx="620" cy="430" rx="45" ry="20" fill="#b09088" filter="url(#b4)"/><ellipse cx="745" cy="430" rx="45" ry="20" fill="#b09088" filter="url(#b4)"/><ellipse cx="670" cy="545" rx="48.0" ry="10.0" fill="#8a5a54" filter="url(#b6)" opacity="0.85"/><path d="M830 480 L800 540" fill="none" filter="url(#b4)" stroke="#e8e8e8" stroke-width="8"/></svg>
<div style="position:absolute;left:1172px;top:361px;width:97px;height:20px;background:rgba(42,42,42,0.68);"></div>
<svg style="position:absolute;left:1175px;top:363.3px" width="14" height="15" viewBox="0 0 14 15">
<rect x="4.700" y="1.500" width="4.600" height="7.800" rx="2.300" fill="#e0524f"/>
<path d="M3 7.500 C3 10 5 11.200 7 11.200 C9 11.200 11 10 11 7.500" fill="none" stroke="#e0524f" stroke-width="1.100"/>
<path d="M7 11.200 V13.300 M4.800 13.600 H9.200" stroke="#e0524f" stroke-width="1.100" fill="none"/>
<path d="M1 14 L12.800 1" stroke="#e0524f" stroke-width="1.200"/><path d="M2 14.500 L13.500 1.800" stroke="#3a3030" stroke-width="0.700" opacity="0.700"/></svg>
<span style="position:absolute;left:1194.00px;top:365.42px;font:normal 400 12.5px/1 'Liberation Sans', sans-serif;color:#ffffff;white-space:pre;letter-spacing:0.172px;">Denys Nahai</span>
<svg style="position:absolute;left:1006px;top:387px;overflow:hidden;background:#333" width="160" height="90" viewBox="45 30 1230 690" preserveAspectRatio="none"><rect x="45" y="30" width="1230" height="690" fill="#8f8f8f"/><rect x="45" y="30" width="420" height="690" fill="#4a4848" filter="url(#b40)"/><rect x="45" y="30" width="190" height="690" fill="#383636" filter="url(#b25)"/><ellipse cx="980" cy="340" rx="260" ry="280" fill="#aaaaaa" filter="url(#b40)"/><rect x="45" y="30" width="1230" height="60" fill="#555555" filter="url(#b25)"/><rect x="1222" y="30" width="53" height="330" fill="#43305a" filter="url(#b12)"/><rect x="1240" y="150" width="35" height="130" fill="#7a90a8" filter="url(#b12)"/><path d="M430 720 C460 600 520 560 600 560 H780 C900 570 1100 620 1180 720 Z" fill="#cbcbcb" filter="url(#b12)"/><ellipse cx="660" cy="270" rx="160" ry="135" fill="#2a2424" filter="url(#b8)"/><ellipse cx="650" cy="420" rx="155" ry="215" fill="#9f7768" filter="url(#b8)"/><ellipse cx="640" cy="300" rx="110" ry="60" fill="#a88070" filter="url(#b12)"/><ellipse cx="820" cy="400" rx="20" ry="50" fill="#a07a6a" filter="url(#b8)"/><ellipse cx="570" cy="365" rx="40.0" ry="11.0" fill="#4a3430" filter="url(#b6)" opacity="0.85"/><ellipse cx="700" cy="350" rx="40.0" ry="11.0" fill="#4a3430" filter="url(#b6)" opacity="0.85"/><ellipse cx="610" cy="440" rx="40" ry="40" fill="#8d6658" filter="url(#b8)"/><ellipse cx="620" cy="500" rx="44.0" ry="10.0" fill="#7a4e48" filter="url(#b6)" opacity="0.85"/></svg>
<div style="position:absolute;left:1006px;top:457px;width:130px;height:20px;background:rgba(42,42,42,0.68);"></div>
<svg style="position:absolute;left:1009px;top:459.3px" width="14" height="15" viewBox="0 0 14 15">
<rect x="4.700" y="1.500" width="4.600" height="7.800" rx="2.300" fill="#e0524f"/>
<path d="M3 7.500 C3 10 5 11.200 7 11.200 C9 11.200 11 10 11 7.500" fill="none" stroke="#e0524f" stroke-width="1.100"/>
<path d="M7 11.200 V13.300 M4.800 13.600 H9.200" stroke="#e0524f" stroke-width="1.100" fill="none"/>
<path d="M1 14 L12.800 1" stroke="#e0524f" stroke-width="1.200"/><path d="M2 14.500 L13.500 1.800" stroke="#3a3030" stroke-width="0.700" opacity="0.700"/></svg>
<span style="position:absolute;left:1028.00px;top:461.42px;font:normal 400 12.5px/1 'Liberation Sans', sans-serif;color:#ffffff;white-space:pre;letter-spacing:0.134px;">Vadym Halisevych</span>
<svg style="position:absolute;left:1172px;top:387px;overflow:hidden;background:#333" width="160" height="90" viewBox="45 30 1230 690" preserveAspectRatio="none"><rect x="45" y="30" width="1230" height="690" fill="#92917a"/><rect x="45" y="30" width="330" height="690" fill="#6e6e58" filter="url(#b25)"/><rect x="800" y="30" width="475" height="690" fill="#a9a68a" filter="url(#b40)"/><ellipse cx="1100" cy="400" rx="150" ry="300" fill="#b4b196" filter="url(#b40)"/><path d="M120 30 H630 L270 130 Z" fill="#c6cfce" filter="url(#b8)"/><path d="M230 720 C300 600 420 570 560 570 H760 C900 580 1050 640 1090 720 Z" fill="#3a3a3c" filter="url(#b8)"/><ellipse cx="620" cy="330" rx="165" ry="150" fill="#4b3d39" filter="url(#b8)"/><ellipse cx="720" cy="470" rx="50" ry="110" fill="#4b3d39" filter="url(#b8)"/><ellipse cx="560" cy="420" rx="160" ry="190" fill="#dcc6c0" filter="url(#b8)"/><ellipse cx="655" cy="440" rx="60" ry="140" fill="#94705f" filter="url(#b12)"/><ellipse cx="510" cy="340" rx="90" ry="60" fill="#e8d6d0" filter="url(#b12)"/><ellipse cx="470" cy="330" rx="36.0" ry="10.0" fill="#4a3a38" filter="url(#b6)" opacity="0.85"/><ellipse cx="600" cy="315" rx="40.0" ry="11.0" fill="#4a3a38" filter="url(#b6)" opacity="0.85"/><ellipse cx="460" cy="385" rx="17.6" ry="9.0" fill="#5a4a48" filter="url(#b6)" opacity="0.85"/><ellipse cx="590" cy="375" rx="19.2" ry="10.0" fill="#4a3a38" filter="url(#b6)" opacity="0.85"/><ellipse cx="510" cy="490" rx="48.0" ry="14.0" fill="#5d3f38" filter="url(#b6)" opacity="0.85"/><ellipse cx="520" cy="540" rx="90" ry="30" fill="#b99088" filter="url(#b8)"/><ellipse cx="600" cy="560" rx="80" ry="40" fill="#7a5a50" filter="url(#b12)"/></svg>
<div style="position:absolute;left:1172px;top:457px;width:123px;height:20px;background:rgba(42,42,42,0.68);"></div>
<span style="position:absolute;left:1176.00px;top:461.42px;font:normal 400 12.5px/1 'Liberation Sans', sans-serif;color:#ffffff;white-space:pre;letter-spacing:0.238px;">Євгеній Авраменко</span>
<svg style="position:absolute;left:1006px;top:483px;overflow:hidden;background:#333" width="160" height="90" viewBox="45 30 1230 690" preserveAspectRatio="none"><rect x="45" y="30" width="1230" height="690" fill="#e7dacd"/><rect x="45" y="30" width="1230" height="140" fill="#e6e2de" filter="url(#b25)"/><rect x="45" y="30" width="150" height="690" fill="#ddd6d0" filter="url(#b25)"/><rect x="210" y="180" width="480" height="540" fill="#c69563" filter="url(#b25)"/><rect x="240" y="230" width="400" height="400" fill="#c99866" filter="url(#b25)"/><ellipse cx="1200" cy="400" rx="90" ry="170" fill="#8d9484" filter="url(#b25)"/><ellipse cx="1130" cy="520" rx="60" ry="90" fill="#b4a890" filter="url(#b25)"/><rect x="1100" y="560" width="175" height="160" fill="#d9c8b4" filter="url(#b25)"/><path d="M585 720 C560 450 620 235 790 230 C960 235 1010 450 1000 720 Z" fill="#2a2426" filter="url(#b8)"/><ellipse cx="770" cy="465" rx="135" ry="160" fill="#d9b9a9" filter="url(#b8)"/><ellipse cx="905" cy="410" rx="50" ry="120" fill="#2a2426" filter="url(#b8)"/><ellipse cx="760" cy="300" rx="120" ry="40" fill="#2a2426" filter="url(#b8)"/><ellipse cx="720" cy="440" rx="30.4" ry="10.0" fill="#5a4440" filter="url(#b6)" opacity="0.85"/><ellipse cx="840" cy="445" rx="20.0" ry="9.0" fill="#5a4440" filter="url(#b6)" opacity="0.85"/><ellipse cx="790" cy="520" rx="35" ry="28" fill="#cfa898" filter="url(#b8)"/><ellipse cx="790" cy="585" rx="40.0" ry="10.0" fill="#9a5a54" filter="url(#b6)" opacity="0.85"/><ellipse cx="800" cy="680" rx="180" ry="60" fill="#3a3436" filter="url(#b12)"/></svg>
<div style="position:absolute;left:1006px;top:553px;width:141px;height:20px;background:rgba(42,42,42,0.68);"></div>
<svg style="position:absolute;left:1009px;top:555.3px" width="14" height="15" viewBox="0 0 14 15">
<rect x="4.700" y="1.500" width="4.600" height="7.800" rx="2.300" fill="#e0524f"/>
<path d="M3 7.500 C3 10 5 11.200 7 11.200 C9 11.200 11 10 11 7.500" fill="none" stroke="#e0524f" stroke-width="1.100"/>
<path d="M7 11.200 V13.300 M4.800 13.600 H9.200" stroke="#e0524f" stroke-width="1.100" fill="none"/>
<path d="M1 14 L12.800 1" stroke="#e0524f" stroke-width="1.200"/><path d="M2 14.500 L13.500 1.800" stroke="#3a3030" stroke-width="0.700" opacity="0.700"/></svg>
<span style="position:absolute;left:1027.60px;top:557.42px;font:normal 400 12.5px/1 'Liberation Sans', sans-serif;color:#ffffff;white-space:pre;letter-spacing:0.298px;">Ірина Данильченко</span>
<svg style="position:absolute;left:1172px;top:483px;overflow:hidden;background:#333" width="160" height="90" viewBox="45 30 1230 690" preserveAspectRatio="none"><rect x="45" y="30" width="1230" height="690" fill="#e3e3e3"/><rect x="45" y="30" width="500" height="300" fill="#efefef" filter="url(#b25)"/><rect x="800" y="200" width="475" height="200" fill="#d5d5d5" filter="url(#b25)"/><rect x="45" y="395" width="1230" height="30" fill="#d9c3bb" filter="url(#b8)"/><rect x="45" y="420" width="1230" height="300" fill="#b1653c" filter="url(#b4)"/><rect x="45" y="430" width="1230" height="14" fill="#a05530" filter="url(#b4)"/><rect x="180" y="440" width="12" height="280" fill="#8a4626" filter="url(#b4)"/><rect x="350" y="440" width="12" height="280" fill="#8a4626" filter="url(#b4)"/><rect x="1000" y="440" width="12" height="280" fill="#8a4626" filter="url(#b4)"/><rect x="1180" y="440" width="12" height="280" fill="#8a4626" filter="url(#b4)"/><ellipse cx="270" cy="540" rx="55" ry="75" fill="#4b4038" filter="url(#b8)"/><ellipse cx="250" cy="520" rx="20" ry="30" fill="#a09890" filter="url(#b8)"/><ellipse cx="1095" cy="545" rx="48" ry="75" fill="#4b4038" filter="url(#b8)"/><rect x="45" y="440" width="130" height="280" fill="#c0754a" filter="url(#b12)"/><rect x="860" y="440" width="130" height="280" fill="#bb6c40" filter="url(#b12)"/><ellipse cx="610" cy="260" rx="245" ry="195" fill="#3a2c28" filter="url(#b8)"/><ellipse cx="500" cy="110" rx="80" ry="40" fill="#3a2c28" filter="url(#b8)"/><ellipse cx="740" cy="130" rx="70" ry="35" fill="#3a2c28" filter="url(#b8)"/><ellipse cx="400" cy="330" rx="40" ry="100" fill="#3a2c28" filter="url(#b8)"/><ellipse cx="835" cy="330" rx="30" ry="110" fill="#3a2c28" filter="url(#b8)"/><ellipse cx="630" cy="480" rx="200" ry="275" fill="#c9a292" filter="url(#b8)"/><ellipse cx="630" cy="290" rx="130" ry="60" fill="#c9a292" filter="url(#b12)"/><ellipse cx="530" cy="365" rx="52.0" ry="13.0" fill="#4a3430" filter="url(#b6)" opacity="0.85"/><ellipse cx="740" cy="360" rx="48.0" ry="13.0" fill="#4a3430" filter="url(#b6)" opacity="0.85"/><ellipse cx="535" cy="405" rx="30.4" ry="12.0" fill="#5a443e" filter="url(#b6)" opacity="0.85"/><ellipse cx="735" cy="400" rx="30.4" ry="12.0" fill="#5a443e" filter="url(#b6)" opacity="0.85"/><ellipse cx="615" cy="510" rx="45" ry="35" fill="#c09080" filter="url(#b8)"/><ellipse cx="630" cy="600" rx="90" ry="25" fill="#8a5a54" filter="url(#b8)"/></svg>
<div style="position:absolute;left:1172px;top:553px;width:146.5px;height:20px;background:rgba(42,42,42,0.68);"></div>
<svg style="position:absolute;left:1175px;top:555.3px" width="14" height="15" viewBox="0 0 14 15">
<rect x="4.700" y="1.500" width="4.600" height="7.800" rx="2.300" fill="#e0524f"/>
<path d="M3 7.500 C3 10 5 11.200 7 11.200 C9 11.200 11 10 11 7.500" fill="none" stroke="#e0524f" stroke-width="1.100"/>
<path d="M7 11.200 V13.300 M4.800 13.600 H9.200" stroke="#e0524f" stroke-width="1.100" fill="none"/>
<path d="M1 14 L12.800 1" stroke="#e0524f" stroke-width="1.200"/><path d="M2 14.500 L13.500 1.800" stroke="#3a3030" stroke-width="0.700" opacity="0.700"/></svg>
<span style="position:absolute;left:1194.00px;top:557.42px;font:normal 400 12.5px/1 'Liberation Sans', sans-serif;color:#ffffff;white-space:pre;letter-spacing:0.226px;">Данило Лісневський</span>
<svg style="position:absolute;left:1006px;top:579px;overflow:hidden;background:#333" width="160" height="90" viewBox="45 30 1230 690" preserveAspectRatio="none"><rect x="45" y="30" width="1230" height="690" fill="#f1f1f1"/><rect x="900" y="30" width="375" height="690" fill="#e6e6e6" filter="url(#b40)"/><path d="M390 70 L1275 40 V720 H500 Z" fill="#ececec" filter="url(#b8)"/><path d="M45 30 H140 L45 240 Z" fill="#f6f6f6"/><path d="M45 335 L170 40 L400 350 H570 V440 H380 L345 540 L300 540 L330 380 L170 130 L45 420 Z" fill="#c68a4c" filter="url(#b4)"/><path d="M45 250 L150 35 L190 35 L45 340 Z" fill="#b06c30" filter="url(#b4)"/><rect x="400" y="345" width="170" height="25" fill="#a9662c" filter="url(#b4)"/><ellipse cx="260" cy="440" rx="70" ry="25" fill="#e8dcc8" filter="url(#b8)"/><path d="M250 720 C280 590 330 530 420 490 C480 440 540 410 600 420 L810 450 C910 510 1060 550 1120 630 L1190 720 Z" fill="#4d4d4b" filter="url(#b8)"/><ellipse cx="690" cy="560" rx="90" ry="70" fill="#1a1a1a" filter="url(#b8)"/><path d="M1050 640 C1100 640 1160 680 1180 720 H1040 Z" fill="#5a5a58" filter="url(#b8)"/><ellipse cx="695" cy="250" rx="115" ry="95" fill="#4a3a30" filter="url(#b8)"/><ellipse cx="690" cy="330" rx="108" ry="150" fill="#c9a999" filter="url(#b8)"/><ellipse cx="690" cy="235" rx="80" ry="40" fill="#cfb0a0" filter="url(#b8)"/><ellipse cx="680" cy="460" rx="105" ry="75" fill="#6c4231" filter="url(#b8)"/><ellipse cx="670" cy="400" rx="44.0" ry="14.0" fill="#6c4231" filter="url(#b6)" opacity="0.85"/><ellipse cx="672" cy="430" rx="24.0" ry="8.0" fill="#a87868" filter="url(#b6)" opacity="0.85"/><ellipse cx="635" cy="300" rx="30.4" ry="9.0" fill="#3a2c28" filter="url(#b6)" opacity="0.85"/><ellipse cx="745" cy="295" rx="30.4" ry="9.0" fill="#3a2c28" filter="url(#b6)" opacity="0.85"/><ellipse cx="635" cy="325" rx="14.4" ry="8.0" fill="#3a3030" filter="url(#b6)" opacity="0.85"/><ellipse cx="740" cy="320" rx="14.4" ry="8.0" fill="#3a3030" filter="url(#b6)" opacity="0.85"/></svg>
<div style="position:absolute;left:1006px;top:649px;width:130px;height:20px;background:rgba(42,42,42,0.68);"></div>
<svg style="position:absolute;left:1009px;top:651.3px" width="14" height="15" viewBox="0 0 14 15">
<rect x="4.700" y="1.500" width="4.600" height="7.800" rx="2.300" fill="#e0524f"/>
<path d="M3 7.500 C3 10 5 11.200 7 11.200 C9 11.200 11 10 11 7.500" fill="none" stroke="#e0524f" stroke-width="1.100"/>
<path d="M7 11.200 V13.300 M4.800 13.600 H9.200" stroke="#e0524f" stroke-width="1.100" fill="none"/>
<path d="M1 14 L12.800 1" stroke="#e0524f" stroke-width="1.200"/><path d="M2 14.500 L13.500 1.800" stroke="#3a3030" stroke-width="0.700" opacity="0.700"/></svg>
<span style="position:absolute;left:1028.00px;top:653.42px;font:normal 400 12.5px/1 'Liberation Sans', sans-serif;color:#ffffff;white-space:pre;letter-spacing:0.622px;">Микола Муковоз</span>
<div style="position:absolute;left:1172px;top:579px;width:160px;height:90px;background:#222222;"></div>
<div style="position:absolute;left:1172px;top:649px;width:126px;height:20px;background:#2c2c2c;"></div>
<svg style="position:absolute;left:1175px;top:651.3px" width="14" height="15" viewBox="0 0 14 15">
<rect x="4.700" y="1.500" width="4.600" height="7.800" rx="2.300" fill="#e0524f"/>
<path d="M3 7.500 C3 10 5 11.200 7 11.200 C9 11.200 11 10 11 7.500" fill="none" stroke="#e0524f" stroke-width="1.100"/>
<path d="M7 11.200 V13.300 M4.800 13.600 H9.200" stroke="#e0524f" stroke-width="1.100" fill="none"/>
<path d="M1 14 L12.800 1" stroke="#e0524f" stroke-width="1.200"/><path d="M2 14.500 L13.500 1.800" stroke="#3a3030" stroke-width="0.700" opacity="0.700"/></svg>
<span style="position:absolute;left:1194.00px;top:653.42px;font:normal 400 12.5px/1 'Liberation Sans', sans-serif;color:#ffffff;white-space:pre;letter-spacing:0.344px;">Аркадій Шумара</span>
</body></html>
